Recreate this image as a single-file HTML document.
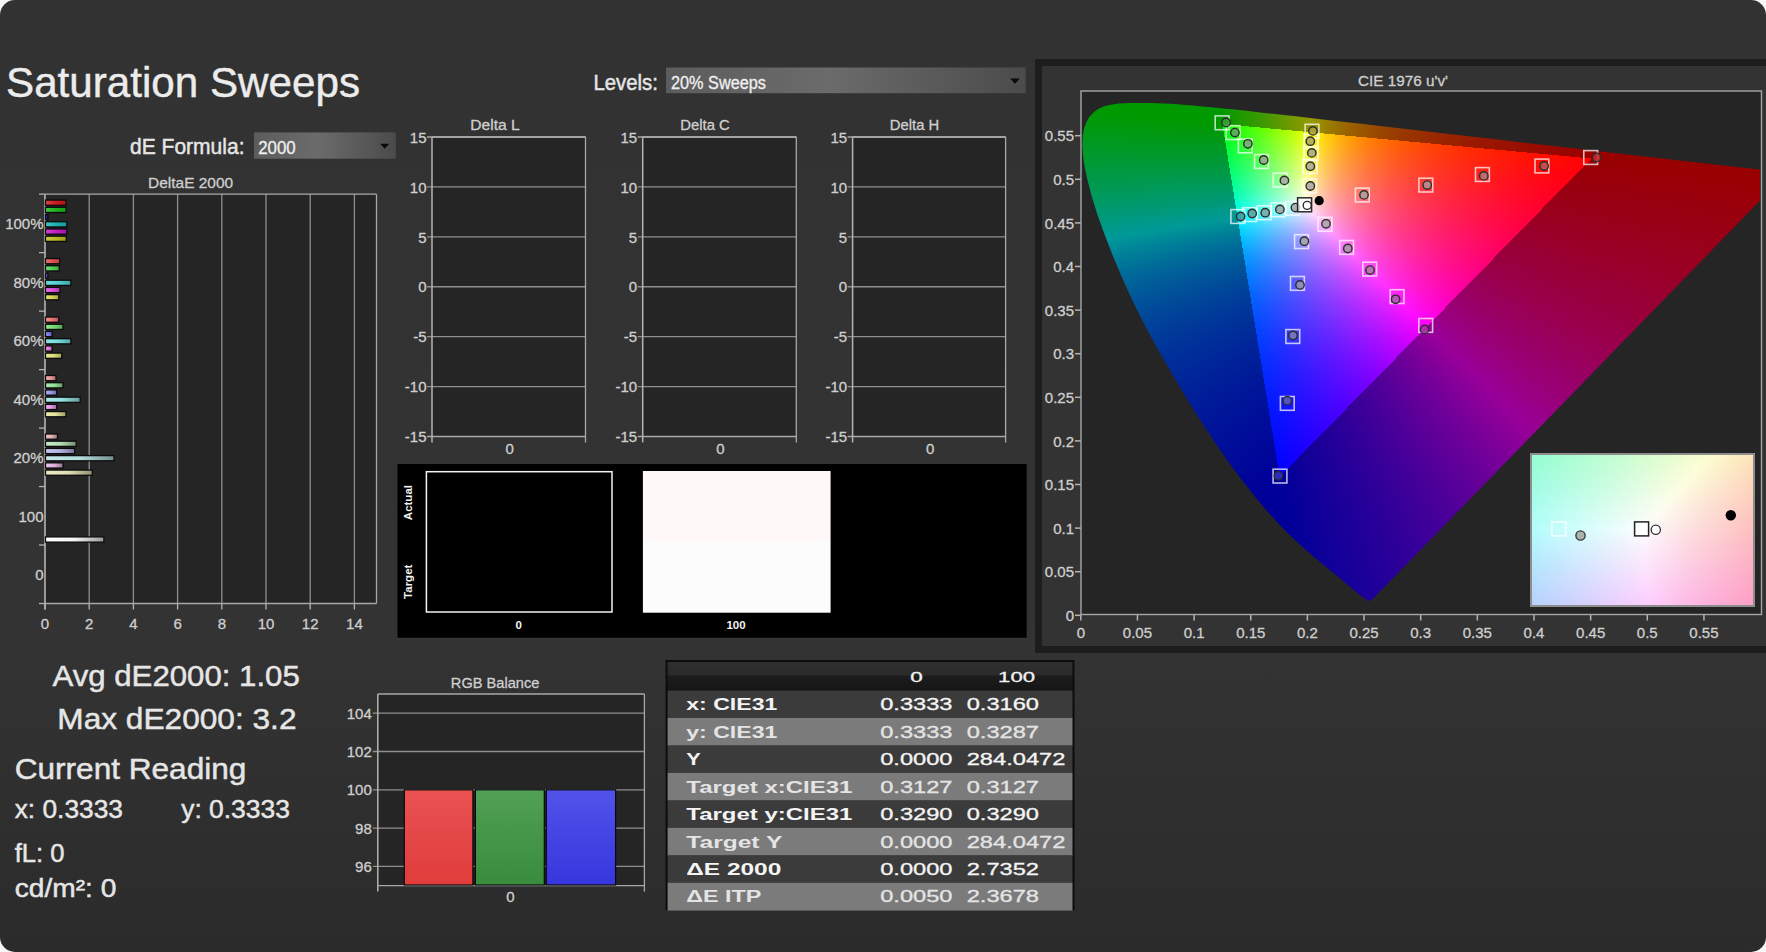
<!DOCTYPE html>
<html lang="en"><head><meta charset="utf-8"><title>Saturation Sweeps</title>
<style>
html,body{margin:0;padding:0;background:#f7f7f7}
body{width:1766px;height:952px;overflow:hidden;font-family:"Liberation Sans", sans-serif}
#app{position:relative;width:1766px;height:952px;background:linear-gradient(180deg,#323232 0,#333 68%,#2b2b2b 100%);border-radius:15px;overflow:hidden}
#app>div,#app>svg{position:absolute}
#ciepanel{left:1034.5px;top:59px;width:740px;height:594px;background:#1d1d1d}
#cieinner{left:1041.5px;top:66px;width:740px;height:580px;background:#333}
#cieplot{left:1081px;top:91px;width:680.5px;height:523.5px;background:#252525;overflow:hidden}
#locus{position:absolute;left:0;top:0;width:679.2px;height:524px;overflow:hidden;clip-path:polygon(290.8px 509.0px,290.7px 508.9px,290.6px 509.0px,290.5px 509.1px,290.4px 509.2px,290.3px 509.3px,290.2px 509.3px,290.0px 509.3px,289.9px 509.4px,289.7px 509.5px,289.5px 509.6px,289.3px 509.6px,289.1px 509.6px,288.8px 509.6px,288.5px 509.6px,288.2px 509.6px,287.9px 509.7px,287.5px 509.7px,287.0px 509.5px,286.4px 509.2px,285.6px 508.8px,284.5px 508.1px,283.3px 507.3px,281.9px 506.3px,280.4px 505.2px,278.7px 503.8px,276.6px 502.1px,274.2px 500.2px,271.6px 498.0px,268.8px 495.6px,265.7px 493.0px,262.3px 490.2px,258.6px 487.1px,254.4px 483.6px,249.7px 479.8px,244.6px 475.6px,239.2px 471.1px,233.3px 466.2px,226.9px 460.7px,219.9px 454.4px,212.5px 447.5px,204.6px 439.9px,196.0px 431.0px,186.2px 420.2px,175.1px 407.0px,163.0px 391.8px,150.2px 374.7px,136.7px 355.6px,122.7px 334.5px,108.2px 311.5px,93.6px 287.3px,79.2px 262.4px,65.4px 237.2px,52.7px 212.2px,41.5px 187.8px,31.7px 164.5px,23.3px 142.8px,16.2px 122.9px,10.7px 105.2px,6.6px 89.6px,3.7px 76.1px,2.0px 64.4px,1.4px 54.4px,1.7px 45.7px,2.9px 38.2px,5.1px 31.8px,8.0px 26.5px,11.7px 22.2px,15.9px 18.8px,20.7px 16.3px,26.0px 14.5px,31.6px 13.4px,37.5px 12.6px,43.7px 12.2px,50.1px 11.9px,56.5px 11.9px,63.0px 11.9px,69.4px 12.0px,76.0px 12.2px,82.7px 12.5px,89.6px 12.8px,96.7px 13.3px,104.0px 13.9px,111.6px 14.5px,119.4px 15.2px,127.5px 15.9px,135.9px 16.8px,144.7px 17.7px,153.8px 18.6px,163.3px 19.6px,173.3px 20.7px,183.6px 21.9px,194.3px 23.1px,205.5px 24.3px,217.2px 25.6px,229.3px 27.0px,241.9px 28.5px,255.0px 30.0px,268.5px 31.5px,282.6px 33.1px,297.0px 34.8px,312.0px 36.5px,327.3px 38.3px,343.0px 40.1px,359.1px 41.9px,375.4px 43.8px,392.0px 45.7px,408.6px 47.6px,424.9px 49.5px,441.0px 51.4px,456.9px 53.2px,472.8px 55.0px,488.4px 56.8px,503.4px 58.5px,517.7px 60.2px,531.4px 61.7px,544.4px 63.2px,556.7px 64.7px,568.3px 66.0px,579.2px 67.2px,589.3px 68.4px,598.6px 69.5px,607.4px 70.5px,615.5px 71.4px,623.1px 72.3px,630.3px 73.1px,637.1px 73.9px,643.5px 74.6px,649.6px 75.3px,655.2px 76.0px,660.4px 76.6px,665.2px 77.1px,669.5px 77.6px,673.4px 78.1px,677.0px 78.5px,680.2px 78.8px,683.1px 79.2px,685.7px 79.5px,688.0px 79.8px,690.1px 80.0px,691.9px 80.2px,693.5px 80.4px,694.8px 80.5px,695.9px 80.7px,697.0px 80.8px,697.9px 80.9px,698.8px 81.0px,699.7px 81.1px,700.6px 81.2px,701.4px 81.3px,702.1px 81.4px,702.9px 81.5px,703.5px 81.5px,704.2px 81.6px,704.7px 81.7px,705.2px 81.7px,705.6px 81.8px,705.9px 81.8px,706.1px 81.8px,706.1px 81.8px,706.1px 81.8px)}
#locus i{position:absolute;display:block;height:1.05px}
#inset{left:1529.5px;top:453px;width:225.5px;height:153.5px;background:#8e8e8e}
#insetin{position:absolute;left:2px;top:2px;right:2px;bottom:2px;overflow:hidden;background:#fff}
#insetin i{position:absolute;display:block;left:0;width:222px}
svg text{font-family:"Liberation Sans", sans-serif}
</style></head><body>
<div id="app">
<div id="ciepanel"></div><div id="cieinner"></div>
<div id="cieplot"><div id="locus">
<i style="top:11px;left:46px;width:27px;background:linear-gradient(90deg,#090 0.5px,#090 26.5px)"></i>
<i style="top:12px;left:32px;width:62px;background:linear-gradient(90deg,#090 0.5px,#090 61.5px)"></i>
<i style="top:13px;left:26px;width:82px;background:linear-gradient(90deg,#090 0.5px,#090 81.5px)"></i>
<i style="top:14px;left:22px;width:97px;background:linear-gradient(90deg,#090 0.5px,#090 96.5px)"></i>
<i style="top:15px;left:20px;width:110px;background:linear-gradient(90deg,#090 0.5px,#090 109.5px)"></i>
<i style="top:16px;left:17px;width:123px;background:linear-gradient(90deg,#090 0.5px,#019900 122.5px)"></i>
<i style="top:17px;left:15px;width:135px;background:linear-gradient(90deg,#090 0.5px,#090 123.5px,#0f9900 134.5px)"></i>
<i style="top:18px;left:14px;width:145px;background:linear-gradient(90deg,#090 0.5px,#090 124.5px,#1c9900 144.5px)"></i>
<i style="top:19px;left:12px;width:157px;background:linear-gradient(90deg,#090 0.5px,#090 126.5px,#2b9900 156.5px)"></i>
<i style="top:20px;left:11px;width:167px;background:linear-gradient(90deg,#090 0.5px,#090 128.5px,#389900 166.5px)"></i>
<i style="top:21px;left:10px;width:177px;background:linear-gradient(90deg,#009901 0.5px,#090 129.5px,#469900 176.5px)"></i>
<i style="top:22px;left:9px;width:187px;background:linear-gradient(90deg,#009902 0.5px,#090 130.5px,#590 186.5px)"></i>
<i style="top:23px;left:8px;width:197px;background:linear-gradient(90deg,#009903 0.5px,#090 32.5px,#090 131.5px,#359900 167.5px,#649900 196.5px)"></i>
<i style="top:24px;left:7px;width:207px;background:linear-gradient(90deg,#009904 0.5px,#090 43.5px,#090 132.5px,#3c9900 173.5px,#749900 206.5px)"></i>
<i style="top:25px;left:6px;width:216px;background:linear-gradient(90deg,#009905 0.5px,#090 55.5px,#090 134.5px,#469900 180.5px,#849900 215.5px)"></i>
<i style="top:26px;left:6px;width:225px;background:linear-gradient(90deg,#009907 0.5px,#090 66.5px,#090 134.5px,#4e9900 185.5px,#959900 224.5px)"></i>
<i style="top:27px;left:5px;width:235px;background:linear-gradient(90deg,#009908 0.5px,#090 77.5px,#090 135.5px,#4e9900 186.5px,#989900 226.5px,#998b00 234.5px)"></i>
<i style="top:28px;left:4px;width:245px;background:linear-gradient(90deg,#009909 0.5px,#090 89.5px,#090 136.5px,#4e9900 187.5px,#989900 227.5px,#997c00 244.5px)"></i>
<i style="top:29px;left:4px;width:253px;background:linear-gradient(90deg,#00990a 0.5px,#090 100.5px,#090 136.5px,#4c9900 186.5px,#989900 227.5px,#997100 252.5px)"></i>
<i style="top:30px;left:3px;width:263px;background:linear-gradient(90deg,#00990b 0.5px,#090 111.5px,#090 137.5px,#4c9900 187.5px,#989900 228.5px,#997c00 245.5px,#960 262.5px)"></i>
<i style="top:31px;left:3px;width:272px;background:linear-gradient(90deg,#00990c 0.5px,#019900 138.5px,#4e9900 188.5px,#989900 228.5px,#970 248.5px,#995c00 271.5px)"></i>
<i style="top:32px;left:3px;width:280px;background:linear-gradient(90deg,#00990d 0.5px,#090 138.5px,#509900 189.5px,#990 228.5px,#997300 251.5px,#950 279.5px)"></i>
<i style="top:33px;left:2px;width:290px;background:linear-gradient(90deg,#00990e 0.5px,#009901 140px,#03ff01 140px,#0dff00 145px,#099900 145px,#519900 191.5px,#990 229.5px,#998300 241.5px,#996f00 255.5px,#995d00 271.5px,#994d00 289.5px)"></i>
<i style="top:34px;left:2px;width:299px;background:linear-gradient(90deg,#00990f 0.5px,#009902 140px,#02ff04 140px,#25ff00 155px,#189900 155px,#589900 195.5px,#990 229.5px,#998000 243.5px,#996a00 259.5px,#995700 277.5px,#994600 298.5px)"></i>
<i style="top:35px;left:2px;width:307px;background:linear-gradient(90deg,#009910 0.5px,#009904 140px,#02ff06 140px,#41ff00 166px,#289900 166px,#5f9900 199.5px,#990 229.5px,#997e00 244.5px,#960 262.5px,#995200 282.5px,#994100 306.5px)"></i>
<i style="top:36px;left:1px;width:317px;background:linear-gradient(90deg,#091 0.5px,#009905 141px,#01ff08 141px,#5eff00 178px,#3a9900 178px,#690 204.5px,#990 230.5px,#997b00 247.5px,#996200 266.5px,#994d00 289.5px,#993b00 316.5px)"></i>
<i style="top:37px;left:1px;width:326px;background:linear-gradient(90deg,#009912 0.5px,#009907 141px,#01ff0b 141px,#79ff00 188px,#4a9900 188px,#999800 230.5px,#997900 248.5px,#995f00 269.5px,#994800 295.5px,#993600 325.5px)"></i>
<i style="top:38px;left:1px;width:335px;background:linear-gradient(90deg,#009913 0.5px,#009908 141px,#01ff0d 141px,#55ff06 174.5px,#9f0 199px,#5d9900 199px,#999800 230.5px,#970 249.5px,#995c00 272.5px,#994500 300.5px,#993100 334.5px)"></i>
<i style="top:39px;left:1px;width:343px;background:linear-gradient(90deg,#009914 0.5px,#009909 141px,#00ff0f 141px,#65ff08 180.5px,#baff00 210px,#729900 210px,#999800 230.5px,#997600 250.5px,#995900 275.5px,#994100 305.5px,#992d00 342.5px)"></i>
<i style="top:40px;left:0px;width:353px;background:linear-gradient(90deg,#009915 0.5px,#00990b 143px,#02ff11 143px,#76ff09 187.5px,#abff05 205.5px,#deff00 222px,#879900 222px,#999800 231.5px,#998300 242.5px,#997100 254.5px,#995200 283.5px,#993c00 314.5px,#992900 352.5px)"></i>
<i style="top:41px;left:0px;width:362px;background:linear-gradient(90deg,#009916 0.5px,#00990c 143px,#02ff14 143px,#4aff0f 171.5px,#7eff0b 190.5px,#b4ff07 208.5px,#feff01 230.5px,#fffd00 232px,#999600 232px,#998100 243.5px,#997000 255.5px,#995200 283.5px,#993900 318.5px,#992600 361.5px)"></i>
<i style="top:42px;left:0px;width:370px;background:linear-gradient(90deg,#009917 0.5px,#00990d 143px,#02ff16 143px,#4cff11 172.5px,#84ff0d 192.5px,#c1ff09 212.5px,#feff04 230.5px,#ffda00 243px,#998100 243px,#996200 266.5px,#994900 294.5px,#993400 328.5px,#992300 369.5px)"></i>
<i style="top:43px;left:0px;width:379px;background:linear-gradient(90deg,#009918 0.5px,#00990f 143px,#01ff18 143px,#4cff14 172.5px,#84ff10 192.5px,#c1ff0b 212.5px,#feff07 230.5px,#ffdc03 241.5px,#ffbe00 254px,#997100 254px,#995700 277.5px,#994100 305.5px,#992f00 338.5px,#992000 378.5px)"></i>
<i style="top:44px;left:0px;width:388px;background:linear-gradient(90deg,#009919 0.5px,#009910 143px,#01ff1b 143px,#4cff16 172.5px,#84ff13 192.5px,#c1ff0e 212.5px,#ffff0a 230.5px,#ffd105 245.5px,#ffa800 264px,#996400 264px,#994e00 287.5px,#993b00 315.5px,#992a00 348.5px,#991d00 387.5px)"></i>
<i style="top:45px;left:0px;width:396px;background:linear-gradient(90deg,#00991a 0.5px,#009912 143px,#00ff1d 143px,#4cff19 172.5px,#84ff15 192.5px,#c2ff11 212.5px,#ffff0d 230.5px,#ffe20a 239.5px,#ffc406 250.5px,#ffac03 261.5px,#ff9500 275px,#995800 275px,#994500 298.5px,#993400 326.5px,#991a00 395.5px)"></i>
<i style="top:46px;left:0px;width:405px;background:linear-gradient(90deg,#00991b 0.5px,#009913 144px,#03ff1f 144px,#4cff1b 172.5px,#84ff18 192.5px,#beff14 211.5px,#ffff10 230.5px,#ffdb0c 241.5px,#ffba07 254.5px,#ff9d04 269.5px,#ff8400 286px,#994e00 286px,#993e00 309.5px,#992f00 336.5px,#991800 404.5px)"></i>
<i style="top:47px;left:0px;width:414px;background:linear-gradient(90deg,#00991c 0.5px,#009914 144px,#02ff22 144px,#4bff1e 172.5px,#81ff1b 191.5px,#bbff17 210.5px,#fffe13 230.5px,#ffd50e 243.5px,#ffb109 258.5px,#ff9204 275.5px,#ff7600 296px,#994600 296px,#992b00 346.5px,#991500 413.5px)"></i>
<i style="top:48px;left:0px;width:422px;background:linear-gradient(90deg,#00991d 0.5px,#009916 144px,#02ff24 144px,#4bff20 172.5px,#81ff1d 191.5px,#bbff1a 210.5px,#fffe16 230.5px,#ffd00f 245.5px,#ffa90a 262.5px,#ff8705 282.5px,#ff6900 307px,#993f00 307px,#992600 357.5px,#991300 421.5px)"></i>
<i style="top:49px;left:0px;width:431px;background:linear-gradient(90deg,#00991e 0.5px,#009917 144px,#01ff26 144px,#4bff23 172.5px,#81ff20 191.5px,#b8ff1d 209.5px,#fffe19 230.5px,#ffe315 238.5px,#ffcd12 246.5px,#ffa10b 266.5px,#ff7d05 289.5px,#ff5e00 318px,#993800 318px,#920 367.5px,#910 430.5px)"></i>
<i style="top:50px;left:0px;width:440px;background:linear-gradient(90deg,#00991f 0.5px,#009918 144px,#01ff29 144px,#4bff25 172.5px,#81ff23 191.5px,#b8ff20 209.5px,#fffd1c 230.5px,#ffe017 239.5px,#ffc713 248.5px,#ffb010 258.5px,#ff990c 270.5px,#ff7406 296.5px,#f50 328px,#993200 328px,#991f00 377.5px,#990f00 439.5px)"></i>
<i style="top:51px;left:0px;width:448px;background:linear-gradient(90deg,#009920 0.5px,#00991a 144px,#00ff2b 144px,#4bff28 172.5px,#81ff25 191.5px,#b5ff23 208.5px,#fdff20 229.5px,#fffd1f 230.5px,#ffdf1a 239.5px,#ffc415 249.5px,#ffac11 260.5px,#ff940d 273.5px,#ff6d06 302.5px,#ff4c00 339px,#992d00 339px,#991b00 387.5px,#990d00 447.5px)"></i>
<i style="top:52px;left:0px;width:457px;background:linear-gradient(90deg,#009921 0.5px,#00991b 145px,#03ff2d 145px,#4aff2a 172.5px,#84ff28 192.5px,#bfff25 211.5px,#feff23 229.5px,#ffdc1c 240.5px,#ffbf17 251.5px,#ffa512 263.5px,#ff8d0e 277.5px,#ff780a 292.5px,#ff6507 309.5px,#ff4300 350px,#992800 350px,#991800 397.5px,#990b00 456.5px)"></i>
<i style="top:53px;left:0px;width:466px;background:linear-gradient(90deg,#092 0.5px,#00991d 145px,#02ff30 145px,#4aff2d 172.5px,#83ff2b 192.5px,#bfff28 211.5px,#feff26 229.5px,#ffdc1f 240.5px,#ffbc19 252.5px,#ffa114 265.5px,#ff880f 280.5px,#ff720b 297.5px,#ff5f07 315.5px,#ff3d00 360px,#992400 360px,#991600 407.5px,#990900 465.5px)"></i>
<i style="top:54px;left:0px;width:475px;background:linear-gradient(90deg,#009923 0.5px,#00991e 145px,#02ff32 145px,#4dff2f 173.5px,#83ff2d 192.5px,#bfff2b 211.5px,#ffff29 229.5px,#ffd821 241.5px,#ffba1b 253.5px,#ff9d15 267.5px,#ff8410 283.5px,#ff6d0c 301.5px,#ff5907 321.5px,#ff4604 344.5px,#ff3600 371px,#992000 371px,#991300 418.5px,#990800 474.5px)"></i>
<i style="top:55px;left:0px;width:483px;background:linear-gradient(90deg,#009924 0.5px,#00991f 145px,#01ff34 145px,#4dff32 173.5px,#83ff30 192.5px,#c0ff2e 211.5px,#ffff2c 229.5px,#ffd824 241.5px,#ffb71d 254.5px,#ff9917 269.5px,#ff7f11 286.5px,#ff670c 306.5px,#ff5208 328.5px,#ff4004 353.5px,#ff3000 382px,#991c00 382px,#990600 482.5px)"></i>
<i style="top:56px;left:0px;width:492px;background:linear-gradient(90deg,#009925 0.5px,#009921 145px,#01ff37 145px,#4cff34 173.5px,#83ff33 192.5px,#c0ff31 211.5px,#ffff2f 229.5px,#ffd826 241.5px,#ffb41f 255.5px,#ff9618 271.5px,#ff7b12 289.5px,#ff620d 310.5px,#ff4e08 333.5px,#ff3b04 360.5px,#ff2a00 392px,#991900 392px,#990500 491.5px)"></i>
<i style="top:57px;left:0px;width:501px;background:linear-gradient(90deg,#009926 0.5px,#092 145px,#00ff39 145px,#4cff37 173.5px,#83ff35 192.5px,#bdff34 210.5px,#fffe32 229.5px,#ffd428 242.5px,#ffb221 256.5px,#ff9219 273.5px,#ff7613 292.5px,#ff5e0d 314.5px,#ff4909 339.5px,#ff3604 368.5px,#ff2500 403px,#991600 403px,#990300 500.5px)"></i>
<i style="top:58px;left:0px;width:509px;background:linear-gradient(90deg,#009927 0.5px,#009924 146px,#03ff3b 146px,#4cff3a 173.5px,#83ff38 192.5px,#bdff37 210.5px,#fffe35 229.5px,#ffd42b 242.5px,#ffaf22 257.5px,#ff8e1a 275.5px,#ff7214 295.5px,#ff590e 319.5px,#ff4409 346.5px,#ff3104 377.5px,#ff2000 414px,#991300 414px,#990200 508.5px)"></i>
<i style="top:59px;left:0px;width:518px;background:linear-gradient(90deg,#009928 0.5px,#009925 146px,#02ff3e 146px,#49ff3c 172.5px,#80ff3b 191.5px,#b9ff3a 209.5px,#fffe38 229.5px,#ffd42e 242.5px,#ffad24 258.5px,#ff8b1c 277.5px,#ff6e15 298.5px,#ff550f 323.5px,#ff3f09 352.5px,#ff2c04 385.5px,#ff1c00 425px,#991000 425px,#900 517.5px)"></i>
<i style="top:60px;left:0px;width:527px;background:linear-gradient(90deg,#009929 0.5px,#009927 146px,#02ff40 146px,#49ff3f 172.5px,#80ff3e 191.5px,#b6ff3d 208.5px,#fffd3b 229.5px,#ffd12f 243.5px,#ffa825 260.5px,#ff871d 279.5px,#ff6b16 301.5px,#ff510f 327.5px,#ff3c0a 357.5px,#ff2805 393.5px,#ff1800 435px,#990e00 435px,#900 526.5px)"></i>
<i style="top:61px;left:0px;width:536px;background:linear-gradient(90deg,#00992b 0.5px,#009928 146px,#01ff43 146px,#4bff41 173.5px,#80ff41 191.5px,#b6ff40 208.5px,#fffd3e 229.5px,#ffcd31 244.5px,#ffa627 261.5px,#ff841e 281.5px,#ff6716 304.5px,#ff4e10 331.5px,#ff380a 363.5px,#ff2405 401.5px,#ff1400 446px,#990c00 446px,#900 516.5px,#900 535.5px)"></i>
<i style="top:62px;left:0px;width:544px;background:linear-gradient(90deg,#00992c 0.5px,#009929 146px,#01ff45 146px,#4bff44 173.5px,#80ff43 191.5px,#b3ff43 207.5px,#feff41 228.5px,#fffd41 229.5px,#ffcd34 244.5px,#ffa429 262.5px,#ff811f 283.5px,#ff6317 307.5px,#ff4a10 336.5px,#ff340a 369.5px,#ff2105 409.5px,#ff1000 457px,#990900 457px,#900 515.5px,#900 543.5px)"></i>
<i style="top:63px;left:0px;width:553px;background:linear-gradient(90deg,#00992d 0.5px,#00992b 146px,#00ff48 146px,#7dff46 190.5px,#bdff45 210.5px,#feff45 228.5px,#fffc44 229.5px,#ffe13c 237.5px,#ffca36 245.5px,#ffa12a 263.5px,#ff7d20 285.5px,#ff6018 310.5px,#ff4611 340.5px,#ff300a 375.5px,#ff1d05 417.5px,#ff0d00 467px,#990700 467px,#900 514.5px,#900 552.5px)"></i>
<i style="top:64px;left:0px;width:562px;background:linear-gradient(90deg,#00992e 0.5px,#00992c 147px,#03ff4a 147px,#4bff49 173.5px,#83ff49 192.5px,#c1ff48 211.5px,#feff48 228.5px,#ffcc39 244.5px,#ffa12c 263.5px,#ff7d22 285.5px,#ff5e19 312.5px,#f41 343.5px,#ff2e0b 380.5px,#ff1a05 424.5px,#ff0900 478px,#990500 478px,#900 513.5px,#900 561.5px)"></i>
<i style="top:65px;left:0px;width:570px;background:linear-gradient(90deg,#00992f 0.5px,#00992e 147px,#02ff4c 147px,#4aff4c 173.5px,#83ff4c 192.5px,#c1ff4b 211.5px,#ffff4b 228.5px,#ffe343 236.5px,#ffc93b 245.5px,#ff9f2e 264.5px,#ff7a23 287.5px,#ff5b1a 314.5px,#ff4112 347.5px,#ff2a0b 386.5px,#ff1705 432.5px,#ff0600 489px,#990400 489px,#900 512.5px,#900 569.5px)"></i>
<i style="top:66px;left:0px;width:579px;background:linear-gradient(90deg,#009930 0.5px,#00992f 147px,#02ff4f 147px,#4aff4f 173.5px,#83ff4f 192.5px,#c1ff4e 211.5px,#ffff4e 228.5px,#ffe345 236.5px,#ffcb3e 244.5px,#ffb337 254.5px,#ff9e30 264.5px,#ff7824 288.5px,#ff591b 316.5px,#ff3e13 350.5px,#ff280c 390.5px,#ff1506 438.5px,#ff0300 499px,#990200 499px,#900 578.5px)"></i>
<i style="top:67px;left:0px;width:588px;background:linear-gradient(90deg,#009931 0.5px,#009931 147px,#02ff51 147px,#4aff51 173.5px,#83ff51 192.5px,#beff51 210.5px,#ffff51 228.5px,#ffe348 236.5px,#ffc840 245.5px,#ff9c32 265.5px,#ff7525 290.5px,#ff561b 319.5px,#ff3c13 354.5px,#ff250c 396.5px,#ff1206 446.5px,#f00 510px,#900 510px,#900 587.5px)"></i>
<i style="top:68px;left:0px;width:596px;background:linear-gradient(90deg,#009932 0.5px,#009932 147px,#01ff54 147px,#4dff54 174.5px,#83ff54 192.5px,#beff54 210.5px,#fffe54 228.5px,#ffe24b 236.5px,#ffc842 245.5px,#ff9c34 265.5px,#ff7527 290.5px,#ff561d 319.5px,#ff3b14 354.5px,#ff250d 396.5px,#ff1207 445.5px,#ff0001 510px,#900 510px,#900 595.5px)"></i>
<i style="top:69px;left:1px;width:604px;background:linear-gradient(90deg,#093 0.5px,#009934 146px,#01ff56 146px,#4cff57 173.5px,#83ff57 191.5px,#bbff57 208.5px,#fffe57 227.5px,#ffe24e 235.5px,#ffc845 244.5px,#ff9b36 264.5px,#ff7529 289.5px,#ff551e 318.5px,#ff3b15 353.5px,#ff250e 394.5px,#ff1208 443.5px,#ff0002 508px,#990001 508px,#900 603.5px)"></i>
<i style="top:70px;left:1px;width:613px;background:linear-gradient(90deg,#009934 0.5px,#009935 146px,#00ff59 146px,#49ff59 172.5px,#7fff5a 190.5px,#b7ff5a 207.5px,#fffe5b 227.5px,#ffe151 235.5px,#ffc748 244.5px,#ff9b38 264.5px,#ff752b 288.5px,#ff5620 317.5px,#ff3b17 352.5px,#ff250f 393.5px,#ff1209 442.5px,#ff0003 507px,#990002 507px,#900 612.5px)"></i>
<i style="top:71px;left:1px;width:622px;background:linear-gradient(90deg,#009935 0.5px,#009937 147px,#03ff5b 147px,#49ff5c 172.5px,#7fff5d 190.5px,#b7ff5d 207.5px,#fffd5e 227.5px,#ffe154 235.5px,#ffc74a 244.5px,#ff9a3a 264.5px,#ff752d 288.5px,#ff5622 317.5px,#ff3b18 352.5px,#ff2510 393.5px,#ff120a 442.5px,#ff0004 506px,#990002 506px,#900 621.5px)"></i>
<i style="top:72px;left:1px;width:630px;background:linear-gradient(90deg,#009936 0.5px,#009938 147px,#02ff5e 147px,#49ff5f 172.5px,#7fff60 190.5px,#b4ff60 206.5px,#fdff62 226.5px,#fffd61 227.5px,#ffe156 235.5px,#ffc64d 244.5px,#ff9a3c 264.5px,#ff752f 288.5px,#ff5523 317.5px,#ff3b19 352.5px,#ff2511 393.5px,#ff120b 441.5px,#ff0004 505px,#990003 505px,#900 629.5px)"></i>
<i style="top:73px;left:1px;width:639px;background:linear-gradient(90deg,#009937 0.5px,#00993a 147px,#02ff61 147px,#49ff62 172.5px,#7fff63 190.5px,#bfff64 209.5px,#feff65 226.5px,#fffc64 227.5px,#ffe059 235.5px,#ffc950 243.5px,#ffb047 253.5px,#ff9b3f 263.5px,#ff7631 287.5px,#ff5625 316.5px,#ff3b1b 351.5px,#ff2513 392.5px,#ff120c 440.5px,#ff0005 504px,#990003 504px,#900 638.5px)"></i>
<i style="top:74px;left:1px;width:648px;background:linear-gradient(90deg,#009938 0.5px,#00993b 147px,#01ff63 147px,#48ff64 172.5px,#7fff66 190.5px,#bfff67 209.5px,#feff68 226.5px,#fffc67 227.5px,#ffe05c 235.5px,#ffc853 243.5px,#ffb049 253.5px,#ff9b41 263.5px,#ff7533 287.5px,#ff5527 316.5px,#ff3b1c 350.5px,#ff2514 391.5px,#ff120d 439.5px,#ff0006 503px,#990004 503px,#900 647.5px)"></i>
<i style="top:75px;left:2px;width:655px;background:linear-gradient(90deg,#00993a 0.5px,#00993d 146px,#01ff66 146px,#4bff67 172.5px,#82ff69 190.5px,#bfff6a 208.5px,#feff6b 225.5px,#ffe05f 234.5px,#ffc856 242.5px,#ffaf4c 252.5px,#ff9b44 262.5px,#ff7535 286.5px,#ff5628 314.5px,#ff3c1e 348.5px,#ff2515 389.5px,#ff120e 437.5px,#ff0007 501px,#990004 501px,#900 654.5px)"></i>
<i style="top:76px;left:2px;width:664px;background:linear-gradient(90deg,#00993b 0.5px,#00993f 146px,#00ff68 146px,#4bff6a 172.5px,#82ff6c 190.5px,#bfff6d 208.5px,#ffff6f 225.5px,#ffe263 233.5px,#ffca59 241.5px,#ffb14f 251.5px,#ff9c47 261.5px,#ff7637 285.5px,#ff562a 314.5px,#ff3b1f 348.5px,#ff2516 389.5px,#ff120f 437.5px,#ff0008 500px,#990005 500px,#900 663.5px)"></i>
<i style="top:77px;left:2px;width:673px;background:linear-gradient(90deg,#00993c 0.5px,#009940 147px,#03ff6b 147px,#4bff6d 172.5px,#82ff6f 190.5px,#bfff70 208.5px,#ffff72 225.5px,#ffe266 233.5px,#ffca5c 241.5px,#ffb151 251.5px,#ff9c49 261.5px,#ff7539 285.5px,#ff562c 313.5px,#ff3c21 347.5px,#ff2517 388.5px,#ff1210 436.5px,#ff0009 499px,#990005 499px,#900 672.5px)"></i>
<i style="top:78px;left:2px;width:680px;background:linear-gradient(90deg,#00993d 0.5px,#009942 147px,#02ff6e 147px,#4aff70 172.5px,#82ff71 190.5px,#bfff73 208.5px,#ffff75 225.5px,#ffe269 233.5px,#ffc95f 241.5px,#ffb054 251.5px,#ff9b4b 261.5px,#ff753b 285.5px,#ff562d 313.5px,#ff3b22 347.5px,#ff2519 387.5px,#ff1211 435.5px,#ff000a 498px,#990006 498px,#900 679.5px)"></i>
<i style="top:79px;left:2px;width:680px;background:linear-gradient(90deg,#00993e 0.5px,#009943 147px,#02ff70 147px,#4aff73 172.5px,#82ff75 190.5px,#bcff77 207.5px,#fffe79 225.5px,#ffe16c 233.5px,#ffc961 241.5px,#ffb056 251.5px,#ff9b4d 261.5px,#ff753c 285.5px,#ff562f 313.5px,#ff3b23 347.5px,#ff251a 387.5px,#ff1212 435.5px,#ff000a 497px,#990006 497px,#900 679.5px)"></i>
<i style="top:80px;left:2px;width:680px;background:linear-gradient(90deg,#00993f 0.5px,#009945 147px,#01ff73 147px,#4aff75 172.5px,#82ff78 190.5px,#bcff7a 207.5px,#fffe7c 225.5px,#ffe16f 233.5px,#ffc964 241.5px,#ffaf59 251.5px,#ff9b4f 261.5px,#ff763f 284.5px,#ff5631 312.5px,#ff3b25 346.5px,#ff251b 386.5px,#ff1213 434.5px,#ff000b 496px,#990007 496px,#900 679.5px)"></i>
<i style="top:81px;left:3px;width:679px;background:linear-gradient(90deg,#009940 0.5px,#009946 146px,#01ff76 146px,#4aff78 171.5px,#82ff7b 189.5px,#b8ff7d 205.5px,#fffd7f 224.5px,#ffe072 232.5px,#ffc867 240.5px,#ffaf5b 250.5px,#ff9a52 260.5px,#ff7541 283.5px,#ff5632 311.5px,#ff3b26 345.5px,#ff251c 385.5px,#ff1214 432.5px,#ff000c 494px,#990007 494px,#900 678.5px)"></i>
<i style="top:82px;left:3px;width:679px;background:linear-gradient(90deg,#009941 0.5px,#009948 146px,#00ff78 146px,#49ff7b 171.5px,#7eff7d 188.5px,#b5ff80 204.5px,#fffd82 224.5px,#ffe075 232.5px,#ffc869 240.5px,#ffaf5e 250.5px,#ff9a54 260.5px,#ff7543 283.5px,#ff5534 311.5px,#ff3b28 344.5px,#ff251d 384.5px,#ff1215 431.5px,#ff000d 493px,#990008 493px,#900 678.5px)"></i>
<i style="top:83px;left:3px;width:679px;background:linear-gradient(90deg,#009942 0.5px,#00994a 147px,#03ff7b 147px,#49ff7e 171.5px,#7eff81 188.5px,#b5ff83 204.5px,#fdff87 223.5px,#fffd86 224.5px,#ffe078 232.5px,#ffc76c 240.5px,#ff9b57 259.5px,#ff7645 282.5px,#ff5636 310.5px,#ff3c29 343.5px,#ff251f 383.5px,#ff1216 430.5px,#ff000e 492px,#990008 492px,#900 678.5px)"></i>
<i style="top:84px;left:3px;width:679px;background:linear-gradient(90deg,#094 0.5px,#00994b 147px,#02ff7e 147px,#49ff81 171.5px,#7eff84 188.5px,#bcff87 206.5px,#feff8a 223.5px,#fffc89 224.5px,#ffdf7b 232.5px,#ffc76f 240.5px,#ff9b59 259.5px,#ff7547 282.5px,#ff5637 310.5px,#ff3b2b 343.5px,#ff2520 383.5px,#ff1217 430.5px,#ff000f 491px,#990009 491px,#900 678.5px)"></i>
<i style="top:85px;left:4px;width:678px;background:linear-gradient(90deg,#009945 0.5px,#00994d 146px,#02ff80 146px,#49ff84 170.5px,#7eff87 187.5px,#bdff8a 205.5px,#feff8e 222.5px,#fffc8c 223.5px,#ffdf7e 231.5px,#ffc771 239.5px,#ff9a5b 258.5px,#ff7549 281.5px,#ff5539 309.5px,#ff3b2c 342.5px,#ff2521 381.5px,#ff1218 428.5px,#ff0010 489px,#990009 489px,#990001 677.5px)"></i>
<i style="top:86px;left:4px;width:678px;background:linear-gradient(90deg,#009946 0.5px,#00994f 146px,#01ff83 146px,#4bff87 171.5px,#85ff8a 189.5px,#c0ff8e 206.5px,#feff91 222.5px,#ffe282 230.5px,#ffc976 238.5px,#ffb26a 247.5px,#ff9c5f 257.5px,#ff764b 280.5px,#ff563b 308.5px,#ff3b2e 341.5px,#ff2522 380.5px,#ff1219 427.5px,#f01 488px,#99000a 488px,#990001 677.5px)"></i>
<i style="top:87px;left:4px;width:678px;background:linear-gradient(90deg,#009947 0.5px,#009950 146px,#01ff86 146px,#4bff8a 171.5px,#85ff8d 189.5px,#c1ff91 206.5px,#ffff95 222.5px,#ffe185 230.5px,#ffc978 238.5px,#ffb16c 247.5px,#ff9c61 257.5px,#ff764d 280.5px,#ff563d 307.5px,#ff3c2f 340.5px,#ff2524 379.5px,#ff121a 426.5px,#f01 487px,#99000a 487px,#990001 677.5px)"></i>
<i style="top:88px;left:4px;width:678px;background:linear-gradient(90deg,#009948 0.5px,#009952 146px,#00ff89 146px,#4bff8d 171.5px,#85ff90 189.5px,#c1ff94 206.5px,#ffff98 222.5px,#ffe188 230.5px,#ffc87b 238.5px,#ffb16f 247.5px,#ff9b63 257.5px,#ff754f 280.5px,#ff563f 307.5px,#ff3b30 340.5px,#ff2525 379.5px,#ff121b 425.5px,#ff0012 486px,#99000b 486px,#990002 677.5px)"></i>
<i style="top:89px;left:4px;width:678px;background:linear-gradient(90deg,#009949 0.5px,#009954 147px,#03ff8c 147px,#4bff90 171.5px,#81ff93 188.5px,#bdff97 205.5px,#fffe9c 222.5px,#ffe18b 230.5px,#ffc87e 238.5px,#ffb071 247.5px,#ff9b65 257.5px,#ff7551 280.5px,#ff5640 307.5px,#ff3b32 340.5px,#ff2526 379.5px,#ff121c 425.5px,#ff0013 485px,#99000b 485px,#990002 677.5px)"></i>
<i style="top:90px;left:5px;width:677px;background:linear-gradient(90deg,#00994a 0.5px,#095 146px,#03ff8e 146px,#4aff93 170.5px,#81ff97 187.5px,#baff9b 203.5px,#fffe9f 221.5px,#ffe490 228.5px,#ffca82 236.5px,#ffb275 245.5px,#ff9c69 255.5px,#ff7654 278.5px,#ff5642 305.5px,#ff3c34 337.5px,#ff2528 376.5px,#ff121d 422.5px,#ff0014 483px,#99000c 483px,#990002 676.5px)"></i>
<i style="top:91px;left:5px;width:677px;background:linear-gradient(90deg,#00994c 0.5px,#009957 146px,#02ff91 146px,#4aff96 170.5px,#81ff9a 187.5px,#baff9e 203.5px,#fffea2 221.5px,#ffe393 228.5px,#ffca85 236.5px,#ffb278 245.5px,#ff9c6b 255.5px,#ff7555 278.5px,#ff5644 305.5px,#ff3c35 337.5px,#ff2529 376.5px,#ff121e 422.5px,#ff0015 482px,#99000d 482px,#990003 676.5px)"></i>
<i style="top:92px;left:5px;width:677px;background:linear-gradient(90deg,#00994d 0.5px,#009959 146px,#01ff94 146px,#4aff99 170.5px,#81ff9d 187.5px,#b6ffa1 202.5px,#fffda6 221.5px,#ffe396 228.5px,#ffc988 236.5px,#ffb17a 245.5px,#ff9b6d 255.5px,#ff7557 278.5px,#ff5645 305.5px,#ff3b36 337.5px,#ff252a 376.5px,#ff121f 422.5px,#ff0016 481px,#99000d 481px,#990003 676.5px)"></i>
<i style="top:93px;left:5px;width:677px;background:linear-gradient(90deg,#00994e 0.5px,#00995a 146px,#01ff97 146px,#4aff9c 170.5px,#7effa0 186.5px,#b3ffa4 201.5px,#fdffaa 220.5px,#fffda9 221.5px,#ffe299 228.5px,#ffc98b 236.5px,#ffb17d 245.5px,#ff9b70 255.5px,#ff7559 278.5px,#ff5547 305.5px,#ff3b38 337.5px,#ff252b 375.5px,#ff1220 421.5px,#ff0017 480px,#99000e 480px,#990003 676.5px)"></i>
<i style="top:94px;left:6px;width:676px;background:linear-gradient(90deg,#00994f 0.5px,#00995c 145px,#00ff9a 145px,#7effa3 185.5px,#beffa9 203.5px,#fdffae 219.5px,#fffcac 220.5px,#ffe29d 227.5px,#ffc88d 235.5px,#ffb17f 244.5px,#ff9b72 254.5px,#ff765c 276.5px,#ff5649 303.5px,#ff3b3a 335.5px,#ff252d 373.5px,#ff1221 419.5px,#ff0018 478px,#99000e 478px,#990004 675.5px)"></i>
<i style="top:95px;left:6px;width:676px;background:linear-gradient(90deg,#009950 0.5px,#00995e 146px,#03ff9d 146px,#49ffa2 169.5px,#7dffa7 185.5px,#beffac 203.5px,#feffb2 219.5px,#fffcb0 220.5px,#ffe1a0 227.5px,#ffc890 235.5px,#ffb082 244.5px,#ff9a74 254.5px,#ff755e 276.5px,#ff554b 303.5px,#ff3b3b 335.5px,#ff252e 373.5px,#ff1223 418.5px,#ff0019 477px,#99000f 477px,#990004 675.5px)"></i>
<i style="top:96px;left:6px;width:676px;background:linear-gradient(90deg,#009952 0.5px,#009960 146px,#03ffa0 146px,#49ffa5 169.5px,#7dffaa 185.5px,#beffb0 203.5px,#feffb5 219.5px,#fffcb3 220.5px,#ffe1a3 227.5px,#ffc893 235.5px,#ffb084 244.5px,#ff9a77 254.5px,#ff7560 276.5px,#ff554c 303.5px,#ff3b3c 335.5px,#ff252f 373.5px,#ff1224 418.5px,#ff001a 476px,#99000f 476px,#990004 675.5px)"></i>
<i style="top:97px;left:6px;width:676px;background:linear-gradient(90deg,#009953 0.5px,#009961 146px,#02ffa2 146px,#4cffa9 170.5px,#84ffae 187.5px,#c2ffb3 204.5px,#ffffb9 219.5px,#ffe1a6 227.5px,#ffc796 235.5px,#ff9b7a 253.5px,#ff7663 275.5px,#ff564f 302.5px,#ff3b3e 334.5px,#ff2530 372.5px,#ff1225 417.5px,#ff001a 475px,#990010 475px,#990004 675.5px)"></i>
<i style="top:98px;left:7px;width:675px;background:linear-gradient(90deg,#009954 0.5px,#009963 145px,#02ffa5 145px,#4cffac 169.5px,#84ffb1 186.5px,#c2ffb7 203.5px,#ffffbd 218.5px,#ffe4ab 225.5px,#ffca9b 233.5px,#ffb18b 242.5px,#ff9b7d 252.5px,#ff7565 274.5px,#ff5651 300.5px,#ff3c40 331.5px,#ff2532 369.5px,#ff1226 414.5px,#ff001b 473px,#990010 473px,#990005 674.5px)"></i>
<i style="top:99px;left:7px;width:675px;background:linear-gradient(90deg,#095 0.5px,#009965 145px,#01ffa8 145px,#4bffaf 169.5px,#84ffb5 186.5px,#bfffba 202.5px,#ffffc1 218.5px,#ffe3af 225.5px,#ffc99e 233.5px,#ffb18e 242.5px,#ff9a7f 252.5px,#ff7567 274.5px,#ff5652 300.5px,#ff3c42 331.5px,#ff2533 369.5px,#ff1227 414.5px,#ff001c 472px,#901 472px,#990005 674.5px)"></i>
<i style="top:100px;left:7px;width:675px;background:linear-gradient(90deg,#009956 0.5px,#009967 145px,#01ffab 145px,#4bffb2 169.5px,#80ffb8 185.5px,#bbffbd 201.5px,#fffec4 218.5px,#ffe3b2 225.5px,#ffc9a0 233.5px,#ffb090 242.5px,#ff9a81 252.5px,#ff7569 274.5px,#ff5554 300.5px,#ff3b43 331.5px,#ff2534 369.5px,#ff1228 413.5px,#ff001d 471px,#901 471px,#990005 674.5px)"></i>
<i style="top:101px;left:8px;width:674px;background:linear-gradient(90deg,#009958 0.5px,#009968 145px,#03ffae 145px,#4bffb5 168.5px,#80ffbb 184.5px,#bbffc1 200.5px,#fffec8 217.5px,#ffe2b5 224.5px,#ffc8a3 232.5px,#ffb093 241.5px,#ff9c85 250.5px,#ff766b 272.5px,#ff5656 298.5px,#ff3c45 329.5px,#ff2536 367.5px,#ff1229 411.5px,#ff001e 469px,#990012 469px,#990006 673.5px)"></i>
<i style="top:102px;left:8px;width:674px;background:linear-gradient(90deg,#009959 0.5px,#00996a 145px,#03ffb1 145px,#4bffb9 168.5px,#80ffbe 184.5px,#b7ffc4 199.5px,#fffdcb 217.5px,#ffe2b8 224.5px,#ffc8a6 232.5px,#ffb095 241.5px,#ff9b88 250.5px,#ff756d 272.5px,#ff5658 298.5px,#ff3b46 329.5px,#ff2537 366.5px,#ff122b 410.5px,#ff001f 468px,#990013 468px,#990006 673.5px)"></i>
<i style="top:103px;left:8px;width:674px;background:linear-gradient(90deg,#00995a 0.5px,#00996c 145px,#02ffb4 145px,#4affbc 168.5px,#80ffc2 184.5px,#b7ffc8 199.5px,#fffdcf 217.5px,#ffe2bc 224.5px,#ffc7a9 232.5px,#ffaf98 241.5px,#ff9b8a 250.5px,#ff756f 272.5px,#ff555a 298.5px,#ff3b47 329.5px,#ff2538 366.5px,#ff122b 410.5px,#ff0020 467px,#990013 467px,#990006 673.5px)"></i>
<i style="top:104px;left:8px;width:674px;background:linear-gradient(90deg,#00995b 0.5px,#00996e 145px,#02ffb7 145px,#4affbf 168.5px,#80ffc5 184.5px,#b4ffcb 198.5px,#fdffd4 216.5px,#fffdd2 217.5px,#ffe1bf 224.5px,#ffc7ac 232.5px,#ffaf9b 241.5px,#ff9a8c 250.5px,#ff7672 271.5px,#ff565c 297.5px,#ff3b49 328.5px,#ff253a 365.5px,#ff122d 409.5px,#ff0021 466px,#990014 466px,#990007 673.5px)"></i>
<i style="top:105px;left:9px;width:673px;background:linear-gradient(90deg,#00995d 0.5px,#009970 144px,#01ffba 144px,#7dffc8 182.5px,#bcffd0 199.5px,#fdffd8 215.5px,#fffcd6 216.5px,#ffe1c2 223.5px,#ffc7af 231.5px,#ffae9d 240.5px,#ff9a8f 249.5px,#ff7574 270.5px,#ff565e 296.5px,#ff3b4b 327.5px,#ff253b 364.5px,#ff122e 407.5px,#f02 464px,#990014 464px,#990007 672.5px)"></i>
<i style="top:106px;left:9px;width:673px;background:linear-gradient(90deg,#00995e 0.5px,#009971 144px,#01ffbd 144px,#7dffcc 182.5px,#bcffd4 199.5px,#feffdc 215.5px,#fffcda 216.5px,#ffe0c5 223.5px,#ffc6b2 231.5px,#ffaea0 240.5px,#ff9991 249.5px,#ff7576 270.5px,#ff555f 296.5px,#ff3b4d 326.5px,#ff253c 363.5px,#ff122f 406.5px,#ff0023 463px,#990015 463px,#990007 672.5px)"></i>
<i style="top:107px;left:9px;width:673px;background:linear-gradient(90deg,#00995f 0.5px,#009973 144px,#00ffc1 144px,#4dffc9 168.5px,#84ffd0 184.5px,#c0ffd8 200.5px,#feffe0 215.5px,#ffe0c9 223.5px,#ffc9b7 230.5px,#ffb0a5 239.5px,#ff9b95 248.5px,#ff7679 269.5px,#ff5662 295.5px,#ff3c4e 325.5px,#ff253e 362.5px,#ff1230 405.5px,#ff0024 462px,#990016 462px,#990008 672.5px)"></i>
<i style="top:108px;left:10px;width:672px;background:linear-gradient(90deg,#009960 0.5px,#009975 144px,#03ffc4 144px,#4cffcd 167.5px,#83ffd4 183.5px,#c0ffdc 199.5px,#ffffe4 214.5px,#ffe3cf 221.5px,#ffc8ba 229.5px,#ff9d99 246.5px,#ff777d 267.5px,#ff5664 293.5px,#ff3c50 323.5px,#ff253f 360.5px,#ff1232 403.5px,#ff0025 460px,#990016 460px,#990008 671.5px)"></i>
<i style="top:109px;left:10px;width:672px;background:linear-gradient(90deg,#009962 0.5px,#097 144px,#02ffc7 144px,#4cffd0 167.5px,#83ffd7 183.5px,#c0ffdf 199.5px,#ffffe8 214.5px,#ffe3d2 221.5px,#ffc8bd 229.5px,#ff9c9c 246.5px,#ff777f 267.5px,#ff5666 293.5px,#ff3c52 323.5px,#ff2541 360.5px,#ff1233 403.5px,#ff0026 459px,#990017 459px,#990008 671.5px)"></i>
<i style="top:110px;left:10px;width:671px;background:linear-gradient(90deg,#009963 0.5px,#00996d 78.5px,#009979 144px,#02ffca 144px,#4cffd4 167.5px,#83ffdb 183.5px,#bcffe3 198.5px,#fffeec 214.5px,#ffe2d5 221.5px,#ffc7c0 229.5px,#ff9c9e 246.5px,#ff7681 267.5px,#ff5667 293.5px,#ff3b53 323.5px,#ff2542 359.5px,#ff1234 402.5px,#ff0027 458px,#990017 458px,#990008 670.5px)"></i>
<i style="top:111px;left:10px;width:670px;background:linear-gradient(90deg,#009964 0.5px,#00996e 78.5px,#00997b 144px,#01ffcd 144px,#4cffd7 167.5px,#83ffdf 183.5px,#bcffe7 198.5px,#fffeef 214.5px,#ffe2d9 221.5px,#ffc7c3 229.5px,#ff9ba1 246.5px,#ff7683 267.5px,#ff566a 292.5px,#ff3c55 322.5px,#ff2544 358.5px,#ff1235 401.5px,#ff0028 457px,#990018 457px,#990009 669.5px)"></i>
<i style="top:112px;left:11px;width:668px;background:linear-gradient(90deg,#009965 0.5px,#009970 78.5px,#00997d 143px,#01ffd0 143px,#4bffda 166.5px,#80ffe2 181.5px,#b9ffea 196.5px,#fffef3 213.5px,#ffe1dc 220.5px,#ffc6c6 228.5px,#ff9ba3 245.5px,#ff7585 266.5px,#ff566c 291.5px,#ff3b57 321.5px,#ff2545 357.5px,#ff1236 400.5px,#ff0029 455px,#990019 455px,#990009 667.5px)"></i>
<i style="top:113px;left:11px;width:667px;background:linear-gradient(90deg,#009967 0.5px,#009972 78.5px,#00997f 143px,#00ffd4 143px,#4bffde 166.5px,#7fffe5 181.5px,#b9ffee 196.5px,#fffdf7 213.5px,#ffe1df 220.5px,#ffc6c9 228.5px,#ff9aa6 245.5px,#ff7587 266.5px,#ff566d 291.5px,#ff3b58 321.5px,#ff2546 357.5px,#ff1237 399.5px,#ff002a 454px,#990019 454px,#990009 666.5px)"></i>
<i style="top:114px;left:11px;width:666px;background:linear-gradient(90deg,#009968 0.5px,#009973 78.5px,#009981 144px,#03ffd7 144px,#4bffe1 166.5px,#7fffe9 181.5px,#b5fff1 195.5px,#fdfffc 212.5px,#fffdfb 213.5px,#ffe0e3 220.5px,#ffc6cc 228.5px,#ff9aa8 245.5px,#ff768a 265.5px,#ff5670 290.5px,#ff3b5a 320.5px,#ff2548 355.5px,#ff1239 398.5px,#ff002b 453px,#99001a 453px,#99000a 665.5px)"></i>
<i style="top:115px;left:12px;width:664px;background:linear-gradient(90deg,#009969 0.5px,#009975 78.5px,#009983 143px,#03ffda 143px,#4bffe5 165.5px,#7fffed 180.5px,#b9fff6 195.5px,#f4ffff 209.5px,#fffcfe 212.5px,#ffe0e6 219.5px,#ffc5d0 227.5px,#ff9aab 244.5px,#ff768c 264.5px,#ff5672 289.5px,#ff3b5b 319.5px,#ff2549 354.5px,#ff123a 396.5px,#ff002c 451px,#99001a 451px,#901 543.5px,#99000a 663.5px)"></i>
<i style="top:116px;left:12px;width:663px;background:linear-gradient(90deg,#00996b 0.5px,#097 78.5px,#009985 143px,#02ffde 143px,#74ffef 177.5px,#a5fff6 190.5px,#daffff 203.5px,#fff8fe 213.5px,#ffdce7 220.5px,#ffc2d0 228.5px,#ff97ab 245.5px,#ff748d 265.5px,#ff5473 290.5px,#ff3b5d 319.5px,#ff254a 354.5px,#ff123b 396.5px,#ff002d 450px,#99001b 450px,#990012 542.5px,#99000b 662.5px)"></i>
<i style="top:117px;left:12px;width:662px;background:linear-gradient(90deg,#00996c 0.5px,#009978 78.5px,#009987 143px,#01ffe1 143px,#69fff1 174.5px,#c1ffff 197.5px,#fff3fe 214.5px,#ffd8e7 221.5px,#ffbed0 229.5px,#ff94ac 246.5px,#ff708d 267.5px,#ff5373 291.5px,#ff3a5e 320.5px,#ff244b 355.5px,#ff123c 396.5px,#ff002e 449px,#99001c 449px,#990012 541.5px,#99000b 661.5px)"></i>
<i style="top:118px;left:13px;width:660px;background:linear-gradient(90deg,#00996d 0.5px,#00997a 77.5px,#009989 142px,#01ffe4 142px,#5bfff2 169.5px,#a9ffff 190.5px,#ffeefe 214.5px,#ffd4e7 221.5px,#ffbbd1 229.5px,#ff92ad 246.5px,#ff6e8d 267.5px,#ff5174 291.5px,#ff395e 320.5px,#ff244c 354.5px,#ff113d 395.5px,#ff002f 448px,#99001c 448px,#990013 540.5px,#99000b 659.5px)"></i>
<i style="top:119px;left:13px;width:659px;background:linear-gradient(90deg,#00996f 0.5px,#00997b 77.5px,#00998b 142px,#00ffe8 142px,#54fff5 167.5px,#92ffff 184.5px,#ffeaff 215.5px,#ffd0e7 222.5px,#ffbad4 229.5px,#ff91af 246.5px,#ff6e90 267.5px,#ff5176 291.5px,#ff3860 320.5px,#ff234e 354.5px,#ff113e 396.5px,#ff0030 447px,#99001d 447px,#990013 539.5px,#99000c 658.5px)"></i>
<i style="top:120px;left:13px;width:658px;background:linear-gradient(90deg,#009970 0.5px,#00997d 78.5px,#00998d 143px,#03ffeb 143px,#7bffff 178.5px,#ffe5ff 216.5px,#ffb7d4 230.5px,#ff8fb0 247.5px,#ff6c90 268.5px,#ff5077 292.5px,#ff3861 320.5px,#ff234f 354.5px,#ff103f 396.5px,#ff0031 446px,#99001d 446px,#990014 538.5px,#99000c 657.5px)"></i>
<i style="top:121px;left:14px;width:656px;background:linear-gradient(90deg,#009971 0.5px,#00997f 77.5px,#00998f 142px,#03ffef 142px,#65ffff 171.5px,#ffe1ff 216.5px,#ffc9e8 223.5px,#ffb1d2 231.5px,#ff8baf 248.5px,#ff6a91 268.5px,#ff4e77 292.5px,#ff3762 320.5px,#ff2250 354.5px,#ff1040 395.5px,#ff0032 444px,#99001e 444px,#990014 536.5px,#99000c 655.5px)"></i>
<i style="top:122px;left:14px;width:655px;background:linear-gradient(90deg,#009973 0.5px,#009980 77.5px,#009991 142px,#02fff2 142px,#50ffff 165.5px,#fdf 217.5px,#ffb1d5 231.5px,#ff8ab1 248.5px,#ff6a93 268.5px,#ff4e79 292.5px,#ff3663 320.5px,#ff2251 353.5px,#ff1041 394.5px,#f03 443px,#99001f 443px,#990015 535.5px,#99000d 654.5px)"></i>
<i style="top:123px;left:14px;width:654px;background:linear-gradient(90deg,#009974 0.5px,#009982 77.5px,#009993 142px,#02fff5 142px,#3bffff 159.5px,#ffd9ff 218.5px,#ffaed6 232.5px,#ff88b2 249.5px,#ff6894 269.5px,#ff4c7a 293.5px,#ff3564 321.5px,#ff2152 354.5px,#ff1042 394.5px,#ff0034 442px,#99001f 442px,#990015 534.5px,#99000d 653.5px)"></i>
<i style="top:124px;left:15px;width:652px;background:linear-gradient(90deg,#009976 0.5px,#009984 77.5px,#009995 141px,#01fff9 141px,#26ffff 152.5px,#ffd5ff 218.5px,#ffaad6 232.5px,#ff86b2 249.5px,#ff6694 269.5px,#ff4b7b 293.5px,#ff3465 321.5px,#ff2153 353.5px,#ff1043 392.5px,#ff0036 440px,#990020 440px,#990015 532.5px,#99000d 651.5px)"></i>
<i style="top:125px;left:15px;width:651px;background:linear-gradient(90deg,#097 0.5px,#009986 77.5px,#009997 141px,#00fffc 141px,#35f8ff 157.5px,#ffd1ff 219.5px,#ffa7d6 233.5px,#ff83b3 250.5px,#ff6495 270.5px,#ff4b7c 293.5px,#ff3466 321.5px,#ff2054 354.5px,#ff0f44 393.5px,#ff0037 439px,#990021 439px,#990016 531.5px,#99000e 650.5px)"></i>
<i style="top:126px;left:15px;width:650px;background:linear-gradient(90deg,#009978 0.5px,#009987 75.5px,#099 142px,#03feff 142px,#ffcdff 220.5px,#ffa4d7 234.5px,#ff81b4 251.5px,#ff6396 271.5px,#ff497d 294.5px,#ff3367 322.5px,#ff2055 354.5px,#ff0f45 392.5px,#ff0038 438px,#990021 438px,#990016 530.5px,#99000e 649.5px)"></i>
<i style="top:127px;left:16px;width:648px;background:linear-gradient(90deg,#00997a 0.5px,#098 72.5px,#099 132.5px,#009799 141px,#03faff 141px,#ffc9ff 220.5px,#ffa2d7 234.5px,#ff7fb4 251.5px,#ff6197 271.5px,#ff487e 294.5px,#ff3269 321.5px,#ff2056 353.5px,#ff0f46 391.5px,#ff0039 436px,#902 436px,#990017 528.5px,#99000e 647.5px)"></i>
<i style="top:128px;left:16px;width:647px;background:linear-gradient(90deg,#00997b 0.5px,#009989 68.5px,#099 126.5px,#009599 141px,#02f7ff 141px,#ffc5ff 221.5px,#ff9fd8 235.5px,#ff7db5 252.5px,#ff5f97 272.5px,#ff477f 295.5px,#ff3169 322.5px,#ff1f57 354.5px,#ff0f47 391.5px,#ff003a 435px,#990023 435px,#990017 527.5px,#99000f 646.5px)"></i>
<i style="top:129px;left:16px;width:646px;background:linear-gradient(90deg,#00997c 0.5px,#00998a 65.5px,#099 120.5px,#009399 141px,#02f4ff 141px,#ffc2ff 222.5px,#ff9cd8 236.5px,#ff7ab5 253.5px,#ff5f99 272.5px,#ff4680 295.5px,#ff316b 322.5px,#ff1f59 353.5px,#ff0f49 390.5px,#ff003b 434px,#990023 434px,#990018 526.5px,#99000f 645.5px)"></i>
<i style="top:130px;left:17px;width:644px;background:linear-gradient(90deg,#00997e 0.5px,#099 113.5px,#009199 140px,#01f1ff 140px,#ffbeff 222.5px,#ff99d8 236.5px,#ff78b6 253.5px,#ff5d9a 272.5px,#ff4581 295.5px,#ff306b 322.5px,#ff1e59 353.5px,#ff0e4a 389.5px,#ff003c 432px,#990024 432px,#990018 524.5px,#990010 643.5px)"></i>
<i style="top:131px;left:17px;width:643px;background:linear-gradient(90deg,#00997f 0.5px,#099 107.5px,#008f99 140px,#00edff 140px,#ffbaff 223.5px,#ff96d9 237.5px,#ff76b7 254.5px,#ff5c9b 273.5px,#ff4482 296.5px,#ff306d 322.5px,#ff1e5a 353.5px,#ff0e4b 389.5px,#ff003d 431px,#990025 431px,#990019 522.5px,#990010 642.5px)"></i>
<i style="top:132px;left:17px;width:642px;background:linear-gradient(90deg,#009981 0.5px,#099 102.5px,#008d99 141px,#03eaff 141px,#ffb7ff 224.5px,#ff94d9 238.5px,#ff74b7 255.5px,#ff5a9b 274.5px,#ff4383 296.5px,#ff2f6e 322.5px,#ff1d5c 353.5px,#ff0e4c 388.5px,#ff003f 430px,#990025 430px,#990019 521.5px,#990010 641.5px)"></i>
<i style="top:133px;left:18px;width:640px;background:linear-gradient(90deg,#009982 0.5px,#099 95.5px,#008b99 140px,#03e7ff 140px,#ffb4ff 224.5px,#ff91d9 238.5px,#ff72b8 255.5px,#ff589c 274.5px,#ff4284 296.5px,#ff2e6f 322.5px,#ff1d5d 352.5px,#ff0e4d 387.5px,#ff0040 428px,#990026 428px,#99001a 519.5px,#901 639.5px)"></i>
<i style="top:134px;left:18px;width:639px;background:linear-gradient(90deg,#009984 0.5px,#099 89.5px,#008999 140px,#02e4ff 140px,#ffb0ff 225.5px,#ff8eda 239.5px,#ff70b8 256.5px,#ff579c 275.5px,#ff4185 297.5px,#ff2e70 322.5px,#ff1d5e 352.5px,#ff0e4e 386.5px,#ff0041 427px,#990027 427px,#99001a 518.5px,#901 638.5px)"></i>
<i style="top:135px;left:18px;width:638px;background:linear-gradient(90deg,#009985 0.5px,#099 83.5px,#008799 140px,#02e1ff 140px,#ffadff 226.5px,#ff8cda 240.5px,#ff70ba 256.5px,#ff569e 275.5px,#ff4086 297.5px,#ff2d72 322.5px,#ff1c5f 352.5px,#ff0e4f 386.5px,#ff0042 426px,#990027 426px,#99001b 517.5px,#901 637.5px)"></i>
<i style="top:136px;left:19px;width:636px;background:linear-gradient(90deg,#009987 0.5px,#099 76.5px,#008699 139px,#01deff 139px,#faf 226.5px,#ff89da 240.5px,#ff6ebb 256.5px,#ff559f 275.5px,#ff3f87 297.5px,#ff2c72 322.5px,#ff1c60 351.5px,#ff0e51 384.5px,#ff0043 424px,#990028 424px,#99001c 515.5px,#990012 635.5px)"></i>
<i style="top:137px;left:19px;width:635px;background:linear-gradient(90deg,#098 0.5px,#099 70.5px,#008499 139px,#01dbff 139px,#ffa7ff 227.5px,#ff87db 241.5px,#ff6cbb 257.5px,#ff53a0 276.5px,#ff3f88 297.5px,#ff2c74 322.5px,#ff1c61 351.5px,#ff0d52 384.5px,#f04 423px,#990029 423px,#99001c 514.5px,#990012 634.5px)"></i>
<i style="top:138px;left:20px;width:634px;background:linear-gradient(90deg,#00998a 0.5px,#099 63.5px,#008299 139px,#03d8ff 139px,#ffa4ff 227.5px,#ff84db 241.5px,#ff6abc 257.5px,#ff52a0 276.5px,#ff3d89 297.5px,#ff2b74 322.5px,#ff1b63 350.5px,#ff0d53 383.5px,#ff0046 421px,#99002a 421px,#99001c 513.5px,#990012 633.5px)"></i>
<i style="top:139px;left:20px;width:633px;background:linear-gradient(90deg,#00998b 0.5px,#099 57.5px,#008099 139px,#03d5ff 139px,#ffa1ff 228.5px,#ff82db 242.5px,#ff68bc 258.5px,#ff51a2 276.5px,#ff3d8b 297.5px,#ff2b76 322.5px,#ff1b64 350.5px,#ff0047 420px,#99002a 420px,#99001d 511.5px,#990013 632.5px)"></i>
<i style="top:140px;left:20px;width:632px;background:linear-gradient(90deg,#00998d 0.5px,#099 51.5px,#007f99 139px,#02d3ff 139px,#ff9eff 229.5px,#ff80db 243.5px,#ff66bd 259.5px,#ff50a3 277.5px,#ff3c8b 298.5px,#ff2a77 322.5px,#ff1b65 350.5px,#ff0048 419px,#99002b 419px,#99001e 510.5px,#990013 631.5px)"></i>
<i style="top:141px;left:21px;width:630px;background:linear-gradient(90deg,#00998e 0.5px,#099 44.5px,#007d99 138px,#02d0ff 138px,#ff9bff 229.5px,#ff7ddc 243.5px,#ff64bd 259.5px,#ff4ea3 277.5px,#ff3a8c 298.5px,#ff2978 322.5px,#ff1a66 349.5px,#ff0049 417px,#99002c 417px,#99001e 508.5px,#990014 629.5px)"></i>
<i style="top:142px;left:21px;width:629px;background:linear-gradient(90deg,#009990 0.5px,#099 38.5px,#007c99 138px,#01ceff 138px,#ff98ff 230.5px,#ff7bdc 244.5px,#ff63bf 259.5px,#ff4ea5 277.5px,#ff3a8e 298.5px,#ff2979 322.5px,#ff1a67 349.5px,#ff004b 416px,#99002d 416px,#99001f 507.5px,#990014 628.5px)"></i>
<i style="top:143px;left:21px;width:628px;background:linear-gradient(90deg,#009991 0.5px,#099 32.5px,#007a99 138px,#01cbff 138px,#ff95ff 231.5px,#ff79dc 245.5px,#ff62c0 260.5px,#ff4ca6 278.5px,#ff398e 299.5px,#ff297a 322.5px,#ff1a69 349.5px,#ff004c 415px,#99002d 415px,#99001f 506.5px,#990014 627.5px)"></i>
<i style="top:144px;left:22px;width:626px;background:linear-gradient(90deg,#009993 0.5px,#099 25.5px,#007999 137px,#00c9ff 137px,#ff92ff 231.5px,#f7d 245.5px,#ff60c0 260.5px,#ff4ba6 278.5px,#ff3890 298.5px,#ff287c 321.5px,#ff196a 348.5px,#ff004d 413px,#99002e 413px,#990020 504.5px,#990015 625.5px)"></i>
<i style="top:145px;left:22px;width:625px;background:linear-gradient(90deg,#009994 0.5px,#099 19.5px,#079 138px,#03c6ff 138px,#ff8fff 232.5px,#ff74dd 246.5px,#ff5ec1 261.5px,#ff49a7 279.5px,#ff3790 299.5px,#ff277c 322.5px,#ff196b 348.5px,#ff004e 412px,#99002f 412px,#990020 503.5px,#990015 624.5px)"></i>
<i style="top:146px;left:22px;width:624px;background:linear-gradient(90deg,#009996 0.5px,#009799 19.5px,#007699 138px,#02c4ff 138px,#ff8dff 233.5px,#ff72dd 247.5px,#ff5cc1 262.5px,#ff49a8 279.5px,#ff3792 299.5px,#ff277f 321.5px,#ff196d 347.5px,#ff0050 411px,#990030 411px,#990021 502.5px,#990015 623.5px)"></i>
<i style="top:147px;left:23px;width:622px;background:linear-gradient(90deg,#009998 0.5px,#007499 137px,#02c1ff 137px,#ff8aff 233.5px,#ff70dd 247.5px,#ff5bc2 262.5px,#ff47a9 279.5px,#ff3692 299.5px,#ff267f 321.5px,#ff186d 347.5px,#ff0051 409px,#990030 409px,#990021 500.5px,#990016 621.5px)"></i>
<i style="top:148px;left:23px;width:621px;background:linear-gradient(90deg,#099 0.5px,#007399 137px,#01bfff 137px,#ff87ff 234.5px,#ff70e0 247.5px,#ff5ac4 262.5px,#ff47ab 279.5px,#ff3594 299.5px,#ff2681 321.5px,#ff186f 346.5px,#ff0052 408px,#990031 408px,#902 499.5px,#990016 620.5px)"></i>
<i style="top:149px;left:24px;width:619px;background:linear-gradient(90deg,#009799 0.5px,#007299 136px,#01bdff 136px,#ff85ff 234.5px,#ff6ee0 247.5px,#ff58c4 262.5px,#ff45ab 279.5px,#ff3495 299.5px,#ff2581 321.5px,#ff1870 346.5px,#ff0053 406px,#990032 406px,#902 497.5px,#990017 618.5px)"></i>
<i style="top:150px;left:24px;width:618px;background:linear-gradient(90deg,#009699 0.5px,#007099 136px,#00baff 136px,#ff82ff 235.5px,#ff6be0 248.5px,#ff57c4 263.5px,#ff44ac 280.5px,#ff3496 299.5px,#ff2582 321.5px,#ff1872 345.5px,#f05 405px,#903 405px,#990023 496.5px,#990017 617.5px)"></i>
<i style="top:151px;left:24px;width:617px;background:linear-gradient(90deg,#009499 0.5px,#006f99 137px,#03b8ff 137px,#ff80ff 236.5px,#ff69e1 249.5px,#ff55c5 264.5px,#ff43ac 281.5px,#ff3297 300.5px,#ff2484 321.5px,#ff1773 345.5px,#ff0056 404px,#903 404px,#990023 495.5px,#990017 616.5px)"></i>
<i style="top:152px;left:25px;width:615px;background:linear-gradient(90deg,#009399 0.5px,#006d99 136px,#02b6ff 136px,#ff7dff 236.5px,#ff67e1 249.5px,#ff53c5 264.5px,#ff42ae 280.5px,#ff3298 299.5px,#ff2485 320.5px,#ff1774 344.5px,#ff0057 402px,#990034 402px,#990024 493.5px,#990018 614.5px)"></i>
<i style="top:153px;left:25px;width:614px;background:linear-gradient(90deg,#009199 0.5px,#006c99 136px,#02b4ff 136px,#ff7bff 237.5px,#ff65e1 250.5px,#ff52c6 265.5px,#ff41af 281.5px,#ff3199 300.5px,#ff2386 321.5px,#ff1775 344.5px,#ff0059 401px,#990035 401px,#990025 492.5px,#990018 613.5px)"></i>
<i style="top:154px;left:26px;width:612px;background:linear-gradient(90deg,#008f99 0.5px,#006b99 135px,#01b2ff 135px,#ff79ff 237.5px,#ff63e1 250.5px,#ff51c8 264.5px,#ff40b0 280.5px,#ff319a 299.5px,#ff2387 320.5px,#ff1677 343.5px,#ff005a 399px,#990036 399px,#990025 490.5px,#990019 611.5px)"></i>
<i style="top:155px;left:26px;width:611px;background:linear-gradient(90deg,#008e99 0.5px,#006a99 135px,#01b0ff 135px,#ff76ff 238.5px,#ff61e1 251.5px,#ff4ec6 266.5px,#ff3eaf 282.5px,#ff2f9b 300.5px,#ff1678 343.5px,#ff005c 398px,#990037 398px,#990026 489.5px,#990019 610.5px)"></i>
<i style="top:156px;left:26px;width:610px;background:linear-gradient(90deg,#008d99 0.5px,#006899 135px,#00aeff 135px,#ff74ff 239.5px,#ff60e2 252.5px,#ff4ec8 266.5px,#ff3eb1 282.5px,#ff2f9c 300.5px,#ff1679 343.5px,#ff005d 397px,#990037 397px,#990026 488.5px,#990019 609.5px)"></i>
<i style="top:157px;left:27px;width:608px;background:linear-gradient(90deg,#008b99 0.5px,#006799 135px,#03abff 135px,#ff72ff 239.5px,#ff5ee2 252.5px,#ff4cc9 266.5px,#ff3cb2 282.5px,#ff2e9d 300.5px,#ff157a 342.5px,#ff005e 395px,#990038 395px,#990027 486.5px,#99001a 607.5px)"></i>
<i style="top:158px;left:27px;width:607px;background:linear-gradient(90deg,#008a99 0.5px,#069 135px,#02a9ff 135px,#ff6fff 240.5px,#ff5ce2 253.5px,#ff4bc9 267.5px,#ff3bb2 283.5px,#ff2d9e 300.5px,#ff157c 341.5px,#ff0060 394px,#990039 394px,#990027 485.5px,#99001a 606.5px)"></i>
<i style="top:159px;left:28px;width:605px;background:linear-gradient(90deg,#089 0.5px,#006599 134px,#02a7ff 134px,#ff6dff 240.5px,#ff5be4 252.5px,#ff4acb 266.5px,#ff3bb4 282.5px,#ff2da0 299.5px,#ff157d 340.5px,#ff0061 392px,#99003a 392px,#990028 483.5px,#99001b 604.5px)"></i>
<i style="top:160px;left:28px;width:604px;background:linear-gradient(90deg,#008799 0.5px,#006499 134px,#01a5ff 134px,#ff6bff 241.5px,#ff58e3 254.5px,#ff49cb 267.5px,#ff39b4 283.5px,#ff2ca1 300.5px,#ff157f 340.5px,#ff0063 391px,#99003b 391px,#990029 481.5px,#99001b 603.5px)"></i>
<i style="top:161px;left:28px;width:603px;background:linear-gradient(90deg,#008699 0.5px,#006299 134px,#01a4ff 134px,#ff69ff 242.5px,#ff56e3 255.5px,#ff47cc 268.5px,#ff39b6 283.5px,#ff2ba2 300.5px,#ff1480 340.5px,#ff0064 390px,#99003c 390px,#990029 480.5px,#99001b 602.5px)"></i>
<i style="top:162px;left:29px;width:601px;background:linear-gradient(90deg,#008499 0.5px,#006199 133px,#00a2ff 133px,#ff67ff 242.5px,#ff55e3 255.5px,#ff46cc 268.5px,#ff38b6 283.5px,#ff2aa3 300.5px,#ff1481 339.5px,#ff0065 388px,#99003d 388px,#99002a 478.5px,#99001c 600.5px)"></i>
<i style="top:163px;left:29px;width:600px;background:linear-gradient(90deg,#008399 0.5px,#006099 134px,#039fff 134px,#ff65ff 243.5px,#ff53e3 256.5px,#f4c 269.5px,#ff36b7 284.5px,#ff2aa4 300.5px,#ff1382 339.5px,#ff0067 387px,#99003d 387px,#99002b 477.5px,#99001c 599.5px)"></i>
<i style="top:164px;left:29px;width:599px;background:linear-gradient(90deg,#008299 0.5px,#005f99 134px,#029eff 134px,#ff63ff 244.5px,#ff51e3 257.5px,#ff43cd 270.5px,#ff29a5 301.5px,#ff1383 339.5px,#ff0068 386px,#99003e 386px,#99002b 476.5px,#99001d 598.5px)"></i>
<i style="top:165px;left:30px;width:597px;background:linear-gradient(90deg,#008199 0.5px,#005e99 133px,#029cff 133px,#ff61ff 244.5px,#ff51e6 256.5px,#ff42cf 269.5px,#ff35b9 284.5px,#ff28a6 300.5px,#ff1385 337.5px,#ff006a 384px,#99003f 384px,#99002c 474.5px,#99001d 596.5px)"></i>
<i style="top:166px;left:30px;width:596px;background:linear-gradient(90deg,#007f99 0.5px,#005d99 133px,#019aff 133px,#ff5fff 245.5px,#ff4fe6 257.5px,#ff41cf 270.5px,#ff28a8 300.5px,#ff1387 337.5px,#ff006b 383px,#990040 383px,#99002c 473.5px,#99001d 595.5px)"></i>
<i style="top:167px;left:31px;width:594px;background:linear-gradient(90deg,#007e99 0.5px,#005c99 132px,#0199ff 132px,#ff5dff 245.5px,#ff4de6 257.5px,#ff3fcf 270.5px,#ff27a8 300.5px,#ff1288 336.5px,#ff006d 381px,#990041 381px,#99002d 471.5px,#99001e 593.5px)"></i>
<i style="top:168px;left:31px;width:593px;background:linear-gradient(90deg,#007d99 0.5px,#005b99 132px,#0097ff 132px,#ff5bff 246.5px,#ff4ce6 258.5px,#ff3ed0 271.5px,#ff26a8 301.5px,#ff1288 337.5px,#ff006e 381px,#990042 381px,#99002d 471.5px,#99001e 592.5px)"></i>
<i style="top:169px;left:32px;width:591px;background:linear-gradient(90deg,#007c99 0.5px,#005a99 132px,#0295ff 132px,#ff59ff 246.5px,#ff4ae6 258.5px,#ff3cd0 271.5px,#ff25aa 300.5px,#ff128a 335.5px,#ff006f 379px,#990043 379px,#99002e 469.5px,#99001f 590.5px)"></i>
<i style="top:170px;left:32px;width:590px;background:linear-gradient(90deg,#007a99 0.5px,#005999 132px,#0293ff 132px,#ff57ff 247.5px,#ff3cd2 271.5px,#ff25ac 300.5px,#ff118c 335.5px,#ff0071 378px,#904 378px,#99002f 468.5px,#99001f 589.5px)"></i>
<i style="top:171px;left:32px;width:589px;background:linear-gradient(90deg,#007999 0.5px,#005899 132px,#0292ff 132px,#f5f 248.5px,#ff3bd2 272.5px,#ff24ac 301.5px,#ff118d 335.5px,#ff0073 377px,#904 377px,#99002f 467.5px,#990020 588.5px)"></i>
<i style="top:172px;left:33px;width:587px;background:linear-gradient(90deg,#007899 0.5px,#005799 131px,#0190ff 131px,#ff53ff 248.5px,#ff39d2 272.5px,#ff24ad 300.5px,#ff118e 334.5px,#ff0074 375px,#990045 375px,#990030 465.5px,#990020 586.5px)"></i>
<i style="top:173px;left:33px;width:586px;background:linear-gradient(90deg,#079 0.5px,#005699 131px,#018eff 131px,#ff52ff 249.5px,#ff38d3 273.5px,#ff23af 300.5px,#ff1190 333.5px,#ff0076 374px,#990046 374px,#990031 463.5px,#990020 585.5px)"></i>
<i style="top:174px;left:34px;width:584px;background:linear-gradient(90deg,#007699 0.5px,#059 130px,#008dff 130px,#ff50ff 249.5px,#ff36d3 273.5px,#ff22af 300.5px,#ff1091 332.5px,#f07 372px,#990047 372px,#990031 461.5px,#990021 583.5px)"></i>
<i style="top:175px;left:34px;width:584px;background:linear-gradient(90deg,#007599 0.5px,#005499 131px,#028bff 131px,#ff4eff 250.5px,#ff36d5 273.5px,#ff22b1 300.5px,#ff1093 332.5px,#ff0079 371px,#990048 371px,#990032 461.5px,#990021 583.5px)"></i>
<i style="top:176px;left:34px;width:583px;background:linear-gradient(90deg,#007499 0.5px,#005399 131px,#028aff 131px,#ff4cff 251.5px,#ff35d5 274.5px,#ff21b2 300.5px,#ff1094 332.5px,#ff007b 370px,#990049 370px,#990032 460.5px,#902 582.5px)"></i>
<i style="top:177px;left:35px;width:581px;background:linear-gradient(90deg,#007299 0.5px,#005299 130px,#0288ff 130px,#ff4bff 251.5px,#ff33d5 274.5px,#ff20b3 300.5px,#ff0f95 331.5px,#ff007c 368px,#99004a 368px,#903 458.5px,#902 580.5px)"></i>
<i style="top:178px;left:35px;width:580px;background:linear-gradient(90deg,#007199 0.5px,#005199 130px,#0187ff 130px,#ff49ff 252.5px,#ff33d7 274.5px,#ff20b4 300.5px,#ff0f97 330.5px,#ff007e 367px,#99004b 367px,#990034 457.5px,#990023 579.5px)"></i>
<i style="top:179px;left:36px;width:578px;background:linear-gradient(90deg,#007099 0.5px,#005099 129px,#0185ff 129px,#ff47ff 252.5px,#ff32d7 274.5px,#ff1fb6 299.5px,#ff0f99 329.5px,#ff0080 365px,#99004c 365px,#990035 454.5px,#990023 577.5px)"></i>
<i style="top:180px;left:36px;width:577px;background:linear-gradient(90deg,#006f99 0.5px,#004f99 129px,#0084ff 129px,#ff46ff 253.5px,#ff30d7 275.5px,#ff1eb6 300.5px,#ff0f9a 329.5px,#ff0081 364px,#99004d 364px,#990035 453.5px,#990023 576.5px)"></i>
<i style="top:181px;left:37px;width:575px;background:linear-gradient(90deg,#006e99 0.5px,#004f99 128px,#0082ff 128px,#f4f 253.5px,#ff2fd8 275.5px,#ff1eb8 299.5px,#ff0e9b 328.5px,#ff0083 362px,#99004e 362px,#990036 451.5px,#990024 574.5px)"></i>
<i style="top:182px;left:37px;width:574px;background:linear-gradient(90deg,#006d99 0.5px,#004d99 129px,#0281ff 129px,#ff42ff 254.5px,#ff2fd9 275.5px,#ff1db9 299.5px,#ff0e9d 327.5px,#ff0085 361px,#99004f 361px,#990037 450.5px,#990024 573.5px)"></i>
<i style="top:183px;left:37px;width:573px;background:linear-gradient(90deg,#006c99 0.5px,#004d99 129px,#027fff 129px,#ff41ff 255.5px,#ff2dda 276.5px,#ff1cba 300.5px,#ff0e9f 327.5px,#ff0086 360px,#990050 360px,#990037 449.5px,#990025 572.5px)"></i>
<i style="top:184px;left:38px;width:571px;background:linear-gradient(90deg,#006b99 0.5px,#004c99 128px,#017eff 128px,#ff3fff 255.5px,#ff2cda 276.5px,#ff1cbb 299.5px,#ff0da0 326.5px,#f08 358px,#990051 358px,#904 399.5px,#990038 447.5px,#990025 570.5px)"></i>
<i style="top:185px;left:38px;width:570px;background:linear-gradient(90deg,#006a99 0.5px,#004b99 128px,#017dff 128px,#ff3eff 256.5px,#ff2cdc 276.5px,#ff1cbd 299.5px,#ff0ea2 325.5px,#ff008a 357px,#990052 357px,#904 398.5px,#990039 446.5px,#990026 569.5px)"></i>
<i style="top:186px;left:39px;width:568px;background:linear-gradient(90deg,#006999 0.5px,#004a99 127px,#017bff 127px,#ff3cff 256.5px,#ff2adc 276.5px,#ff1bbd 299.5px,#ff0da2 325.5px,#ff008c 355px,#990053 355px,#990045 396.5px,#990039 444.5px,#990026 567.5px)"></i>
<i style="top:187px;left:39px;width:567px;background:linear-gradient(90deg,#006899 0.5px,#004a99 127px,#007aff 127px,#ff3bff 257.5px,#ff29dc 277.5px,#ff1abe 299.5px,#ff0da5 324.5px,#ff008e 354px,#905 354px,#990046 395.5px,#99003a 443.5px,#990027 566.5px)"></i>
<i style="top:188px;left:40px;width:565px;background:linear-gradient(90deg,#006799 0.5px,#004899 127px,#0278ff 127px,#ff39ff 257.5px,#ff28dc 277.5px,#ff1ac0 298.5px,#ff0ca6 323.5px,#ff008f 352px,#990056 352px,#990047 393.5px,#99003b 441.5px,#990027 564.5px)"></i>
<i style="top:189px;left:40px;width:564px;background:linear-gradient(90deg,#069 0.5px,#004899 127px,#0277ff 127px,#ff38ff 258.5px,#ff27de 277.5px,#ff19c1 298.5px,#ff0ca8 322.5px,#ff0091 351px,#990057 351px,#990048 392.5px,#99003b 440.5px,#990028 563.5px)"></i>
<i style="top:190px;left:41px;width:562px;background:linear-gradient(90deg,#006599 0.5px,#004799 126px,#0176ff 126px,#ff36ff 258.5px,#ff26de 277.5px,#ff18c2 298.5px,#ff0ca9 321.5px,#ff0093 349px,#990058 349px,#990049 390.5px,#99003c 438.5px,#990028 561.5px)"></i>
<i style="top:191px;left:41px;width:561px;background:linear-gradient(90deg,#006499 0.5px,#004699 126px,#0175ff 126px,#ff35ff 259.5px,#ff25de 278.5px,#ff18c3 298.5px,#ff0cab 321.5px,#ff0095 348px,#990059 348px,#99004a 389.5px,#99003d 437.5px,#990028 560.5px)"></i>
<i style="top:192px;left:41px;width:560px;background:linear-gradient(90deg,#006399 0.5px,#004699 126px,#0173ff 126px,#f3f 260.5px,#ff24e0 278.5px,#ff17c5 298.5px,#ff0bac 321.5px,#ff0097 347px,#99005a 347px,#99004b 388.5px,#99003e 436.5px,#990029 559.5px)"></i>
<i style="top:193px;left:42px;width:558px;background:linear-gradient(90deg,#006299 0.5px,#004599 125px,#0072ff 125px,#ff32ff 260.5px,#ff23e0 278.5px,#ff17c6 297.5px,#ff0bae 319.5px,#f09 345px,#99005b 345px,#99004c 386.5px,#99003e 434.5px,#990029 557.5px)"></i>
<i style="top:194px;left:42px;width:557px;background:linear-gradient(90deg,#006299 0.5px,#049 126px,#0271ff 126px,#ff30ff 261.5px,#ff22e0 279.5px,#ff16c7 298.5px,#ff0bb0 319.5px,#ff009b 344px,#99005c 344px,#99004c 385.5px,#99003f 433.5px,#99002a 556.5px)"></i>
<i style="top:195px;left:43px;width:555px;background:linear-gradient(90deg,#006199 0.5px,#004399 125px,#0270ff 125px,#ff2fff 261.5px,#ff21e1 279.5px,#ff15c8 297.5px,#ff0ab1 318.5px,#ff009d 342px,#99005e 342px,#99004e 382.5px,#990040 430.5px,#99002a 554.5px)"></i>
<i style="top:196px;left:43px;width:554px;background:linear-gradient(90deg,#006099 0.5px,#004399 125px,#016eff 125px,#ff2eff 262.5px,#ff20e2 279.5px,#ff15ca 297.5px,#ff0bb3 317.5px,#ff009f 341px,#99005f 341px,#99004f 381.5px,#990041 429.5px,#99002b 553.5px)"></i>
<i style="top:197px;left:44px;width:552px;background:linear-gradient(90deg,#005f99 0.5px,#004299 124px,#016dff 124px,#ff2cff 262.5px,#ff1fe2 279.5px,#ff15cb 296.5px,#ff0ab5 316.5px,#ff00a1 339px,#990060 339px,#990050 379.5px,#990041 427.5px,#99002b 551.5px)"></i>
<i style="top:198px;left:44px;width:551px;background:linear-gradient(90deg,#005e99 0.5px,#004199 124px,#016cff 124px,#fe2bff 263.5px,#ff1ee3 280.5px,#ff14cb 297.5px,#ff0ab6 316.5px,#ff00a3 338px,#990061 338px,#990050 378.5px,#990042 426.5px,#99002c 550.5px)"></i>
<i style="top:199px;left:45px;width:549px;background:linear-gradient(90deg,#005d99 0.5px,#004199 123px,#006bff 123px,#fe2aff 263.5px,#ff1ee4 279.5px,#ff13cd 296.5px,#ff00a5 336px,#990062 336px,#990051 376.5px,#990043 424.5px,#99002c 548.5px)"></i>
<i style="top:200px;left:45px;width:548px;background:linear-gradient(90deg,#005c99 0.5px,#004099 124px,#026aff 124px,#fe28ff 264.5px,#ff1de4 280.5px,#ff13ce 296.5px,#ff00a7 335px,#990064 335px,#990052 375.5px,#904 423.5px,#99002d 547.5px)"></i>
<i style="top:201px;left:45px;width:547px;background:linear-gradient(90deg,#005c99 0.5px,#003f99 124px,#0269ff 124px,#fe27ff 265.5px,#ff1be5 281.5px,#ff12d0 296.5px,#ff00a9 334px,#990065 334px,#990053 374.5px,#904 422.5px,#99002d 546.5px)"></i>
<i style="top:202px;left:46px;width:545px;background:linear-gradient(90deg,#005b99 0.5px,#003e99 123px,#0167ff 123px,#fe26ff 265.5px,#ff12d1 295.5px,#ff00ab 332px,#906 332px,#990054 372.5px,#990045 420.5px,#99002e 544.5px)"></i>
<i style="top:203px;left:46px;width:544px;background:linear-gradient(90deg,#005a99 0.5px,#003e99 123px,#0166ff 123px,#fe25ff 266.5px,#ff11d2 296.5px,#ff00ad 331px,#990067 331px,#905 371.5px,#990046 419.5px,#990039 476.5px,#99002e 543.5px)"></i>
<i style="top:204px;left:47px;width:542px;background:linear-gradient(90deg,#005999 0.5px,#003d99 122px,#0165ff 122px,#fe23ff 266.5px,#ff10d3 295.5px,#ff00af 329px,#990069 329px,#990056 369.5px,#990047 417.5px,#99003a 474.5px,#99002f 541.5px)"></i>
<i style="top:205px;left:47px;width:541px;background:linear-gradient(90deg,#005899 0.5px,#003c99 122px,#0064ff 122px,#fe22ff 267.5px,#ff10d5 295.5px,#ff00b2 328px,#99006a 328px,#990057 368.5px,#990048 416.5px,#99003a 473.5px,#99002f 540.5px)"></i>
<i style="top:206px;left:48px;width:539px;background:linear-gradient(90deg,#005799 0.5px,#003c99 122px,#0263ff 122px,#fe21ff 267.5px,#ff10d6 294.5px,#ff00b4 326px,#99006b 326px,#990058 366.5px,#990048 414.5px,#99003b 471.5px,#990030 538.5px)"></i>
<i style="top:207px;left:48px;width:538px;background:linear-gradient(90deg,#005799 0.5px,#003b99 122px,#0262ff 122px,#fe20ff 268.5px,#ff0fd8 294.5px,#ff00b6 325px,#99006d 325px,#990059 365.5px,#990049 413.5px,#99003c 470.5px,#990030 537.5px)"></i>
<i style="top:208px;left:49px;width:536px;background:linear-gradient(90deg,#005699 0.5px,#003a99 121px,#0161ff 121px,#fe1eff 268.5px,#ff0ed8 294.5px,#ff00b8 323px,#99006e 323px,#99005a 363.5px,#99004a 411.5px,#99003c 468.5px,#990031 535.5px)"></i>
<i style="top:209px;left:49px;width:535px;background:linear-gradient(90deg,#059 0.5px,#003a99 121px,#0160ff 121px,#fe1dff 269.5px,#ff0ed9 294.5px,#ff00ba 322px,#99006f 322px,#99005b 362.5px,#99004b 409.5px,#99003d 466.5px,#990031 534.5px)"></i>
<i style="top:210px;left:50px;width:533px;background:linear-gradient(90deg,#005499 0.5px,#003999 120px,#015fff 120px,#fe1cff 269.5px,#ff0ddb 293.5px,#ff00bd 320px,#990071 320px,#99005d 360.5px,#99004c 407.5px,#99003e 464.5px,#990032 532.5px)"></i>
<i style="top:211px;left:50px;width:533px;background:linear-gradient(90deg,#005399 0.5px,#003999 120px,#005eff 120px,#fe1bff 270.5px,#ff0ddc 293.5px,#ff00bf 319px,#990072 319px,#99005e 359.5px,#99004c 407.5px,#99003e 464.5px,#990032 532.5px)"></i>
<i style="top:212px;left:51px;width:531px;background:linear-gradient(90deg,#005399 0.5px,#003899 119px,#005dff 119px,#fe1aff 270.5px,#ff0cde 292.5px,#ff00c1 317px,#990073 317px,#99005f 357.5px,#99004d 405.5px,#99003f 462.5px,#903 530.5px)"></i>
<i style="top:213px;left:51px;width:530px;background:linear-gradient(90deg,#005299 0.5px,#003799 120px,#025cff 120px,#fe18ff 271.5px,#ff0bde 293.5px,#ff00c4 316px,#990075 316px,#990060 356.5px,#99004e 404.5px,#99003f 461.5px,#903 529.5px)"></i>
<i style="top:214px;left:52px;width:528px;background:linear-gradient(90deg,#005199 0.5px,#003799 119px,#015bff 119px,#fe17ff 271.5px,#ff0be0 292.5px,#ff00c6 314px,#990076 314px,#990061 354.5px,#99004f 401.5px,#990040 458.5px,#990034 527.5px)"></i>
<i style="top:215px;left:52px;width:527px;background:linear-gradient(90deg,#005099 0.5px,#003699 119px,#015aff 119px,#fe16ff 272.5px,#ff0ae1 292.5px,#ff01c9 313px,#990078 313px,#990062 353.5px,#990050 400.5px,#990041 457.5px,#990034 526.5px)"></i>
<i style="top:216px;left:53px;width:525px;background:linear-gradient(90deg,#005099 0.5px,#003699 118px,#0159ff 118px,#fe15ff 272.5px,#ff0ae3 291.5px,#ff01cb 311px,#990079 311px,#990063 351.5px,#990051 398.5px,#990042 455.5px,#990035 524.5px)"></i>
<i style="top:217px;left:53px;width:524px;background:linear-gradient(90deg,#004f99 0.5px,#003599 118px,#0058ff 118px,#fe14ff 273.5px,#ff09e3 292.5px,#f0c 311px,#99007a 311px,#990064 351.5px,#990052 398.5px,#990042 455.5px,#990035 523.5px)"></i>
<i style="top:218px;left:54px;width:522px;background:linear-gradient(90deg,#004e99 0.5px,#003599 117px,#0057ff 117px,#8635ff 200.5px,#fe13ff 273.5px,#ff09e4 291.5px,#ff00cf 309px,#99007b 309px,#990065 349.5px,#990052 396.5px,#990043 453.5px,#990036 521.5px)"></i>
<i style="top:219px;left:54px;width:521px;background:linear-gradient(90deg,#004d99 0.5px,#003499 118px,#0256ff 118px,#8734ff 201.5px,#fe12ff 274.5px,#ff00d1 308px,#99007d 308px,#906 347.5px,#990053 395.5px,#990043 452.5px,#990036 520.5px)"></i>
<i style="top:220px;left:55px;width:519px;background:linear-gradient(90deg,#004d99 0.5px,#039 117px,#0155ff 117px,#8832ff 201.5px,#fe11ff 274.5px,#ff00d4 306px,#99007e 306px,#990068 345.5px,#990054 393.5px,#904 450.5px,#990037 518.5px)"></i>
<i style="top:221px;left:55px;width:518px;background:linear-gradient(90deg,#004c99 0.5px,#039 117px,#0154ff 117px,#8831ff 202.5px,#fe0fff 275.5px,#ff00d7 305px,#990080 305px,#990069 344.5px,#905 392.5px,#990045 449.5px,#990037 517.5px)"></i>
<i style="top:222px;left:56px;width:516px;background:linear-gradient(90deg,#004b99 0.5px,#003299 116px,#0153ff 116px,#8731ff 201.5px,#fe0eff 275.5px,#ff00d9 303px,#990082 303px,#99006a 342.5px,#990056 390.5px,#990046 447.5px,#990038 515.5px)"></i>
<i style="top:223px;left:56px;width:515px;background:linear-gradient(90deg,#004b99 0.5px,#003299 116px,#0053ff 116px,#882fff 202.5px,#fe0dff 276.5px,#ff00dc 302px,#990083 302px,#99006b 341.5px,#990057 388.5px,#990046 445.5px,#990039 514.5px)"></i>
<i style="top:224px;left:57px;width:513px;background:linear-gradient(90deg,#004a99 0.5px,#003199 115px,#0052ff 115px,#882eff 202.5px,#fe0cff 276.5px,#ff00de 300px,#990085 300px,#99006c 339.5px,#990058 386.5px,#990047 443.5px,#990039 512.5px)"></i>
<i style="top:225px;left:57px;width:512px;background:linear-gradient(90deg,#004999 0.5px,#003199 116px,#0251ff 116px,#892dff 203.5px,#fe0bff 277.5px,#ff00e1 299px,#990086 299px,#99006e 338.5px,#990059 385.5px,#990048 442.5px,#99003a 511.5px)"></i>
<i style="top:226px;left:58px;width:510px;background:linear-gradient(90deg,#004899 0.5px,#003099 115px,#0150ff 115px,#8a2cff 203.5px,#fe0aff 277.5px,#ff00e4 297px,#908 297px,#99006f 336.5px,#99005a 383.5px,#990049 440.5px,#99003a 509.5px)"></i>
<i style="top:227px;left:58px;width:509px;background:linear-gradient(90deg,#004899 0.5px,#003099 115px,#014fff 115px,#8a2bff 204.5px,#fe09ff 278.5px,#ff00e7 296px,#99008a 296px,#990070 335.5px,#99005b 382.5px,#990049 439.5px,#99003b 508.5px)"></i>
<i style="top:228px;left:59px;width:507px;background:linear-gradient(90deg,#004799 0.5px,#002f99 114px,#014eff 114px,#892aff 203.5px,#fe08ff 278.5px,#ff00e9 294px,#99008b 294px,#990071 333.5px,#99005c 380.5px,#99004a 437.5px,#99003b 506.5px)"></i>
<i style="top:229px;left:59px;width:506px;background:linear-gradient(90deg,#004799 0.5px,#002f99 114px,#004dff 114px,#8a29ff 204.5px,#fe07ff 279.5px,#ff00ec 293px,#99008d 293px,#990073 332.5px,#99005d 379.5px,#99004b 436.5px,#99003c 505.5px)"></i>
<i style="top:230px;left:60px;width:504px;background:linear-gradient(90deg,#004699 0.5px,#002e99 113px,#004dff 113px,#8a28ff 204.5px,#fe06ff 279.5px,#ff00ef 291px,#99008f 291px,#990074 330.5px,#99005e 377.5px,#99004c 434.5px,#99003c 503.5px)"></i>
<i style="top:231px;left:60px;width:503px;background:linear-gradient(90deg,#004599 0.5px,#002d99 114px,#024bff 114px,#8c27ff 206.5px,#fe05ff 280.5px,#ff00f2 290px,#990090 290px,#990075 329.5px,#99005f 376.5px,#99004c 433.5px,#99003d 502.5px)"></i>
<i style="top:232px;left:61px;width:501px;background:linear-gradient(90deg,#004599 0.5px,#002d99 113px,#014bff 113px,#8d26ff 206.5px,#fe04ff 280.5px,#ff00f5 288px,#990092 288px,#990076 327.5px,#990060 374.5px,#99004d 431.5px,#99003e 500.5px)"></i>
<i style="top:233px;left:61px;width:500px;background:linear-gradient(90deg,#049 0.5px,#002d99 113px,#014aff 113px,#8e25ff 207.5px,#fe03ff 281.5px,#ff00f8 287px,#990094 287px,#990078 326.5px,#990061 373.5px,#99004e 430.5px,#99003e 499.5px)"></i>
<i style="top:234px;left:62px;width:498px;background:linear-gradient(90deg,#004399 0.5px,#002c99 112px,#0149ff 112px,#8e24ff 207.5px,#fe02ff 281.5px,#ff00fb 285px,#990096 285px,#99007a 323.5px,#990062 370.5px,#99004f 427.5px,#99003f 497.5px)"></i>
<i style="top:235px;left:62px;width:497px;background:linear-gradient(90deg,#004399 0.5px,#002c99 112px,#0148ff 112px,#9222ff 210.5px,#ff00fe 284px,#990098 284px,#99007b 322.5px,#990063 369.5px,#990050 426.5px,#99003f 496.5px)"></i>
<i style="top:236px;left:63px;width:495px;background:linear-gradient(90deg,#004299 0.5px,#002b99 111px,#0048ff 111px,#8f22ff 208.5px,#fd00ff 282px,#909 282px,#99007b 322.5px,#990064 368.5px,#990050 425.5px,#990040 494.5px)"></i>
<i style="top:237px;left:63px;width:494px;background:linear-gradient(90deg,#004299 0.5px,#002b99 112px,#0247ff 112px,#8e21ff 208.5px,#fa00ff 281px,#970099 281px,#909 284.5px,#99007a 325.5px,#990064 370.5px,#990050 426.5px,#990040 493.5px)"></i>
<i style="top:238px;left:64px;width:492px;background:linear-gradient(90deg,#004199 0.5px,#002a99 111px,#0146ff 111px,#8c21ff 206.5px,#f700ff 279px,#950099 279px,#909 284.5px,#990078 328.5px,#990064 370.5px,#990051 425.5px,#990041 491.5px)"></i>
<i style="top:239px;left:64px;width:491px;background:linear-gradient(90deg,#004099 0.5px,#002a99 111px,#0145ff 111px,#8b20ff 206.5px,#f400ff 278px,#930099 278px,#909 285.5px,#99007c 324.5px,#990063 372.5px,#990051 426.5px,#990042 490.5px)"></i>
<i style="top:240px;left:65px;width:489px;background:linear-gradient(90deg,#004099 0.5px,#002999 110px,#0144ff 110px,#8920ff 204.5px,#f100ff 276px,#910099 276px,#909 285.5px,#99007b 325.5px,#990063 373.5px,#990051 425.5px,#990042 488.5px)"></i>
<i style="top:241px;left:65px;width:488px;background:linear-gradient(90deg,#003f99 0.5px,#002999 110px,#0144ff 110px,#881fff 204.5px,#e0f 275px,#900099 275px,#909 286.5px,#99007b 326.5px,#990063 374.5px,#990052 426.5px,#990043 487.5px)"></i>
<i style="top:242px;left:66px;width:486px;background:linear-gradient(90deg,#003e99 0.5px,#002899 109px,#0043ff 109px,#851fff 202.5px,#eb00ff 273px,#8e0099 273px,#909 286.5px,#99007b 326.5px,#990063 375.5px,#990052 425.5px,#990043 485.5px)"></i>
<i style="top:243px;left:66px;width:485px;background:linear-gradient(90deg,#003e99 0.5px,#002899 110px,#0242ff 110px,#851fff 202.5px,#e800ff 272px,#8c0099 272px,#909 287.5px,#99007b 327.5px,#990063 377.5px,#990052 426.5px,#904 484.5px)"></i>
<i style="top:244px;left:67px;width:483px;background:linear-gradient(90deg,#003d99 0.5px,#002799 109px,#0141ff 109px,#841eff 201.5px,#e500ff 270px,#8a0099 270px,#909 287.5px,#99007e 323.5px,#990067 367.5px,#905 419.5px,#990045 482.5px)"></i>
<i style="top:245px;left:68px;width:481px;background:linear-gradient(90deg,#003d99 0.5px,#002799 108px,#0141ff 108px,#811eff 199.5px,#e200ff 268px,#890099 268px,#909 287.5px,#99007e 323.5px,#990068 366.5px,#905 418.5px,#990045 480.5px)"></i>
<i style="top:246px;left:68px;width:480px;background:linear-gradient(90deg,#003c99 0.5px,#002799 108px,#0140ff 108px,#7f1eff 198.5px,#e000ff 267px,#870099 267px,#909 288.5px,#99007e 324.5px,#990068 367.5px,#990056 418.5px,#990046 479.5px)"></i>
<i style="top:247px;left:69px;width:479px;background:linear-gradient(90deg,#003b99 0.5px,#002699 107px,#013fff 107px,#7e1dff 197.5px,#d0f 265px,#850099 265px,#909 288.5px,#99007e 324.5px,#990069 366.5px,#990056 417.5px,#990046 478.5px)"></i>
<i style="top:248px;left:69px;width:478px;background:linear-gradient(90deg,#003b99 0.5px,#002699 107px,#003fff 107px,#7c1dff 196.5px,#da00ff 264px,#840099 264px,#909 289.5px,#99007e 325.5px,#990069 367.5px,#990057 417.5px,#990047 477.5px)"></i>
<i style="top:249px;left:70px;width:476px;background:linear-gradient(90deg,#003a99 0.5px,#002599 106px,#003eff 106px,#7b1dff 195.5px,#d800ff 262px,#820099 262px,#909 289.5px,#99007f 324.5px,#990069 366.5px,#990057 416.5px,#990048 475.5px)"></i>
<i style="top:250px;left:70px;width:475px;background:linear-gradient(90deg,#003a99 0.5px,#002599 107px,#013dff 107px,#7b1cff 195.5px,#d500ff 261px,#810099 261px,#909 290.5px,#99007f 325.5px,#99006a 366.5px,#990058 415.5px,#990048 474.5px)"></i>
<i style="top:251px;left:71px;width:473px;background:linear-gradient(90deg,#003999 0.5px,#002499 106px,#013cff 106px,#791cff 193.5px,#d200ff 259px,#7f0099 259px,#909 290.5px,#99007f 325.5px,#99006a 366.5px,#990058 415.5px,#990049 472.5px)"></i>
<i style="top:252px;left:71px;width:472px;background:linear-gradient(90deg,#003999 0.5px,#002499 106px,#013cff 106px,#d000ff 258px,#7d0099 258px,#909 291.5px,#990080 325.5px,#99006b 366.5px,#990059 414.5px,#99004a 471.5px)"></i>
<i style="top:253px;left:72px;width:470px;background:linear-gradient(90deg,#003899 0.5px,#002499 105px,#013bff 105px,#cd00ff 256px,#7c0099 256px,#909 291.5px,#990080 325.5px,#99006b 365.5px,#990059 413.5px,#99004a 469.5px)"></i>
<i style="top:254px;left:72px;width:469px;background:linear-gradient(90deg,#003899 0.5px,#002399 105px,#003aff 105px,#cb00ff 255px,#7a0099 255px,#909 292.5px,#990080 326.5px,#99006b 366.5px,#99005a 413.5px,#99004b 468.5px)"></i>
<i style="top:255px;left:73px;width:467px;background:linear-gradient(90deg,#003799 0.5px,#002399 104px,#003aff 104px,#c800ff 253px,#790099 253px,#909 292.5px,#990080 326.5px,#99006c 365.5px,#99005b 411.5px,#99004b 466.5px)"></i>
<i style="top:256px;left:74px;width:465px;background:linear-gradient(90deg,#003799 0.5px,#029 104px,#0139ff 104px,#c600ff 251px,#709 251px,#909 292.5px,#990081 325.5px,#99006d 364.5px,#99005b 410.5px,#99004c 464.5px)"></i>
<i style="top:257px;left:74px;width:464px;background:linear-gradient(90deg,#003699 0.5px,#029 104px,#0138ff 104px,#c300ff 250px,#760099 250px,#909 293.5px,#990081 326.5px,#99006d 365.5px,#99005c 410.5px,#99004d 463.5px)"></i>
<i style="top:258px;left:75px;width:462px;background:linear-gradient(90deg,#003599 0.5px,#029 103px,#0138ff 103px,#c100ff 248px,#740099 248px,#909 293.5px,#990081 326.5px,#99006d 364.5px,#99005c 409.5px,#99004d 461.5px)"></i>
<i style="top:259px;left:75px;width:461px;background:linear-gradient(90deg,#003599 0.5px,#002199 103px,#0137ff 103px,#be00ff 247px,#730099 247px,#909 294.5px,#990082 326.5px,#99006e 364.5px,#99005d 408.5px,#99004e 460.5px)"></i>
<i style="top:260px;left:76px;width:459px;background:linear-gradient(90deg,#003499 0.5px,#002199 102px,#0036ff 102px,#bc00ff 245px,#710099 245px,#909 294.5px,#990082 326.5px,#99006e 364.5px,#99005d 407.5px,#99004f 458.5px)"></i>
<i style="top:261px;left:76px;width:458px;background:linear-gradient(90deg,#003499 0.5px,#002199 102px,#0036ff 102px,#b900ff 244px,#700099 244px,#909 295.5px,#990082 327.5px,#99006f 364.5px,#99005e 407.5px,#99004f 457.5px)"></i>
<i style="top:262px;left:77px;width:456px;background:linear-gradient(90deg,#039 0.5px,#002099 102px,#0135ff 102px,#b700ff 242px,#6f0099 242px,#909 295.5px,#990083 326.5px,#99006f 363.5px,#99005e 406.5px,#990050 455.5px)"></i>
<i style="top:263px;left:78px;width:454px;background:linear-gradient(90deg,#039 0.5px,#002099 101px,#0134ff 101px,#b500ff 240px,#6d0099 240px,#909 295.5px,#990082 327.5px,#99006f 363.5px,#99005f 405.5px,#990051 453.5px)"></i>
<i style="top:264px;left:78px;width:453px;background:linear-gradient(90deg,#003299 0.5px,#001f99 101px,#0134ff 101px,#b200ff 239px,#6c0099 239px,#909 296.5px,#990083 327.5px,#990070 363.5px,#990060 404.5px,#990052 452.5px)"></i>
<i style="top:265px;left:79px;width:451px;background:linear-gradient(90deg,#003299 0.5px,#001f99 100px,#0133ff 100px,#b000ff 237px,#6a0099 237px,#909 296.5px,#990083 327.5px,#990071 362.5px,#990060 403.5px,#990052 450.5px)"></i>
<i style="top:266px;left:79px;width:450px;background:linear-gradient(90deg,#003299 0.5px,#001f99 100px,#03f 100px,#ae00ff 236px,#690099 236px,#909 297.5px,#990084 327.5px,#990071 362.5px,#990061 402.5px,#990053 449.5px)"></i>
<i style="top:267px;left:80px;width:448px;background:linear-gradient(90deg,#003199 0.5px,#001e99 99px,#0032ff 99px,#ad00ff 235px,#690099 235px,#909 297.5px,#990084 327.5px,#990071 362.5px,#990061 402.5px,#990054 447.5px)"></i>
<i style="top:268px;left:80px;width:447px;background:linear-gradient(90deg,#003199 0.5px,#001e99 100px,#0131ff 100px,#ab00ff 234px,#670099 234px,#909 298.5px,#990084 328.5px,#990072 362.5px,#990054 446.5px)"></i>
<i style="top:269px;left:81px;width:445px;background:linear-gradient(90deg,#003099 0.5px,#001d99 99px,#0131ff 99px,#a800ff 232px,#609 232px,#909 298.5px,#990085 327.5px,#990073 361.5px,#905 444.5px)"></i>
<i style="top:270px;left:82px;width:443px;background:linear-gradient(90deg,#002f99 0.5px,#001d99 98px,#0130ff 98px,#a600ff 230px,#650099 230px,#909 298.5px,#990085 327.5px,#990073 360.5px,#990056 442.5px)"></i>
<i style="top:271px;left:82px;width:442px;background:linear-gradient(90deg,#002f99 0.5px,#001d99 98px,#0130ff 98px,#a400ff 229px,#630099 229px,#909 299.5px,#990085 328.5px,#990073 361.5px,#990056 441.5px)"></i>
<i style="top:272px;left:83px;width:440px;background:linear-gradient(90deg,#002e99 0.5px,#001c99 97px,#002fff 97px,#a200ff 227px,#620099 227px,#909 299.5px,#990085 328.5px,#990074 360.5px,#990057 439.5px)"></i>
<i style="top:273px;left:83px;width:439px;background:linear-gradient(90deg,#002e99 0.5px,#001c99 97px,#002fff 97px,#a000ff 226px,#610099 226px,#909 300.5px,#990086 328.5px,#990074 360.5px,#990058 438.5px)"></i>
<i style="top:274px;left:84px;width:437px;background:linear-gradient(90deg,#002e99 0.5px,#001c99 97px,#012eff 97px,#9e00ff 224px,#5f0099 224px,#909 300.5px,#990086 328.5px,#990075 360.5px,#990059 436.5px)"></i>
<i style="top:275px;left:84px;width:436px;background:linear-gradient(90deg,#002d99 0.5px,#001b99 97px,#012dff 97px,#9c00ff 223px,#5e0099 223px,#909 301.5px,#990086 329.5px,#990075 360.5px,#990059 435.5px)"></i>
<i style="top:276px;left:85px;width:434px;background:linear-gradient(90deg,#002d99 0.5px,#001b99 96px,#012dff 96px,#9a00ff 221px,#5d0099 221px,#909 301.5px,#990086 328.5px,#990076 359.5px,#99005a 433.5px)"></i>
<i style="top:277px;left:86px;width:432px;background:linear-gradient(90deg,#002c99 0.5px,#001b99 95px,#012cff 95px,#9700ff 219px,#5c0099 219px,#909 301.5px,#990086 328.5px,#990076 358.5px,#99005b 431.5px)"></i>
<i style="top:278px;left:86px;width:431px;background:linear-gradient(90deg,#002c99 0.5px,#001a99 95px,#002cff 95px,#9500ff 218px,#5a0099 218px,#909 302.5px,#907 358.5px,#99005c 430.5px)"></i>
<i style="top:279px;left:87px;width:429px;background:linear-gradient(90deg,#002b99 0.5px,#001a99 94px,#002bff 94px,#9300ff 216px,#590099 216px,#909 302.5px,#907 358.5px,#99005c 428.5px)"></i>
<i style="top:280px;left:87px;width:428px;background:linear-gradient(90deg,#002b99 0.5px,#001a99 95px,#012aff 95px,#9100ff 215px,#580099 215px,#909 303.5px,#990078 358.5px,#99005d 427.5px)"></i>
<i style="top:281px;left:88px;width:426px;background:linear-gradient(90deg,#002a99 0.5px,#001999 94px,#012aff 94px,#8f00ff 213px,#570099 213px,#909 303.5px,#990078 357.5px,#99005e 425.5px)"></i>
<i style="top:282px;left:88px;width:425px;background:linear-gradient(90deg,#002a99 0.5px,#001999 94px,#0129ff 94px,#8d00ff 212px,#560099 212px,#909 304.5px,#990079 357.5px,#99005f 424.5px)"></i>
<i style="top:283px;left:89px;width:424px;background:linear-gradient(90deg,#002a99 0.5px,#001999 93px,#0129ff 93px,#8c00ff 210px,#540099 210px,#909 304.5px,#990079 357.5px,#99005f 423.5px)"></i>
<i style="top:284px;left:90px;width:422px;background:linear-gradient(90deg,#002999 0.5px,#001899 92px,#0128ff 92px,#8a00ff 208px,#530099 208px,#909 304.5px,#990079 356.5px,#990060 421.5px)"></i>
<i style="top:285px;left:90px;width:421px;background:linear-gradient(90deg,#002999 0.5px,#001899 92px,#0028ff 92px,#80f 207px,#520099 207px,#909 305.5px,#99007a 356.5px,#990061 420.5px)"></i>
<i style="top:286px;left:91px;width:419px;background:linear-gradient(90deg,#002899 0.5px,#001899 91px,#0027ff 91px,#8600ff 205px,#510099 205px,#909 305.5px,#99007a 356.5px,#990062 418.5px)"></i>
<i style="top:287px;left:91px;width:418px;background:linear-gradient(90deg,#002899 0.5px,#001799 92px,#0127ff 92px,#8400ff 204px,#500099 204px,#909 306.5px,#99007b 356.5px,#990062 417.5px)"></i>
<i style="top:288px;left:92px;width:416px;background:linear-gradient(90deg,#002799 0.5px,#001799 91px,#0126ff 91px,#8200ff 202px,#4f0099 202px,#909 306.5px,#99007b 355.5px,#990063 415.5px)"></i>
<i style="top:289px;left:93px;width:414px;background:linear-gradient(90deg,#002799 0.5px,#001799 90px,#0126ff 90px,#8000ff 200px,#4e0099 200px,#909 306.5px,#99007c 354.5px,#990064 413.5px)"></i>
<i style="top:290px;left:93px;width:413px;background:linear-gradient(90deg,#002799 0.5px,#001799 90px,#0125ff 90px,#7e00ff 199px,#4c0099 199px,#909 307.5px,#99007d 354.5px,#990065 412.5px)"></i>
<i style="top:291px;left:94px;width:411px;background:linear-gradient(90deg,#002699 0.5px,#001699 89px,#0025ff 89px,#7d00ff 197px,#4b0099 197px,#909 307.5px,#99007d 354.5px,#906 410.5px)"></i>
<i style="top:292px;left:94px;width:410px;background:linear-gradient(90deg,#002699 0.5px,#001699 89px,#0024ff 89px,#7b00ff 196px,#4a0099 196px,#909 308.5px,#99007d 354.5px,#906 409.5px)"></i>
<i style="top:293px;left:95px;width:408px;background:linear-gradient(90deg,#002599 0.5px,#001699 89px,#0124ff 89px,#7900ff 194px,#490099 194px,#909 308.5px,#99007e 353.5px,#990067 407.5px)"></i>
<i style="top:294px;left:96px;width:406px;background:linear-gradient(90deg,#002599 0.5px,#001599 88px,#0123ff 88px,#70f 192px,#480099 192px,#909 308.5px,#99007e 352.5px,#990068 405.5px)"></i>
<i style="top:295px;left:96px;width:405px;background:linear-gradient(90deg,#002499 0.5px,#001599 88px,#0123ff 88px,#7500ff 191px,#470099 191px,#909 309.5px,#99007f 352.5px,#990069 404.5px)"></i>
<i style="top:296px;left:97px;width:403px;background:linear-gradient(90deg,#002499 0.5px,#001599 87px,#0122ff 87px,#7400ff 189px,#460099 189px,#909 309.5px,#99007f 352.5px,#99006a 402.5px)"></i>
<i style="top:297px;left:97px;width:402px;background:linear-gradient(90deg,#002499 0.5px,#001499 87px,#02f 87px,#7200ff 188px,#450099 188px,#909 310.5px,#990080 352.5px,#99006b 401.5px)"></i>
<i style="top:298px;left:98px;width:400px;background:linear-gradient(90deg,#002399 0.5px,#001499 86px,#0021ff 86px,#7000ff 186px,#409 186px,#909 310.5px,#990080 351.5px,#99006b 399.5px)"></i>
<i style="top:299px;left:99px;width:398px;background:linear-gradient(90deg,#002399 0.5px,#001499 86px,#0121ff 86px,#6e00ff 184px,#430099 184px,#909 310.5px,#990081 350.5px,#99006c 397.5px)"></i>
<i style="top:300px;left:99px;width:397px;background:linear-gradient(90deg,#029 0.5px,#001399 86px,#0120ff 86px,#6d00ff 183px,#420099 183px,#909 311.5px,#990081 350.5px,#99006d 396.5px)"></i>
<i style="top:301px;left:100px;width:395px;background:linear-gradient(90deg,#029 0.5px,#001399 85px,#0120ff 85px,#6b00ff 181px,#410099 181px,#909 311.5px,#990082 349.5px,#99006e 394.5px)"></i>
<i style="top:302px;left:100px;width:394px;background:linear-gradient(90deg,#029 0.5px,#001399 85px,#011fff 85px,#6900ff 180px,#400099 180px,#909 312.5px,#990083 349.5px,#99006f 393.5px)"></i>
<i style="top:303px;left:101px;width:392px;background:linear-gradient(90deg,#002199 0.5px,#001399 84px,#001fff 84px,#6800ff 178px,#3f0099 178px,#909 312.5px,#990083 349.5px,#990070 391.5px)"></i>
<i style="top:304px;left:102px;width:390px;background:linear-gradient(90deg,#002199 0.5px,#001299 83px,#001fff 83px,#60f 176px,#3e0099 176px,#909 312.5px,#990083 348.5px,#990071 389.5px)"></i>
<i style="top:305px;left:102px;width:389px;background:linear-gradient(90deg,#002099 0.5px,#001299 84px,#011eff 84px,#6400ff 175px,#3d0099 175px,#909 313.5px,#990084 348.5px,#990072 388.5px)"></i>
<i style="top:306px;left:103px;width:387px;background:linear-gradient(90deg,#002099 0.5px,#001299 83px,#011dff 83px,#6300ff 173px,#3c0099 173px,#909 313.5px,#990084 347.5px,#990073 386.5px)"></i>
<i style="top:307px;left:103px;width:386px;background:linear-gradient(90deg,#002099 0.5px,#001299 83px,#011dff 83px,#6100ff 172px,#3b0099 172px,#909 314.5px,#990085 347.5px,#990073 385.5px)"></i>
<i style="top:308px;left:104px;width:384px;background:linear-gradient(90deg,#001f99 0.5px,#019 82px,#011dff 82px,#6000ff 170px,#3a0099 170px,#909 314.5px,#990086 346.5px,#990074 383.5px)"></i>
<i style="top:309px;left:105px;width:382px;background:linear-gradient(90deg,#001f99 0.5px,#019 81px,#001cff 81px,#5e00ff 168px,#390099 168px,#909 314.5px,#990086 345.5px,#990075 381.5px)"></i>
<i style="top:310px;left:105px;width:381px;background:linear-gradient(90deg,#001f99 0.5px,#019 81px,#001cff 81px,#5c00ff 167px,#380099 167px,#909 315.5px,#990086 346.5px,#990076 380.5px)"></i>
<i style="top:311px;left:106px;width:379px;background:linear-gradient(90deg,#001e99 0.5px,#001099 81px,#011bff 81px,#5b00ff 165px,#370099 165px,#909 315.5px,#907 378.5px)"></i>
<i style="top:312px;left:107px;width:377px;background:linear-gradient(90deg,#001e99 0.5px,#001099 80px,#011bff 80px,#5900ff 163px,#360099 163px,#909 315.5px,#990078 376.5px)"></i>
<i style="top:313px;left:107px;width:376px;background:linear-gradient(90deg,#001d99 0.5px,#001099 80px,#011aff 80px,#5800ff 162px,#350099 162px,#909 316.5px,#990079 375.5px)"></i>
<i style="top:314px;left:108px;width:374px;background:linear-gradient(90deg,#001d99 0.5px,#001099 79px,#011aff 79px,#5600ff 160px,#340099 160px,#909 316.5px,#99007a 373.5px)"></i>
<i style="top:315px;left:108px;width:373px;background:linear-gradient(90deg,#001d99 0.5px,#000f99 79px,#001aff 79px,#50f 159px,#340099 159px,#909 317.5px,#99007b 372.5px)"></i>
<i style="top:316px;left:109px;width:371px;background:linear-gradient(90deg,#001c99 0.5px,#000f99 78px,#0019ff 78px,#5300ff 157px,#309 157px,#909 317.5px,#99007c 370.5px)"></i>
<i style="top:317px;left:110px;width:369px;background:linear-gradient(90deg,#001c99 0.5px,#000f99 78px,#0118ff 78px,#5300ff 156px,#320099 156px,#909 317.5px,#99007d 368.5px)"></i>
<i style="top:318px;left:110px;width:368px;background:linear-gradient(90deg,#001c99 0.5px,#000f99 78px,#0118ff 78px,#5100ff 155px,#310099 155px,#909 318.5px,#99007e 367.5px)"></i>
<i style="top:319px;left:111px;width:367px;background:linear-gradient(90deg,#001b99 0.5px,#000e99 77px,#0118ff 77px,#5000ff 153px,#310099 153px,#909 318.5px,#99007f 366.5px)"></i>
<i style="top:320px;left:111px;width:366px;background:linear-gradient(90deg,#001b99 0.5px,#000e99 77px,#0117ff 77px,#4e00ff 152px,#300099 152px,#909 319.5px,#990080 365.5px)"></i>
<i style="top:321px;left:112px;width:364px;background:linear-gradient(90deg,#001b99 0.5px,#000e99 76px,#0017ff 76px,#4d00ff 150px,#2f0099 150px,#909 319.5px,#990081 363.5px)"></i>
<i style="top:322px;left:113px;width:362px;background:linear-gradient(90deg,#001a99 0.5px,#000e99 75px,#0017ff 75px,#4c00ff 148px,#2e0099 148px,#909 319.5px,#990082 361.5px)"></i>
<i style="top:323px;left:113px;width:361px;background:linear-gradient(90deg,#001a99 0.5px,#000e99 75px,#0016ff 75px,#4a00ff 147px,#2d0099 147px,#909 320.5px,#990083 360.5px)"></i>
<i style="top:324px;left:114px;width:359px;background:linear-gradient(90deg,#001999 0.5px,#000d99 75px,#0116ff 75px,#4900ff 145px,#2c0099 145px,#909 320.5px,#990084 358.5px)"></i>
<i style="top:325px;left:115px;width:357px;background:linear-gradient(90deg,#001999 0.5px,#000d99 74px,#0115ff 74px,#4700ff 143px,#2b0099 143px,#909 320.5px,#990085 356.5px)"></i>
<i style="top:326px;left:115px;width:356px;background:linear-gradient(90deg,#001999 0.5px,#000d99 74px,#0115ff 74px,#4600ff 142px,#2b0099 142px,#909 321.5px,#990086 355.5px)"></i>
<i style="top:327px;left:116px;width:354px;background:linear-gradient(90deg,#001899 0.5px,#000c99 73px,#0014ff 73px,#40f 140px,#2a0099 140px,#909 321.5px,#990087 353.5px)"></i>
<i style="top:328px;left:117px;width:352px;background:linear-gradient(90deg,#001899 0.5px,#000c99 72px,#0014ff 72px,#4300ff 138px,#290099 138px,#909 321.5px,#908 351.5px)"></i>
<i style="top:329px;left:117px;width:351px;background:linear-gradient(90deg,#001899 0.5px,#000c99 72px,#0014ff 72px,#4200ff 137px,#280099 137px,#909 322.5px,#990089 350.5px)"></i>
<i style="top:330px;left:118px;width:349px;background:linear-gradient(90deg,#001799 0.5px,#000c99 72px,#0113ff 72px,#4000ff 135px,#270099 135px,#909 322.5px,#99008a 348.5px)"></i>
<i style="top:331px;left:118px;width:348px;background:linear-gradient(90deg,#001799 0.5px,#000b99 72px,#0113ff 72px,#3f00ff 134px,#260099 134px,#909 323.5px,#99008b 347.5px)"></i>
<i style="top:332px;left:119px;width:346px;background:linear-gradient(90deg,#001799 0.5px,#000b99 71px,#0112ff 71px,#3e00ff 132px,#260099 132px,#909 323.5px,#99008c 345.5px)"></i>
<i style="top:333px;left:120px;width:344px;background:linear-gradient(90deg,#001699 0.5px,#000b99 70px,#0112ff 70px,#3c00ff 130px,#250099 130px,#909 323.5px,#99008d 343.5px)"></i>
<i style="top:334px;left:120px;width:343px;background:linear-gradient(90deg,#001699 0.5px,#000b99 70px,#0012ff 70px,#3b00ff 129px,#240099 129px,#909 324.5px,#99008e 342.5px)"></i>
<i style="top:335px;left:121px;width:341px;background:linear-gradient(90deg,#001699 0.5px,#000b99 69px,#01f 69px,#3a00ff 127px,#230099 127px,#909 324.5px,#990090 340.5px)"></i>
<i style="top:336px;left:122px;width:339px;background:linear-gradient(90deg,#001599 0.5px,#000a99 69px,#0111ff 69px,#3800ff 125px,#209 125px,#909 324.5px,#990091 338.5px)"></i>
<i style="top:337px;left:122px;width:338px;background:linear-gradient(90deg,#001599 0.5px,#000a99 69px,#0110ff 69px,#3700ff 124px,#209 124px,#909 325.5px,#990092 337.5px)"></i>
<i style="top:338px;left:123px;width:336px;background:linear-gradient(90deg,#001599 0.5px,#000a99 68px,#0110ff 68px,#3600ff 122px,#210099 122px,#909 325.5px,#990093 335.5px)"></i>
<i style="top:339px;left:124px;width:334px;background:linear-gradient(90deg,#001499 0.5px,#000a99 67px,#0110ff 67px,#3400ff 120px,#200099 120px,#909 325.5px,#990094 333.5px)"></i>
<i style="top:340px;left:124px;width:333px;background:linear-gradient(90deg,#001499 0.5px,#000999 67px,#000fff 67px,#30f 119px,#1f0099 119px,#909 326.5px,#990095 332.5px)"></i>
<i style="top:341px;left:125px;width:331px;background:linear-gradient(90deg,#001499 0.5px,#000999 66px,#000fff 66px,#3200ff 117px,#1e0099 117px,#909 326.5px,#990097 330.5px)"></i>
<i style="top:342px;left:126px;width:329px;background:linear-gradient(90deg,#001399 0.5px,#000999 66px,#010fff 66px,#3100ff 115px,#1e0099 115px,#990098 328.5px)"></i>
<i style="top:343px;left:126px;width:328px;background:linear-gradient(90deg,#001399 0.5px,#000999 66px,#010eff 66px,#2f00ff 114px,#1d0099 114px,#909 327.5px)"></i>
<i style="top:344px;left:127px;width:326px;background:linear-gradient(90deg,#001399 0.5px,#000899 65px,#010eff 65px,#2e00ff 112px,#1c0099 112px,#980099 325.5px)"></i>
<i style="top:345px;left:128px;width:324px;background:linear-gradient(90deg,#001299 0.5px,#000899 64px,#010eff 64px,#2d00ff 110px,#1b0099 110px,#970099 323.5px)"></i>
<i style="top:346px;left:128px;width:323px;background:linear-gradient(90deg,#001299 0.5px,#000899 64px,#000dff 64px,#2c00ff 109px,#1b0099 109px,#950099 322.5px)"></i>
<i style="top:347px;left:129px;width:321px;background:linear-gradient(90deg,#001299 0.5px,#000899 63px,#000dff 63px,#2a00ff 107px,#1a0099 107px,#940099 320.5px)"></i>
<i style="top:348px;left:130px;width:319px;background:linear-gradient(90deg,#019 0.5px,#000899 63px,#010cff 63px,#2900ff 105px,#190099 105px,#930099 318.5px)"></i>
<i style="top:349px;left:130px;width:318px;background:linear-gradient(90deg,#019 0.5px,#000799 63px,#010cff 63px,#2800ff 104px,#180099 104px,#920099 317.5px)"></i>
<i style="top:350px;left:131px;width:316px;background:linear-gradient(90deg,#019 0.5px,#000799 62px,#010cff 62px,#2700ff 102px,#180099 102px,#910099 315.5px)"></i>
<i style="top:351px;left:132px;width:314px;background:linear-gradient(90deg,#019 0.5px,#000799 61px,#010bff 61px,#2500ff 100px,#170099 100px,#900099 313.5px)"></i>
<i style="top:352px;left:132px;width:313px;background:linear-gradient(90deg,#001099 0.5px,#000799 61px,#000bff 61px,#2400ff 99px,#160099 99px,#8e0099 312.5px)"></i>
<i style="top:353px;left:133px;width:311px;background:linear-gradient(90deg,#001099 0.5px,#000799 60px,#000bff 60px,#2300ff 97px,#160099 97px,#8d0099 310.5px)"></i>
<i style="top:354px;left:134px;width:309px;background:linear-gradient(90deg,#001099 0.5px,#000699 59px,#000aff 59px,#20f 95px,#150099 95px,#8c0099 308.5px)"></i>
<i style="top:355px;left:134px;width:309px;background:linear-gradient(90deg,#000f99 0.5px,#000699 60px,#010aff 60px,#2100ff 94px,#140099 94px,#8c0099 308.5px)"></i>
<i style="top:356px;left:135px;width:307px;background:linear-gradient(90deg,#000f99 0.5px,#000699 59px,#010aff 59px,#2000ff 92px,#130099 92px,#8b0099 306.5px)"></i>
<i style="top:357px;left:136px;width:305px;background:linear-gradient(90deg,#000f99 0.5px,#000699 58px,#0109ff 58px,#1e00ff 90px,#130099 90px,#890099 304.5px)"></i>
<i style="top:358px;left:136px;width:304px;background:linear-gradient(90deg,#000f99 0.5px,#000699 58px,#0009ff 58px,#1d00ff 89px,#120099 89px,#809 303.5px)"></i>
<i style="top:359px;left:137px;width:302px;background:linear-gradient(90deg,#000e99 0.5px,#000599 57px,#0009ff 57px,#1c00ff 87px,#109 87px,#870099 301.5px)"></i>
<i style="top:360px;left:138px;width:300px;background:linear-gradient(90deg,#000e99 0.5px,#000599 56px,#0008ff 56px,#1b00ff 85px,#109 85px,#860099 299.5px)"></i>
<i style="top:361px;left:138px;width:299px;background:linear-gradient(90deg,#000e99 0.5px,#000599 57px,#0108ff 57px,#1a00ff 84px,#100099 84px,#850099 298.5px)"></i>
<i style="top:362px;left:139px;width:297px;background:linear-gradient(90deg,#000d99 0.5px,#000599 56px,#0108ff 56px,#1900ff 82px,#0f0099 82px,#840099 296.5px)"></i>
<i style="top:363px;left:140px;width:295px;background:linear-gradient(90deg,#000d99 0.5px,#000599 55px,#0107ff 55px,#1700ff 80px,#0f0099 80px,#830099 294.5px)"></i>
<i style="top:364px;left:141px;width:293px;background:linear-gradient(90deg,#000d99 0.5px,#000499 54px,#0007ff 54px,#1600ff 78px,#0e0099 78px,#820099 292.5px)"></i>
<i style="top:365px;left:141px;width:292px;background:linear-gradient(90deg,#000c99 0.5px,#000499 54px,#0007ff 54px,#1500ff 77px,#0d0099 77px,#810099 291.5px)"></i>
<i style="top:366px;left:142px;width:290px;background:linear-gradient(90deg,#000c99 0.5px,#000499 53px,#0006ff 53px,#1400ff 75px,#0d0099 75px,#800099 289.5px)"></i>
<i style="top:367px;left:143px;width:288px;background:linear-gradient(90deg,#000c99 0.5px,#000499 53px,#0106ff 53px,#1400ff 74px,#0c0099 74px,#7f0099 287.5px)"></i>
<i style="top:368px;left:143px;width:287px;background:linear-gradient(90deg,#000c99 0.5px,#000399 53px,#0106ff 53px,#1300ff 73px,#0c0099 73px,#7e0099 286.5px)"></i>
<i style="top:369px;left:144px;width:285px;background:linear-gradient(90deg,#000b99 0.5px,#000399 52px,#0105ff 52px,#1200ff 71px,#0b0099 71px,#7d0099 284.5px)"></i>
<i style="top:370px;left:145px;width:283px;background:linear-gradient(90deg,#000b99 0.5px,#000399 51px,#0005ff 51px,#10f 69px,#0a0099 69px,#7c0099 282.5px)"></i>
<i style="top:371px;left:146px;width:281px;background:linear-gradient(90deg,#000b99 0.5px,#000399 50px,#0005ff 50px,#0f00ff 67px,#0a0099 67px,#7b0099 280.5px)"></i>
<i style="top:372px;left:146px;width:280px;background:linear-gradient(90deg,#000a99 0.5px,#000399 50px,#0004ff 50px,#0e00ff 66px,#090099 66px,#7a0099 279.5px)"></i>
<i style="top:373px;left:147px;width:278px;background:linear-gradient(90deg,#000a99 0.5px,#000299 50px,#0104ff 50px,#0d00ff 64px,#080099 64px,#790099 277.5px)"></i>
<i style="top:374px;left:148px;width:276px;background:linear-gradient(90deg,#000a99 0.5px,#000299 49px,#0104ff 49px,#0c00ff 62px,#080099 62px,#780099 275.5px)"></i>
<i style="top:375px;left:148px;width:275px;background:linear-gradient(90deg,#000a99 0.5px,#000299 49px,#0103ff 49px,#0b00ff 61px,#070099 61px,#709 274.5px)"></i>
<i style="top:376px;left:149px;width:273px;background:linear-gradient(90deg,#000999 0.5px,#000299 48px,#0003ff 48px,#0a00ff 59px,#070099 59px,#760099 272.5px)"></i>
<i style="top:377px;left:150px;width:271px;background:linear-gradient(90deg,#000999 0.5px,#000299 47px,#0003ff 47px,#0900ff 57px,#060099 57px,#750099 270.5px)"></i>
<i style="top:378px;left:151px;width:269px;background:linear-gradient(90deg,#000999 0.5px,#000299 46px,#0002ff 46px,#0800ff 55px,#050099 55px,#740099 268.5px)"></i>
<i style="top:379px;left:151px;width:268px;background:linear-gradient(90deg,#000899 0.5px,#000199 47px,#0102ff 47px,#0700ff 54px,#050099 54px,#730099 267.5px)"></i>
<i style="top:380px;left:152px;width:266px;background:linear-gradient(90deg,#000899 0.5px,#000199 46px,#0102ff 46px,#0600ff 52px,#040099 52px,#720099 265.5px)"></i>
<i style="top:381px;left:153px;width:264px;background:linear-gradient(90deg,#000899 0.5px,#000199 45px,#0101ff 45px,#0500ff 50px,#030099 50px,#710099 263.5px)"></i>
<i style="top:382px;left:154px;width:262px;background:linear-gradient(90deg,#000799 0.5px,#000199 44px,#0101ff 44px,#0300ff 48px,#030099 48px,#700099 261.5px)"></i>
<i style="top:383px;left:154px;width:261px;background:linear-gradient(90deg,#000799 0.5px,#000199 44px,#0001ff 44px,#0200ff 47px,#020099 47px,#6f0099 260.5px)"></i>
<i style="top:384px;left:155px;width:259px;background:linear-gradient(90deg,#000799 0.5px,#009 43px,#00f 43px,#0100ff 45px,#010099 45px,#6e0099 258.5px)"></i>
<i style="top:385px;left:156px;width:257px;background:linear-gradient(90deg,#000799 0.5px,#009 42.5px,#6d0099 256.5px)"></i>
<i style="top:386px;left:157px;width:255px;background:linear-gradient(90deg,#000699 0.5px,#009 41.5px,#6c0099 254.5px)"></i>
<i style="top:387px;left:157px;width:254px;background:linear-gradient(90deg,#000699 0.5px,#009 42.5px,#6c0099 253.5px)"></i>
<i style="top:388px;left:158px;width:252px;background:linear-gradient(90deg,#000699 0.5px,#009 41.5px,#6b0099 251.5px)"></i>
<i style="top:389px;left:159px;width:250px;background:linear-gradient(90deg,#000699 0.5px,#009 40.5px,#6a0099 249.5px)"></i>
<i style="top:390px;left:160px;width:248px;background:linear-gradient(90deg,#000599 0.5px,#009 39.5px,#690099 247.5px)"></i>
<i style="top:391px;left:160px;width:248px;background:linear-gradient(90deg,#000599 0.5px,#009 39.5px,#680099 247.5px)"></i>
<i style="top:392px;left:161px;width:246px;background:linear-gradient(90deg,#000599 0.5px,#009 38.5px,#680099 245.5px)"></i>
<i style="top:393px;left:162px;width:244px;background:linear-gradient(90deg,#000599 0.5px,#009 37.5px,#670099 243.5px)"></i>
<i style="top:394px;left:163px;width:242px;background:linear-gradient(90deg,#000499 0.5px,#009 37.5px,#609 241.5px)"></i>
<i style="top:395px;left:164px;width:240px;background:linear-gradient(90deg,#000499 0.5px,#009 36.5px,#650099 239.5px)"></i>
<i style="top:396px;left:164px;width:239px;background:linear-gradient(90deg,#000499 0.5px,#009 36.5px,#640099 238.5px)"></i>
<i style="top:397px;left:165px;width:237px;background:linear-gradient(90deg,#000399 0.5px,#009 35.5px,#630099 236.5px)"></i>
<i style="top:398px;left:166px;width:235px;background:linear-gradient(90deg,#000399 0.5px,#009 34.5px,#620099 234.5px)"></i>
<i style="top:399px;left:167px;width:233px;background:linear-gradient(90deg,#000399 0.5px,#009 33.5px,#620099 232.5px)"></i>
<i style="top:400px;left:167px;width:232px;background:linear-gradient(90deg,#000399 0.5px,#009 34.5px,#610099 231.5px)"></i>
<i style="top:401px;left:168px;width:230px;background:linear-gradient(90deg,#000299 0.5px,#009 33.5px,#600099 229.5px)"></i>
<i style="top:402px;left:169px;width:228px;background:linear-gradient(90deg,#000299 0.5px,#009 32.5px,#5f0099 227.5px)"></i>
<i style="top:403px;left:170px;width:226px;background:linear-gradient(90deg,#000299 0.5px,#009 31.5px,#5e0099 225.5px)"></i>
<i style="top:404px;left:171px;width:224px;background:linear-gradient(90deg,#000199 0.5px,#009 30.5px,#5d0099 223.5px)"></i>
<i style="top:405px;left:171px;width:223px;background:linear-gradient(90deg,#000199 0.5px,#009 30.5px,#5d0099 222.5px)"></i>
<i style="top:406px;left:172px;width:221px;background:linear-gradient(90deg,#000199 0.5px,#009 30.5px,#5c0099 220.5px)"></i>
<i style="top:407px;left:173px;width:219px;background:linear-gradient(90deg,#000199 0.5px,#009 29.5px,#5b0099 218.5px)"></i>
<i style="top:408px;left:174px;width:217px;background:linear-gradient(90deg,#009 0.5px,#009 28.5px,#5a0099 216.5px)"></i>
<i style="top:409px;left:175px;width:215px;background:linear-gradient(90deg,#009 0.5px,#009 27.5px,#590099 214.5px)"></i>
<i style="top:410px;left:176px;width:213px;background:linear-gradient(90deg,#009 0.5px,#009 26.5px,#590099 212.5px)"></i>
<i style="top:411px;left:176px;width:212px;background:linear-gradient(90deg,#009 0.5px,#009 26.5px,#580099 211.5px)"></i>
<i style="top:412px;left:177px;width:210px;background:linear-gradient(90deg,#009 0.5px,#009 26.5px,#570099 209.5px)"></i>
<i style="top:413px;left:178px;width:208px;background:linear-gradient(90deg,#009 0.5px,#009 25.5px,#560099 207.5px)"></i>
<i style="top:414px;left:179px;width:206px;background:linear-gradient(90deg,#009 0.5px,#009 24.5px,#560099 205.5px)"></i>
<i style="top:415px;left:180px;width:204px;background:linear-gradient(90deg,#009 0.5px,#009 23.5px,#509 203.5px)"></i>
<i style="top:416px;left:181px;width:202px;background:linear-gradient(90deg,#009 0.5px,#009 22.5px,#540099 201.5px)"></i>
<i style="top:417px;left:181px;width:201px;background:linear-gradient(90deg,#009 0.5px,#009 22.5px,#530099 200.5px)"></i>
<i style="top:418px;left:182px;width:199px;background:linear-gradient(90deg,#009 0.5px,#009 22.5px,#520099 198.5px)"></i>
<i style="top:419px;left:183px;width:197px;background:linear-gradient(90deg,#009 0.5px,#009 21.5px,#520099 196.5px)"></i>
<i style="top:420px;left:184px;width:195px;background:linear-gradient(90deg,#009 0.5px,#009 20.5px,#510099 194.5px)"></i>
<i style="top:421px;left:185px;width:193px;background:linear-gradient(90deg,#009 0.5px,#009 19.5px,#500099 192.5px)"></i>
<i style="top:422px;left:186px;width:191px;background:linear-gradient(90deg,#009 0.5px,#009 18.5px,#4f0099 190.5px)"></i>
<i style="top:423px;left:187px;width:189px;background:linear-gradient(90deg,#009 0.5px,#009 17.5px,#4f0099 188.5px)"></i>
<i style="top:424px;left:188px;width:187px;background:linear-gradient(90deg,#009 0.5px,#009 17.5px,#4e0099 186.5px)"></i>
<i style="top:425px;left:188px;width:186px;background:linear-gradient(90deg,#009 0.5px,#009 17.5px,#4d0099 185.5px)"></i>
<i style="top:426px;left:189px;width:184px;background:linear-gradient(90deg,#009 0.5px,#009 16.5px,#4d0099 183.5px)"></i>
<i style="top:427px;left:190px;width:183px;background:linear-gradient(90deg,#009 0.5px,#009 15.5px,#4c0099 182.5px)"></i>
<i style="top:428px;left:191px;width:181px;background:linear-gradient(90deg,#009 0.5px,#009 14.5px,#4c0099 180.5px)"></i>
<i style="top:429px;left:192px;width:179px;background:linear-gradient(90deg,#009 0.5px,#009 13.5px,#4b0099 178.5px)"></i>
<i style="top:430px;left:193px;width:177px;background:linear-gradient(90deg,#009 0.5px,#009 13.5px,#4a0099 176.5px)"></i>
<i style="top:431px;left:194px;width:175px;background:linear-gradient(90deg,#009 0.5px,#009 12.5px,#490099 174.5px)"></i>
<i style="top:432px;left:195px;width:173px;background:linear-gradient(90deg,#009 0.5px,#009 11.5px,#490099 172.5px)"></i>
<i style="top:433px;left:196px;width:171px;background:linear-gradient(90deg,#009 0.5px,#009 10.5px,#480099 170.5px)"></i>
<i style="top:434px;left:197px;width:169px;background:linear-gradient(90deg,#009 0.5px,#009 9.5px,#470099 168.5px)"></i>
<i style="top:435px;left:198px;width:167px;background:linear-gradient(90deg,#009 0.5px,#009 8.5px,#470099 166.5px)"></i>
<i style="top:436px;left:199px;width:165px;background:linear-gradient(90deg,#009 0.5px,#009 8.5px,#460099 164.5px)"></i>
<i style="top:437px;left:200px;width:163px;background:linear-gradient(90deg,#009 0.5px,#009 7.5px,#450099 162.5px)"></i>
<i style="top:438px;left:201px;width:161px;background:linear-gradient(90deg,#009 0.5px,#009 6.5px,#450099 160.5px)"></i>
<i style="top:439px;left:202px;width:159px;background:linear-gradient(90deg,#009 0.5px,#009 5.5px,#409 158.5px)"></i>
<i style="top:440px;left:203px;width:157px;background:linear-gradient(90deg,#009 0.5px,#430099 156.5px)"></i>
<i style="top:441px;left:204px;width:155px;background:linear-gradient(90deg,#009 0.5px,#430099 154.5px)"></i>
<i style="top:442px;left:205px;width:153px;background:linear-gradient(90deg,#009 0.5px,#420099 152.5px)"></i>
<i style="top:443px;left:206px;width:151px;background:linear-gradient(90deg,#009 0.5px,#410099 150.5px)"></i>
<i style="top:444px;left:207px;width:149px;background:linear-gradient(90deg,#009 0.5px,#410099 148.5px)"></i>
<i style="top:445px;left:208px;width:147px;background:linear-gradient(90deg,#009 0.5px,#400099 146.5px)"></i>
<i style="top:446px;left:209px;width:145px;background:linear-gradient(90deg,#010099 0.5px,#3f0099 144.5px)"></i>
<i style="top:447px;left:210px;width:143px;background:linear-gradient(90deg,#010099 0.5px,#3f0099 142.5px)"></i>
<i style="top:448px;left:211px;width:141px;background:linear-gradient(90deg,#010099 0.5px,#3e0099 140.5px)"></i>
<i style="top:449px;left:212px;width:139px;background:linear-gradient(90deg,#020099 0.5px,#3d0099 138.5px)"></i>
<i style="top:450px;left:213px;width:137px;background:linear-gradient(90deg,#020099 0.5px,#3d0099 136.5px)"></i>
<i style="top:451px;left:214px;width:135px;background:linear-gradient(90deg,#030099 0.5px,#3c0099 134.5px)"></i>
<i style="top:452px;left:215px;width:133px;background:linear-gradient(90deg,#030099 0.5px,#3b0099 132.5px)"></i>
<i style="top:453px;left:216px;width:131px;background:linear-gradient(90deg,#030099 0.5px,#3b0099 130.5px)"></i>
<i style="top:454px;left:217px;width:129px;background:linear-gradient(90deg,#040099 0.5px,#3a0099 128.5px)"></i>
<i style="top:455px;left:219px;width:126px;background:linear-gradient(90deg,#050099 0.5px,#3a0099 125.5px)"></i>
<i style="top:456px;left:220px;width:124px;background:linear-gradient(90deg,#050099 0.5px,#390099 123.5px)"></i>
<i style="top:457px;left:221px;width:122px;background:linear-gradient(90deg,#050099 0.5px,#380099 121.5px)"></i>
<i style="top:458px;left:222px;width:120px;background:linear-gradient(90deg,#060099 0.5px,#380099 119.5px)"></i>
<i style="top:459px;left:223px;width:118px;background:linear-gradient(90deg,#060099 0.5px,#370099 117.5px)"></i>
<i style="top:460px;left:224px;width:116px;background:linear-gradient(90deg,#060099 0.5px,#370099 115.5px)"></i>
<i style="top:461px;left:225px;width:114px;background:linear-gradient(90deg,#070099 0.5px,#360099 113.5px)"></i>
<i style="top:462px;left:226px;width:112px;background:linear-gradient(90deg,#070099 0.5px,#350099 111.5px)"></i>
<i style="top:463px;left:228px;width:110px;background:linear-gradient(90deg,#080099 0.5px,#350099 109.5px)"></i>
<i style="top:464px;left:229px;width:108px;background:linear-gradient(90deg,#080099 0.5px,#350099 107.5px)"></i>
<i style="top:465px;left:230px;width:106px;background:linear-gradient(90deg,#090099 0.5px,#340099 105.5px)"></i>
<i style="top:466px;left:231px;width:104px;background:linear-gradient(90deg,#090099 0.5px,#309 103.5px)"></i>
<i style="top:467px;left:232px;width:102px;background:linear-gradient(90deg,#090099 0.5px,#309 101.5px)"></i>
<i style="top:468px;left:233px;width:100px;background:linear-gradient(90deg,#0a0099 0.5px,#320099 99.5px)"></i>
<i style="top:469px;left:235px;width:97px;background:linear-gradient(90deg,#0a0099 0.5px,#320099 96.5px)"></i>
<i style="top:470px;left:236px;width:95px;background:linear-gradient(90deg,#0b0099 0.5px,#310099 94.5px)"></i>
<i style="top:471px;left:237px;width:93px;background:linear-gradient(90deg,#0b0099 0.5px,#300099 92.5px)"></i>
<i style="top:472px;left:238px;width:91px;background:linear-gradient(90deg,#0b0099 0.5px,#300099 90.5px)"></i>
<i style="top:473px;left:239px;width:89px;background:linear-gradient(90deg,#0c0099 0.5px,#2f0099 88.5px)"></i>
<i style="top:474px;left:241px;width:86px;background:linear-gradient(90deg,#0c0099 0.5px,#2f0099 85.5px)"></i>
<i style="top:475px;left:242px;width:84px;background:linear-gradient(90deg,#0d0099 0.5px,#2e0099 83.5px)"></i>
<i style="top:476px;left:243px;width:82px;background:linear-gradient(90deg,#0d0099 0.5px,#2e0099 81.5px)"></i>
<i style="top:477px;left:244px;width:80px;background:linear-gradient(90deg,#0d0099 0.5px,#2d0099 79.5px)"></i>
<i style="top:478px;left:246px;width:77px;background:linear-gradient(90deg,#0e0099 0.5px,#2c0099 76.5px)"></i>
<i style="top:479px;left:247px;width:75px;background:linear-gradient(90deg,#0e0099 0.5px,#2c0099 74.5px)"></i>
<i style="top:480px;left:248px;width:73px;background:linear-gradient(90deg,#0f0099 0.5px,#2b0099 72.5px)"></i>
<i style="top:481px;left:249px;width:71px;background:linear-gradient(90deg,#0f0099 0.5px,#2b0099 70.5px)"></i>
<i style="top:482px;left:250px;width:69px;background:linear-gradient(90deg,#0f0099 0.5px,#2a0099 68.5px)"></i>
<i style="top:483px;left:252px;width:66px;background:linear-gradient(90deg,#100099 0.5px,#2a0099 65.5px)"></i>
<i style="top:484px;left:253px;width:64px;background:linear-gradient(90deg,#100099 0.5px,#290099 63.5px)"></i>
<i style="top:485px;left:254px;width:62px;background:linear-gradient(90deg,#109 0.5px,#290099 61.5px)"></i>
<i style="top:486px;left:255px;width:60px;background:linear-gradient(90deg,#109 0.5px,#280099 59.5px)"></i>
<i style="top:487px;left:257px;width:57px;background:linear-gradient(90deg,#120099 0.5px,#280099 56.5px)"></i>
<i style="top:488px;left:258px;width:55px;background:linear-gradient(90deg,#120099 0.5px,#270099 54.5px)"></i>
<i style="top:489px;left:259px;width:53px;background:linear-gradient(90deg,#120099 0.5px,#260099 52.5px)"></i>
<i style="top:490px;left:260px;width:51px;background:linear-gradient(90deg,#120099 0.5px,#260099 50.5px)"></i>
<i style="top:491px;left:261px;width:49px;background:linear-gradient(90deg,#130099 0.5px,#250099 48.5px)"></i>
<i style="top:492px;left:263px;width:46px;background:linear-gradient(90deg,#130099 0.5px,#250099 45.5px)"></i>
<i style="top:493px;left:264px;width:44px;background:linear-gradient(90deg,#140099 0.5px,#240099 43.5px)"></i>
<i style="top:494px;left:265px;width:42px;background:linear-gradient(90deg,#140099 0.5px,#240099 41.5px)"></i>
<i style="top:495px;left:266px;width:40px;background:linear-gradient(90deg,#140099 0.5px,#230099 39.5px)"></i>
<i style="top:496px;left:267px;width:38px;background:linear-gradient(90deg,#150099 0.5px,#230099 37.5px)"></i>
<i style="top:497px;left:268px;width:36px;background:linear-gradient(90deg,#150099 0.5px,#209 35.5px)"></i>
<i style="top:498px;left:270px;width:33px;background:linear-gradient(90deg,#150099 0.5px,#209 32.5px)"></i>
<i style="top:499px;left:271px;width:32px;background:linear-gradient(90deg,#160099 0.5px,#209 31.5px)"></i>
<i style="top:500px;left:272px;width:30px;background:linear-gradient(90deg,#160099 0.5px,#210099 29.5px)"></i>
<i style="top:501px;left:273px;width:28px;background:linear-gradient(90deg,#160099 0.5px,#210099 27.5px)"></i>
<i style="top:502px;left:274px;width:26px;background:linear-gradient(90deg,#170099 0.5px,#200099 25.5px)"></i>
<i style="top:503px;left:276px;width:23px;background:linear-gradient(90deg,#170099 0.5px,#200099 22.5px)"></i>
<i style="top:504px;left:277px;width:21px;background:linear-gradient(90deg,#170099 0.5px,#1f0099 20.5px)"></i>
<i style="top:505px;left:278px;width:19px;background:linear-gradient(90deg,#180099 0.5px,#1f0099 18.5px)"></i>
<i style="top:506px;left:280px;width:16px;background:linear-gradient(90deg,#180099 0.5px,#1e0099 15.5px)"></i>
<i style="top:507px;left:281px;width:14px;background:linear-gradient(90deg,#190099 0.5px,#1e0099 13.5px)"></i>
<i style="top:508px;left:282px;width:12px;background:linear-gradient(90deg,#190099 0.5px,#1d0099 11.5px)"></i>
<i style="top:509px;left:284px;width:9px;background:linear-gradient(90deg,#1a0099 0.5px,#1d0099 8.5px)"></i>
</div></div>
<div id="inset"><div id="insetin">
<i style="top:0px;height:2px;background:linear-gradient(90deg,#94fdd3 0.5px,#c7fdd1 90.5px,#fdfdcf 177.5px,#fde2b8 222.5px)"></i>
<i style="top:2px;height:2px;background:linear-gradient(90deg,#95fdd4 0.5px,#c8fdd2 90.5px,#fdfdd0 175.5px,#fde1b8 222.5px)"></i>
<i style="top:4px;height:2px;background:linear-gradient(90deg,#96fdd5 0.5px,#c9fdd3 89.5px,#fdfdd1 173.5px,#fde0b9 222.5px)"></i>
<i style="top:6px;height:2px;background:linear-gradient(90deg,#97fdd6 0.5px,#c9fdd4 88.5px,#fdfdd2 171.5px,#fddfb9 222.5px)"></i>
<i style="top:8px;height:2px;background:linear-gradient(90deg,#97fdd7 0.5px,#c9fdd5 86.5px,#fdfdd3 170.5px,#fddeb9 222.5px)"></i>
<i style="top:10px;height:2px;background:linear-gradient(90deg,#98fdd8 0.5px,#cafdd7 86.5px,#fdfdd5 168.5px,#fdddb9 222.5px)"></i>
<i style="top:12px;height:2px;background:linear-gradient(90deg,#99fdd9 0.5px,#cafdd8 85.5px,#fdfdd6 166.5px,#fddcb9 222.5px)"></i>
<i style="top:14px;height:2px;background:linear-gradient(90deg,#9afdda 0.5px,#cafdd9 84.5px,#fdfdd7 164.5px,#fddbba 222.5px)"></i>
<i style="top:16px;height:2px;background:linear-gradient(90deg,#9bfddb 0.5px,#cbfdda 83.5px,#fdfdd8 162.5px,#fddaba 222.5px)"></i>
<i style="top:18px;height:2px;background:linear-gradient(90deg,#9bfddc 0.5px,#cbfddb 81.5px,#fdfdd9 161.5px,#fdd9ba 222.5px)"></i>
<i style="top:20px;height:2px;background:linear-gradient(90deg,#9cfdde 0.5px,#ccfddc 81.5px,#fdfddb 159.5px,#fdd8ba 222.5px)"></i>
<i style="top:22px;height:2px;background:linear-gradient(90deg,#9dfddf 0.5px,#cdfddd 81.5px,#fdfddc 157.5px,#fdd7ba 222.5px)"></i>
<i style="top:24px;height:2px;background:linear-gradient(90deg,#9efde0 0.5px,#ccfddf 79.5px,#fdfddd 155.5px,#fdd6ba 222.5px)"></i>
<i style="top:26px;height:2px;background:linear-gradient(90deg,#9ffde1 0.5px,#cdfde0 78.5px,#fdfdde 153.5px,#fdd5bb 222.5px)"></i>
<i style="top:28px;height:2px;background:linear-gradient(90deg,#9ffde2 0.5px,#cdfde1 77.5px,#fdfde0 152.5px,#fdd4bb 222.5px)"></i>
<i style="top:30px;height:2px;background:linear-gradient(90deg,#a0fde3 0.5px,#cefde2 77.5px,#fdfde1 150.5px,#fdd3bb 222.5px)"></i>
<i style="top:32px;height:2px;background:linear-gradient(90deg,#a1fde4 0.5px,#cffde3 76.5px,#fdfde2 148.5px,#fdd2bb 222.5px)"></i>
<i style="top:34px;height:2px;background:linear-gradient(90deg,#a2fde5 0.5px,#cffde4 75.5px,#fdfde3 146.5px,#fdd2bb 222.5px)"></i>
<i style="top:36px;height:2px;background:linear-gradient(90deg,#a3fde6 0.5px,#cefde6 72.5px,#fdfde4 145.5px,#fde6cf 182.5px,#fdd1bc 222.5px)"></i>
<i style="top:38px;height:2px;background:linear-gradient(90deg,#a4fde8 0.5px,#cffde7 72.5px,#fdfde6 143.5px,#fde5d0 181.5px,#fdd0bc 222.5px)"></i>
<i style="top:40px;height:2px;background:linear-gradient(90deg,#a5fde9 0.5px,#d0fde8 72.5px,#fdfde7 141.5px,#fde5d1 180.5px,#fdcfbc 222.5px)"></i>
<i style="top:42px;height:2px;background:linear-gradient(90deg,#a5fdea 0.5px,#d1fde9 71.5px,#fdfde8 139.5px,#fde4d1 180.5px,#fdcebc 222.5px)"></i>
<i style="top:44px;height:2px;background:linear-gradient(90deg,#a6fdeb 0.5px,#fdfdea 137.5px,#fde3d1 179.5px,#fdcdbc 222.5px)"></i>
<i style="top:46px;height:2px;background:linear-gradient(90deg,#a7fdec 0.5px,#fdfdeb 136.5px,#fde3d3 177.5px,#fdccbd 222.5px)"></i>
<i style="top:48px;height:2px;background:linear-gradient(90deg,#a8fded 0.5px,#fdfdec 134.5px,#fde3d3 176.5px,#fdcbbd 222.5px)"></i>
<i style="top:50px;height:2px;background:linear-gradient(90deg,#a9fdee 0.5px,#fdfded 132.5px,#fde2d4 175.5px,#fdcabd 222.5px)"></i>
<i style="top:52px;height:2px;background:linear-gradient(90deg,#aafdf0 0.5px,#fdfdef 130.5px,#fde1d4 175.5px,#fdc9bd 222.5px)"></i>
<i style="top:54px;height:2px;background:linear-gradient(90deg,#abfdf1 0.5px,#fdfdf0 128.5px,#fde1d5 174.5px,#fdc8bd 222.5px)"></i>
<i style="top:56px;height:2px;background:linear-gradient(90deg,#acfdf2 0.5px,#fdfdf1 127.5px,#fde1d6 172.5px,#fdc7bd 222.5px)"></i>
<i style="top:58px;height:2px;background:linear-gradient(90deg,#adfdf3 0.5px,#fdfdf3 125.5px,#fde0d7 171.5px,#fdc6be 222.5px)"></i>
<i style="top:60px;height:2px;background:linear-gradient(90deg,#aefdf4 0.5px,#fdfdf4 123.5px,#fde0d8 170.5px,#fdc5be 222.5px)"></i>
<i style="top:62px;height:2px;background:linear-gradient(90deg,#aefdf6 0.5px,#fdfdf5 121.5px,#fddfd8 170.5px,#fdc4be 222.5px)"></i>
<i style="top:64px;height:2px;background:linear-gradient(90deg,#affdf7 0.5px,#fdfdf6 120.5px,#fddfd9 168.5px,#fdc3be 222.5px)"></i>
<i style="top:66px;height:2px;background:linear-gradient(90deg,#b0fdf8 0.5px,#fdfdf8 118.5px,#fddeda 167.5px,#fdc2be 222.5px)"></i>
<i style="top:68px;height:2px;background:linear-gradient(90deg,#b1fdf9 0.5px,#fdfdf9 116.5px,#fddeda 166.5px,#fdc1be 222.5px)"></i>
<i style="top:70px;height:2px;background:linear-gradient(90deg,#b2fdfb 0.5px,#fdfdfb 114.5px,#fddddb 166.5px,#fdc1bf 222.5px)"></i>
<i style="top:72px;height:2px;background:linear-gradient(90deg,#b3fdfc 0.5px,#fdfdfc 112.5px,#fddcdb 165.5px,#fdc0bf 222.5px)"></i>
<i style="top:74px;height:2px;background:linear-gradient(90deg,#b4fdfd 0.5px,#fdfdfd 111.5px,#fddcdc 163.5px,#fdbfbf 222.5px)"></i>
<i style="top:76px;height:2px;background:linear-gradient(90deg,#b4fcfd 0.5px,#fdfbfd 111.5px,#fddbdc 164.5px,#fdbebf 222.5px)"></i>
<i style="top:78px;height:2px;background:linear-gradient(90deg,#b4fafd 0.5px,#fdfafd 111.5px,#fddadc 164.5px,#fdbdbf 222.5px)"></i>
<i style="top:80px;height:2px;background:linear-gradient(90deg,#b4f9fd 0.5px,#fdf9fd 111.5px,#fdd8dc 164.5px,#fdbcbf 222.5px)"></i>
<i style="top:82px;height:2px;background:linear-gradient(90deg,#b4f8fd 0.5px,#fdf7fd 111.5px,#fdd7dc 165.5px,#fdbbc0 222.5px)"></i>
<i style="top:84px;height:2px;background:linear-gradient(90deg,#b4f7fd 0.5px,#fdf6fd 112.5px,#fdd6dd 164.5px,#fdbac0 222.5px)"></i>
<i style="top:86px;height:2px;background:linear-gradient(90deg,#b4f5fd 0.5px,#fdf5fd 112.5px,#fdd5dd 164.5px,#fdb9c0 222.5px)"></i>
<i style="top:88px;height:2px;background:linear-gradient(90deg,#b5f4fd 0.5px,#fdf3fd 112.5px,#fdd4dd 164.5px,#fdb8c0 222.5px)"></i>
<i style="top:90px;height:2px;background:linear-gradient(90deg,#b5f3fd 0.5px,#fdf2fd 112.5px,#fdd3dd 164.5px,#fdb7c0 222.5px)"></i>
<i style="top:92px;height:2px;background:linear-gradient(90deg,#b5f2fd 0.5px,#fdf1fd 112.5px,#fdd2dd 164.5px,#fdb7c1 222.5px)"></i>
<i style="top:94px;height:2px;background:linear-gradient(90deg,#b5f1fd 0.5px,#fdf0fd 112.5px,#fdd1dd 165.5px,#fdb6c1 222.5px)"></i>
<i style="top:96px;height:2px;background:linear-gradient(90deg,#b5effd 0.5px,#fdeefd 112.5px,#fdd0dd 165.5px,#fdb5c1 222.5px)"></i>
<i style="top:98px;height:2px;background:linear-gradient(90deg,#b5eefd 0.5px,#fdedfd 113.5px,#fdcfdd 165.5px,#fdb4c1 222.5px)"></i>
<i style="top:100px;height:2px;background:linear-gradient(90deg,#b5edfd 0.5px,#fdecfd 113.5px,#fdcedd 165.5px,#fdb3c1 222.5px)"></i>
<i style="top:102px;height:2px;background:linear-gradient(90deg,#b5ecfd 0.5px,#fdeafd 113.5px,#fdcddd 165.5px,#fdb2c1 222.5px)"></i>
<i style="top:104px;height:2px;background:linear-gradient(90deg,#b5ebfd 0.5px,#fde9fd 113.5px,#fdccdd 165.5px,#fdb1c2 222.5px)"></i>
<i style="top:106px;height:2px;background:linear-gradient(90deg,#b5e9fd 0.5px,#fde8fd 113.5px,#fdcbde 165.5px,#fdb0c2 222.5px)"></i>
<i style="top:108px;height:2px;background:linear-gradient(90deg,#b5e8fd 0.5px,#fde7fd 113.5px,#fdcade 165.5px,#fdafc2 222.5px)"></i>
<i style="top:110px;height:2px;background:linear-gradient(90deg,#b5e7fd 0.5px,#fde5fd 113.5px,#fdc8dd 166.5px,#fdafc2 222.5px)"></i>
<i style="top:112px;height:2px;background:linear-gradient(90deg,#b5e6fd 0.5px,#fde4fd 114.5px,#fdc7de 165.5px,#fdaec2 222.5px)"></i>
<i style="top:114px;height:2px;background:linear-gradient(90deg,#b5e5fd 0.5px,#fde3fd 114.5px,#fdc6de 165.5px,#fdadc2 222.5px)"></i>
<i style="top:116px;height:2px;background:linear-gradient(90deg,#b5e4fd 0.5px,#fde2fd 114.5px,#fdc5de 165.5px,#fdacc2 222.5px)"></i>
<i style="top:118px;height:2px;background:linear-gradient(90deg,#b6e2fd 0.5px,#fde0fd 114.5px,#fdc5de 165.5px,#fdabc3 222.5px)"></i>
<i style="top:120px;height:2px;background:linear-gradient(90deg,#b6e1fd 0.5px,#fddffd 114.5px,#fdc4df 165.5px,#fdaac3 222.5px)"></i>
<i style="top:122px;height:2px;background:linear-gradient(90deg,#b6e0fd 0.5px,#fddefd 114.5px,#fdc2de 166.5px,#fda9c3 222.5px)"></i>
<i style="top:124px;height:2px;background:linear-gradient(90deg,#b6dffd 0.5px,#fdddfd 114.5px,#fdc1de 166.5px,#fda9c3 222.5px)"></i>
<i style="top:126px;height:2px;background:linear-gradient(90deg,#b6defd 0.5px,#fddbfd 115.5px,#fdc0de 166.5px,#fda8c3 222.5px)"></i>
<i style="top:128px;height:2px;background:linear-gradient(90deg,#b6ddfd 0.5px,#fddafd 115.5px,#fdbfdf 166.5px,#fda7c3 222.5px)"></i>
<i style="top:130px;height:2px;background:linear-gradient(90deg,#b6dcfd 0.5px,#fdd9fd 115.5px,#fdbedf 166.5px,#fda6c4 222.5px)"></i>
<i style="top:132px;height:2px;background:linear-gradient(90deg,#b6dafd 0.5px,#fdd8fd 115.5px,#fdbddf 166.5px,#fda5c4 222.5px)"></i>
<i style="top:134px;height:2px;background:linear-gradient(90deg,#b6d9fd 0.5px,#fdd7fd 115.5px,#fdbcdf 166.5px,#fda4c4 222.5px)"></i>
<i style="top:136px;height:2px;background:linear-gradient(90deg,#b6d8fd 0.5px,#fdd6fd 115.5px,#fdbbdf 166.5px,#fda3c4 222.5px)"></i>
<i style="top:138px;height:2px;background:linear-gradient(90deg,#b6d7fd 0.5px,#fdd4fd 115.5px,#fdbadf 167.5px,#fda3c4 222.5px)"></i>
<i style="top:140px;height:2px;background:linear-gradient(90deg,#b6d6fd 0.5px,#fdd3fd 116.5px,#fdb9df 166.5px,#fda2c4 222.5px)"></i>
<i style="top:142px;height:2px;background:linear-gradient(90deg,#b6d5fd 0.5px,#fdd2fd 116.5px,#fdb8df 166.5px,#fda1c5 222.5px)"></i>
<i style="top:144px;height:2px;background:linear-gradient(90deg,#b6d4fd 0.5px,#fdd1fd 116.5px,#fdb7e0 166.5px,#fda0c5 222.5px)"></i>
<i style="top:146px;height:2px;background:linear-gradient(90deg,#b6d3fd 0.5px,#fdd0fd 116.5px,#fdb6e0 166.5px,#fd9fc5 222.5px)"></i>
<i style="top:148px;height:1.5px;background:linear-gradient(90deg,#b6d2fd 0.5px,#fdcffd 116.5px,#fdb6e0 166.5px,#fd9fc5 222.5px)"></i>
</div></div>
<svg width="1766" height="952" viewBox="0 0 1766 952" style="left:0;top:0">
<defs>
<linearGradient id="dd" x1="0" x2="1" y1="0" y2="0"><stop offset="0" stop-color="#5c5c5c"/><stop offset=".45" stop-color="#6b6b6b"/><stop offset="1" stop-color="#4b4b4b"/></linearGradient>
<linearGradient id="b1" x1="0" x2="1"><stop offset="0" stop-color="rgb(218,68,68)"/><stop offset=".5" stop-color="rgb(204,28,28)"/><stop offset="1" stop-color="rgb(173,23,23)"/></linearGradient>
<linearGradient id="b2" x1="0" x2="1"><stop offset="0" stop-color="rgb(68,198,68)"/><stop offset=".5" stop-color="rgb(28,180,28)"/><stop offset="1" stop-color="rgb(23,153,23)"/></linearGradient>
<linearGradient id="b3" x1="0" x2="1"><stop offset="0" stop-color="rgb(73,73,218)"/><stop offset=".5" stop-color="rgb(33,33,204)"/><stop offset="1" stop-color="rgb(28,28,173)"/></linearGradient>
<linearGradient id="b4" x1="0" x2="1"><stop offset="0" stop-color="rgb(68,198,198)"/><stop offset=".5" stop-color="rgb(28,180,180)"/><stop offset="1" stop-color="rgb(23,153,153)"/></linearGradient>
<linearGradient id="b5" x1="0" x2="1"><stop offset="0" stop-color="rgb(209,68,209)"/><stop offset=".5" stop-color="rgb(194,28,194)"/><stop offset="1" stop-color="rgb(164,23,164)"/></linearGradient>
<linearGradient id="b6" x1="0" x2="1"><stop offset="0" stop-color="rgb(202,202,73)"/><stop offset=".5" stop-color="rgb(185,185,33)"/><stop offset="1" stop-color="rgb(157,157,28)"/></linearGradient>
<linearGradient id="b7" x1="0" x2="1"><stop offset="0" stop-color="rgb(237,113,113)"/><stop offset=".5" stop-color="rgb(227,80,80)"/><stop offset="1" stop-color="rgb(181,64,64)"/></linearGradient>
<linearGradient id="b8" x1="0" x2="1"><stop offset="0" stop-color="rgb(113,220,113)"/><stop offset=".5" stop-color="rgb(80,207,80)"/><stop offset="1" stop-color="rgb(64,165,64)"/></linearGradient>
<linearGradient id="b9" x1="0" x2="1"><stop offset="0" stop-color="rgb(116,116,237)"/><stop offset=".5" stop-color="rgb(84,84,227)"/><stop offset="1" stop-color="rgb(67,67,181)"/></linearGradient>
<linearGradient id="b10" x1="0" x2="1"><stop offset="0" stop-color="rgb(113,220,220)"/><stop offset=".5" stop-color="rgb(80,207,207)"/><stop offset="1" stop-color="rgb(64,165,165)"/></linearGradient>
<linearGradient id="b11" x1="0" x2="1"><stop offset="0" stop-color="rgb(231,113,231)"/><stop offset=".5" stop-color="rgb(219,80,219)"/><stop offset="1" stop-color="rgb(175,64,175)"/></linearGradient>
<linearGradient id="b12" x1="0" x2="1"><stop offset="0" stop-color="rgb(224,224,116)"/><stop offset=".5" stop-color="rgb(211,211,84)"/><stop offset="1" stop-color="rgb(168,168,67)"/></linearGradient>
<linearGradient id="b13" x1="0" x2="1"><stop offset="0" stop-color="rgb(243,144,144)"/><stop offset=".5" stop-color="rgb(234,117,117)"/><stop offset="1" stop-color="rgb(175,87,87)"/></linearGradient>
<linearGradient id="b14" x1="0" x2="1"><stop offset="0" stop-color="rgb(144,230,144)"/><stop offset=".5" stop-color="rgb(117,218,117)"/><stop offset="1" stop-color="rgb(87,163,87)"/></linearGradient>
<linearGradient id="b15" x1="0" x2="1"><stop offset="0" stop-color="rgb(147,147,243)"/><stop offset=".5" stop-color="rgb(120,120,234)"/><stop offset="1" stop-color="rgb(90,90,175)"/></linearGradient>
<linearGradient id="b16" x1="0" x2="1"><stop offset="0" stop-color="rgb(144,230,230)"/><stop offset=".5" stop-color="rgb(117,218,218)"/><stop offset="1" stop-color="rgb(87,163,163)"/></linearGradient>
<linearGradient id="b17" x1="0" x2="1"><stop offset="0" stop-color="rgb(237,144,237)"/><stop offset=".5" stop-color="rgb(227,117,227)"/><stop offset="1" stop-color="rgb(170,87,170)"/></linearGradient>
<linearGradient id="b18" x1="0" x2="1"><stop offset="0" stop-color="rgb(232,232,147)"/><stop offset=".5" stop-color="rgb(221,221,120)"/><stop offset="1" stop-color="rgb(165,165,90)"/></linearGradient>
<linearGradient id="b19" x1="0" x2="1"><stop offset="0" stop-color="rgb(243,171,171)"/><stop offset=".5" stop-color="rgb(234,149,149)"/><stop offset="1" stop-color="rgb(163,104,104)"/></linearGradient>
<linearGradient id="b20" x1="0" x2="1"><stop offset="0" stop-color="rgb(171,233,171)"/><stop offset=".5" stop-color="rgb(149,222,149)"/><stop offset="1" stop-color="rgb(104,155,104)"/></linearGradient>
<linearGradient id="b21" x1="0" x2="1"><stop offset="0" stop-color="rgb(174,174,243)"/><stop offset=".5" stop-color="rgb(152,152,234)"/><stop offset="1" stop-color="rgb(106,106,163)"/></linearGradient>
<linearGradient id="b22" x1="0" x2="1"><stop offset="0" stop-color="rgb(171,233,233)"/><stop offset=".5" stop-color="rgb(149,222,222)"/><stop offset="1" stop-color="rgb(104,155,155)"/></linearGradient>
<linearGradient id="b23" x1="0" x2="1"><stop offset="0" stop-color="rgb(239,171,239)"/><stop offset=".5" stop-color="rgb(229,149,229)"/><stop offset="1" stop-color="rgb(160,104,160)"/></linearGradient>
<linearGradient id="b24" x1="0" x2="1"><stop offset="0" stop-color="rgb(236,236,174)"/><stop offset=".5" stop-color="rgb(225,225,152)"/><stop offset="1" stop-color="rgb(157,157,106)"/></linearGradient>
<linearGradient id="b25" x1="0" x2="1"><stop offset="0" stop-color="rgb(237,197,197)"/><stop offset=".5" stop-color="rgb(227,179,179)"/><stop offset="1" stop-color="rgb(147,116,116)"/></linearGradient>
<linearGradient id="b26" x1="0" x2="1"><stop offset="0" stop-color="rgb(197,232,197)"/><stop offset=".5" stop-color="rgb(179,221,179)"/><stop offset="1" stop-color="rgb(116,143,116)"/></linearGradient>
<linearGradient id="b27" x1="0" x2="1"><stop offset="0" stop-color="rgb(198,198,237)"/><stop offset=".5" stop-color="rgb(180,180,227)"/><stop offset="1" stop-color="rgb(116,116,147)"/></linearGradient>
<linearGradient id="b28" x1="0" x2="1"><stop offset="0" stop-color="rgb(197,232,232)"/><stop offset=".5" stop-color="rgb(179,221,221)"/><stop offset="1" stop-color="rgb(116,143,143)"/></linearGradient>
<linearGradient id="b29" x1="0" x2="1"><stop offset="0" stop-color="rgb(236,197,236)"/><stop offset=".5" stop-color="rgb(225,179,225)"/><stop offset="1" stop-color="rgb(146,116,146)"/></linearGradient>
<linearGradient id="b30" x1="0" x2="1"><stop offset="0" stop-color="rgb(233,233,198)"/><stop offset=".5" stop-color="rgb(222,222,180)"/><stop offset="1" stop-color="rgb(144,144,116)"/></linearGradient>
<linearGradient id="bw" x1="0" x2="1"><stop offset="0" stop-color="#fff"/><stop offset=".5" stop-color="#f4f4f4"/><stop offset="1" stop-color="#9a9a9a"/></linearGradient>
<linearGradient id="rb0" x1="0" x2="0" y1="0" y2="1"><stop offset="0" stop-color="#ea5252"/><stop offset="1" stop-color="#e03c3c"/></linearGradient>
<linearGradient id="rb1" x1="0" x2="0" y1="0" y2="1"><stop offset="0" stop-color="#52a056"/><stop offset="1" stop-color="#388c3c"/></linearGradient>
<linearGradient id="rb2" x1="0" x2="0" y1="0" y2="1"><stop offset="0" stop-color="#5252ea"/><stop offset="1" stop-color="#3636de"/></linearGradient>
<linearGradient id="th" x1="0" x2="0" y1="0" y2="1"><stop offset="0" stop-color="#303030"/><stop offset=".45" stop-color="#2a2a2a"/><stop offset=".5" stop-color="#1c1c1c"/><stop offset="1" stop-color="#161616"/></linearGradient>
</defs>
<text x="6" y="97" font-size="43" fill="#ececec" textLength="354" lengthAdjust="spacingAndGlyphs" stroke="#ececec" stroke-width="0.45">Saturation Sweeps</text>
<text x="593.4" y="89.5" font-size="21.5" fill="#e6e6e6" textLength="64.5" lengthAdjust="spacingAndGlyphs" stroke="#e6e6e6" stroke-width="0.45">Levels:</text>
<text x="130" y="153.5" font-size="21.5" fill="#e6e6e6" textLength="114.5" lengthAdjust="spacingAndGlyphs" stroke="#e6e6e6" stroke-width="0.45">dE Formula:</text>
<rect x="666" y="67.5" width="359.7" height="25.7" fill="url(#dd)"/>
<text x="671" y="89.3" font-size="17.6" fill="#f0f0f0" textLength="95" lengthAdjust="spacingAndGlyphs" stroke="#f0f0f0" stroke-width="0.3">20% Sweeps</text>
<path d="M1010.2 78.6h9.6l-4.8 5.2z" fill="#0a0a0a"/>
<rect x="254" y="132.4" width="141.8" height="26.3" fill="url(#dd)"/>
<text x="258.2" y="154.3" font-size="17.6" fill="#f0f0f0" textLength="37.5" lengthAdjust="spacingAndGlyphs" stroke="#f0f0f0" stroke-width="0.3">2000</text>
<path d="M380.2 143.8h9l-4.5 5z" fill="#0a0a0a"/>
<rect x="45" y="194.2" width="331.5" height="409.3" fill="#252525"/>
<line x1="45" y1="603.5" x2="45" y2="609.5" stroke="#b4b4b4" stroke-width="1.3"/>
<text x="45" y="628.5" font-size="15" fill="#cfcfcf" text-anchor="middle" stroke="#cfcfcf" stroke-width="0.3">0</text>
<line x1="89.2" y1="194.2" x2="89.2" y2="603.5" stroke="#8f8f8f" stroke-width="1.3"/>
<line x1="89.2" y1="603.5" x2="89.2" y2="609.5" stroke="#b4b4b4" stroke-width="1.3"/>
<text x="89.2" y="628.5" font-size="15" fill="#cfcfcf" text-anchor="middle" stroke="#cfcfcf" stroke-width="0.3">2</text>
<line x1="133.4" y1="194.2" x2="133.4" y2="603.5" stroke="#8f8f8f" stroke-width="1.3"/>
<line x1="133.4" y1="603.5" x2="133.4" y2="609.5" stroke="#b4b4b4" stroke-width="1.3"/>
<text x="133.4" y="628.5" font-size="15" fill="#cfcfcf" text-anchor="middle" stroke="#cfcfcf" stroke-width="0.3">4</text>
<line x1="177.6" y1="194.2" x2="177.6" y2="603.5" stroke="#8f8f8f" stroke-width="1.3"/>
<line x1="177.6" y1="603.5" x2="177.6" y2="609.5" stroke="#b4b4b4" stroke-width="1.3"/>
<text x="177.6" y="628.5" font-size="15" fill="#cfcfcf" text-anchor="middle" stroke="#cfcfcf" stroke-width="0.3">6</text>
<line x1="221.8" y1="194.2" x2="221.8" y2="603.5" stroke="#8f8f8f" stroke-width="1.3"/>
<line x1="221.8" y1="603.5" x2="221.8" y2="609.5" stroke="#b4b4b4" stroke-width="1.3"/>
<text x="221.8" y="628.5" font-size="15" fill="#cfcfcf" text-anchor="middle" stroke="#cfcfcf" stroke-width="0.3">8</text>
<line x1="266" y1="194.2" x2="266" y2="603.5" stroke="#8f8f8f" stroke-width="1.3"/>
<line x1="266" y1="603.5" x2="266" y2="609.5" stroke="#b4b4b4" stroke-width="1.3"/>
<text x="266" y="628.5" font-size="15" fill="#cfcfcf" text-anchor="middle" stroke="#cfcfcf" stroke-width="0.3">10</text>
<line x1="310.2" y1="194.2" x2="310.2" y2="603.5" stroke="#8f8f8f" stroke-width="1.3"/>
<line x1="310.2" y1="603.5" x2="310.2" y2="609.5" stroke="#b4b4b4" stroke-width="1.3"/>
<text x="310.2" y="628.5" font-size="15" fill="#cfcfcf" text-anchor="middle" stroke="#cfcfcf" stroke-width="0.3">12</text>
<line x1="354.4" y1="194.2" x2="354.4" y2="603.5" stroke="#8f8f8f" stroke-width="1.3"/>
<line x1="354.4" y1="603.5" x2="354.4" y2="609.5" stroke="#b4b4b4" stroke-width="1.3"/>
<text x="354.4" y="628.5" font-size="15" fill="#cfcfcf" text-anchor="middle" stroke="#cfcfcf" stroke-width="0.3">14</text>
<line x1="45" y1="194.2" x2="376.5" y2="194.2" stroke="#a8a8a8" stroke-width="1.3"/>
<line x1="376.5" y1="194.2" x2="376.5" y2="603.5" stroke="#a8a8a8" stroke-width="1.3"/>
<line x1="45" y1="603.5" x2="376.5" y2="603.5" stroke="#a8a8a8" stroke-width="1.3"/>
<line x1="45" y1="194.2" x2="45" y2="609.5" stroke="#b4b4b4" stroke-width="1.6"/>
<line x1="39" y1="194.2" x2="45" y2="194.2" stroke="#b4b4b4" stroke-width="1.3"/>
<line x1="39" y1="252.671" x2="45" y2="252.671" stroke="#b4b4b4" stroke-width="1.3"/>
<line x1="39" y1="311.143" x2="45" y2="311.143" stroke="#b4b4b4" stroke-width="1.3"/>
<line x1="39" y1="369.614" x2="45" y2="369.614" stroke="#b4b4b4" stroke-width="1.3"/>
<line x1="39" y1="428.086" x2="45" y2="428.086" stroke="#b4b4b4" stroke-width="1.3"/>
<line x1="39" y1="486.557" x2="45" y2="486.557" stroke="#b4b4b4" stroke-width="1.3"/>
<line x1="39" y1="545.029" x2="45" y2="545.029" stroke="#b4b4b4" stroke-width="1.3"/>
<line x1="39" y1="603.5" x2="45" y2="603.5" stroke="#b4b4b4" stroke-width="1.3"/>
<text x="43.5" y="229.306" font-size="15" fill="#cfcfcf" text-anchor="end" stroke="#cfcfcf" stroke-width="0.3">100%</text>
<text x="43.5" y="287.777" font-size="15" fill="#cfcfcf" text-anchor="end" stroke="#cfcfcf" stroke-width="0.3">80%</text>
<text x="43.5" y="346.249" font-size="15" fill="#cfcfcf" text-anchor="end" stroke="#cfcfcf" stroke-width="0.3">60%</text>
<text x="43.5" y="404.72" font-size="15" fill="#cfcfcf" text-anchor="end" stroke="#cfcfcf" stroke-width="0.3">40%</text>
<text x="43.5" y="463.191" font-size="15" fill="#cfcfcf" text-anchor="end" stroke="#cfcfcf" stroke-width="0.3">20%</text>
<text x="43.5" y="521.663" font-size="15" fill="#cfcfcf" text-anchor="end" stroke="#cfcfcf" stroke-width="0.3">100</text>
<text x="43.5" y="580.134" font-size="15" fill="#cfcfcf" text-anchor="end" stroke="#cfcfcf" stroke-width="0.3">0</text>
<text x="190.6" y="188" font-size="15" fill="#cfcfcf" text-anchor="middle" textLength="85" lengthAdjust="spacingAndGlyphs" stroke="#cfcfcf" stroke-width="0.3">DeltaE 2000</text>
<rect x="45.5" y="200.08" width="20.6" height="5.2" fill="url(#b1)" stroke="#0c0c0c" stroke-width="1.3"/>
<rect x="45.5" y="207.298" width="20.6" height="5.2" fill="url(#b2)" stroke="#0c0c0c" stroke-width="1.3"/>
<rect x="45.5" y="214.517" width="2.4" height="5.2" fill="url(#b3)" stroke="#0c0c0c" stroke-width="1.3"/>
<rect x="45.5" y="221.736" width="21.3" height="5.2" fill="url(#b4)" stroke="#0c0c0c" stroke-width="1.3"/>
<rect x="45.5" y="228.954" width="21.3" height="5.2" fill="url(#b5)" stroke="#0c0c0c" stroke-width="1.3"/>
<rect x="45.5" y="236.173" width="20.8" height="5.2" fill="url(#b6)" stroke="#0c0c0c" stroke-width="1.3"/>
<rect x="45.5" y="258.551" width="14.3" height="5.2" fill="url(#b7)" stroke="#0c0c0c" stroke-width="1.3"/>
<rect x="45.5" y="265.77" width="13.8" height="5.2" fill="url(#b8)" stroke="#0c0c0c" stroke-width="1.3"/>
<rect x="45.5" y="272.988" width="2.4" height="5.2" fill="url(#b9)" stroke="#0c0c0c" stroke-width="1.3"/>
<rect x="45.5" y="280.207" width="25.4" height="5.2" fill="url(#b10)" stroke="#0c0c0c" stroke-width="1.3"/>
<rect x="45.5" y="287.426" width="14.5" height="5.2" fill="url(#b11)" stroke="#0c0c0c" stroke-width="1.3"/>
<rect x="45.5" y="294.645" width="13.3" height="5.2" fill="url(#b12)" stroke="#0c0c0c" stroke-width="1.3"/>
<rect x="45.5" y="317.022" width="13.3" height="5.2" fill="url(#b13)" stroke="#0c0c0c" stroke-width="1.3"/>
<rect x="45.5" y="324.241" width="17.5" height="5.2" fill="url(#b14)" stroke="#0c0c0c" stroke-width="1.3"/>
<rect x="45.5" y="331.46" width="6.7" height="5.2" fill="url(#b15)" stroke="#0c0c0c" stroke-width="1.3"/>
<rect x="45.5" y="338.679" width="25.4" height="5.2" fill="url(#b16)" stroke="#0c0c0c" stroke-width="1.3"/>
<rect x="45.5" y="345.897" width="6.7" height="5.2" fill="url(#b17)" stroke="#0c0c0c" stroke-width="1.3"/>
<rect x="45.5" y="353.116" width="16.3" height="5.2" fill="url(#b18)" stroke="#0c0c0c" stroke-width="1.3"/>
<rect x="45.5" y="375.494" width="10.5" height="5.2" fill="url(#b19)" stroke="#0c0c0c" stroke-width="1.3"/>
<rect x="45.5" y="382.713" width="17.5" height="5.2" fill="url(#b20)" stroke="#0c0c0c" stroke-width="1.3"/>
<rect x="45.5" y="389.931" width="11.2" height="5.2" fill="url(#b21)" stroke="#0c0c0c" stroke-width="1.3"/>
<rect x="45.5" y="397.15" width="34.7" height="5.2" fill="url(#b22)" stroke="#0c0c0c" stroke-width="1.3"/>
<rect x="45.5" y="404.369" width="11.2" height="5.2" fill="url(#b23)" stroke="#0c0c0c" stroke-width="1.3"/>
<rect x="45.5" y="411.587" width="20.5" height="5.2" fill="url(#b24)" stroke="#0c0c0c" stroke-width="1.3"/>
<rect x="45.5" y="433.965" width="12" height="5.2" fill="url(#b25)" stroke="#0c0c0c" stroke-width="1.3"/>
<rect x="45.5" y="441.184" width="30.7" height="5.2" fill="url(#b26)" stroke="#0c0c0c" stroke-width="1.3"/>
<rect x="45.5" y="448.403" width="29.2" height="5.2" fill="url(#b27)" stroke="#0c0c0c" stroke-width="1.3"/>
<rect x="45.5" y="455.621" width="68.5" height="5.2" fill="url(#b28)" stroke="#0c0c0c" stroke-width="1.3"/>
<rect x="45.5" y="462.84" width="17.5" height="5.2" fill="url(#b29)" stroke="#0c0c0c" stroke-width="1.3"/>
<rect x="45.5" y="470.059" width="46.8" height="5.2" fill="url(#b30)" stroke="#0c0c0c" stroke-width="1.3"/>
<rect x="45.5" y="536.9" width="58.4" height="5.2" fill="url(#bw)" stroke="#0c0c0c" stroke-width="1.3"/>
<rect x="432" y="137" width="153.5" height="299.5" fill="#252525"/>
<line x1="427" y1="137" x2="585.5" y2="137" stroke="#a8a8a8" stroke-width="1.3"/>
<text x="426.5" y="142.67" font-size="15" fill="#cfcfcf" text-anchor="end" stroke="#cfcfcf" stroke-width="0.3">15</text>
<line x1="427" y1="186.917" x2="585.5" y2="186.917" stroke="#8f8f8f" stroke-width="1.3"/>
<text x="426.5" y="192.587" font-size="15" fill="#cfcfcf" text-anchor="end" stroke="#cfcfcf" stroke-width="0.3">10</text>
<line x1="427" y1="236.833" x2="585.5" y2="236.833" stroke="#8f8f8f" stroke-width="1.3"/>
<text x="426.5" y="242.503" font-size="15" fill="#cfcfcf" text-anchor="end" stroke="#cfcfcf" stroke-width="0.3">5</text>
<line x1="427" y1="286.75" x2="585.5" y2="286.75" stroke="#8f8f8f" stroke-width="1.3"/>
<text x="426.5" y="292.42" font-size="15" fill="#cfcfcf" text-anchor="end" stroke="#cfcfcf" stroke-width="0.3">0</text>
<line x1="427" y1="336.667" x2="585.5" y2="336.667" stroke="#8f8f8f" stroke-width="1.3"/>
<text x="426.5" y="342.337" font-size="15" fill="#cfcfcf" text-anchor="end" stroke="#cfcfcf" stroke-width="0.3">-5</text>
<line x1="427" y1="386.583" x2="585.5" y2="386.583" stroke="#8f8f8f" stroke-width="1.3"/>
<text x="426.5" y="392.253" font-size="15" fill="#cfcfcf" text-anchor="end" stroke="#cfcfcf" stroke-width="0.3">-10</text>
<line x1="427" y1="436.5" x2="585.5" y2="436.5" stroke="#a8a8a8" stroke-width="1.3"/>
<text x="426.5" y="442.17" font-size="15" fill="#cfcfcf" text-anchor="end" stroke="#cfcfcf" stroke-width="0.3">-15</text>
<line x1="432" y1="137" x2="432" y2="442.5" stroke="#b4b4b4" stroke-width="1.5"/>
<line x1="585.5" y1="137" x2="585.5" y2="442.5" stroke="#a8a8a8" stroke-width="1.3"/>
<text x="509.75" y="454" font-size="15" fill="#cfcfcf" text-anchor="middle" stroke="#cfcfcf" stroke-width="0.3">0</text>
<text x="495" y="129.6" font-size="15" fill="#cfcfcf" text-anchor="middle" textLength="49.5" lengthAdjust="spacingAndGlyphs" stroke="#cfcfcf" stroke-width="0.3">Delta L</text>
<line x1="432" y1="137" x2="585.5" y2="137" stroke="#a4a4a4" stroke-width="2"/>
<rect x="642.7" y="137" width="153.6" height="299.5" fill="#252525"/>
<line x1="637.7" y1="137" x2="796.3" y2="137" stroke="#a8a8a8" stroke-width="1.3"/>
<text x="637.2" y="142.67" font-size="15" fill="#cfcfcf" text-anchor="end" stroke="#cfcfcf" stroke-width="0.3">15</text>
<line x1="637.7" y1="186.917" x2="796.3" y2="186.917" stroke="#8f8f8f" stroke-width="1.3"/>
<text x="637.2" y="192.587" font-size="15" fill="#cfcfcf" text-anchor="end" stroke="#cfcfcf" stroke-width="0.3">10</text>
<line x1="637.7" y1="236.833" x2="796.3" y2="236.833" stroke="#8f8f8f" stroke-width="1.3"/>
<text x="637.2" y="242.503" font-size="15" fill="#cfcfcf" text-anchor="end" stroke="#cfcfcf" stroke-width="0.3">5</text>
<line x1="637.7" y1="286.75" x2="796.3" y2="286.75" stroke="#8f8f8f" stroke-width="1.3"/>
<text x="637.2" y="292.42" font-size="15" fill="#cfcfcf" text-anchor="end" stroke="#cfcfcf" stroke-width="0.3">0</text>
<line x1="637.7" y1="336.667" x2="796.3" y2="336.667" stroke="#8f8f8f" stroke-width="1.3"/>
<text x="637.2" y="342.337" font-size="15" fill="#cfcfcf" text-anchor="end" stroke="#cfcfcf" stroke-width="0.3">-5</text>
<line x1="637.7" y1="386.583" x2="796.3" y2="386.583" stroke="#8f8f8f" stroke-width="1.3"/>
<text x="637.2" y="392.253" font-size="15" fill="#cfcfcf" text-anchor="end" stroke="#cfcfcf" stroke-width="0.3">-10</text>
<line x1="637.7" y1="436.5" x2="796.3" y2="436.5" stroke="#a8a8a8" stroke-width="1.3"/>
<text x="637.2" y="442.17" font-size="15" fill="#cfcfcf" text-anchor="end" stroke="#cfcfcf" stroke-width="0.3">-15</text>
<line x1="642.7" y1="137" x2="642.7" y2="442.5" stroke="#b4b4b4" stroke-width="1.5"/>
<line x1="796.3" y1="137" x2="796.3" y2="442.5" stroke="#a8a8a8" stroke-width="1.3"/>
<text x="720.5" y="454" font-size="15" fill="#cfcfcf" text-anchor="middle" stroke="#cfcfcf" stroke-width="0.3">0</text>
<text x="705" y="129.6" font-size="15" fill="#cfcfcf" text-anchor="middle" textLength="49.5" lengthAdjust="spacingAndGlyphs" stroke="#cfcfcf" stroke-width="0.3">Delta C</text>
<line x1="642.7" y1="137" x2="796.3" y2="137" stroke="#a4a4a4" stroke-width="2"/>
<rect x="852.6" y="137" width="153" height="299.5" fill="#252525"/>
<line x1="847.6" y1="137" x2="1005.6" y2="137" stroke="#a8a8a8" stroke-width="1.3"/>
<text x="847.1" y="142.67" font-size="15" fill="#cfcfcf" text-anchor="end" stroke="#cfcfcf" stroke-width="0.3">15</text>
<line x1="847.6" y1="186.917" x2="1005.6" y2="186.917" stroke="#8f8f8f" stroke-width="1.3"/>
<text x="847.1" y="192.587" font-size="15" fill="#cfcfcf" text-anchor="end" stroke="#cfcfcf" stroke-width="0.3">10</text>
<line x1="847.6" y1="236.833" x2="1005.6" y2="236.833" stroke="#8f8f8f" stroke-width="1.3"/>
<text x="847.1" y="242.503" font-size="15" fill="#cfcfcf" text-anchor="end" stroke="#cfcfcf" stroke-width="0.3">5</text>
<line x1="847.6" y1="286.75" x2="1005.6" y2="286.75" stroke="#8f8f8f" stroke-width="1.3"/>
<text x="847.1" y="292.42" font-size="15" fill="#cfcfcf" text-anchor="end" stroke="#cfcfcf" stroke-width="0.3">0</text>
<line x1="847.6" y1="336.667" x2="1005.6" y2="336.667" stroke="#8f8f8f" stroke-width="1.3"/>
<text x="847.1" y="342.337" font-size="15" fill="#cfcfcf" text-anchor="end" stroke="#cfcfcf" stroke-width="0.3">-5</text>
<line x1="847.6" y1="386.583" x2="1005.6" y2="386.583" stroke="#8f8f8f" stroke-width="1.3"/>
<text x="847.1" y="392.253" font-size="15" fill="#cfcfcf" text-anchor="end" stroke="#cfcfcf" stroke-width="0.3">-10</text>
<line x1="847.6" y1="436.5" x2="1005.6" y2="436.5" stroke="#a8a8a8" stroke-width="1.3"/>
<text x="847.1" y="442.17" font-size="15" fill="#cfcfcf" text-anchor="end" stroke="#cfcfcf" stroke-width="0.3">-15</text>
<line x1="852.6" y1="137" x2="852.6" y2="442.5" stroke="#b4b4b4" stroke-width="1.5"/>
<line x1="1005.6" y1="137" x2="1005.6" y2="442.5" stroke="#a8a8a8" stroke-width="1.3"/>
<text x="930.1" y="454" font-size="15" fill="#cfcfcf" text-anchor="middle" stroke="#cfcfcf" stroke-width="0.3">0</text>
<text x="914.5" y="129.6" font-size="15" fill="#cfcfcf" text-anchor="middle" textLength="49.5" lengthAdjust="spacingAndGlyphs" stroke="#cfcfcf" stroke-width="0.3">Delta H</text>
<line x1="852.6" y1="137" x2="1005.6" y2="137" stroke="#a4a4a4" stroke-width="2"/>
<rect x="397.5" y="464" width="629.2" height="173.7" fill="#000"/>
<rect x="426.4" y="471.7" width="185.6" height="140.3" fill="#000" stroke="#f4f4f4" stroke-width="1.5"/>
<rect x="642.9" y="471" width="187.7" height="71" fill="#fff8f8"/>
<rect x="642.9" y="542" width="187.7" height="70.7" fill="#fcfcfc"/>
<text x="518.8" y="629" font-size="11.5" fill="#f2f2f2" text-anchor="middle" font-weight="bold" font-family='"DejaVu Sans", "Liberation Sans", sans-serif'>0</text>
<text x="736" y="629" font-size="11.5" fill="#f2f2f2" text-anchor="middle" font-weight="bold" font-family='"DejaVu Sans", "Liberation Sans", sans-serif'>100</text>
<text x="0" y="0" font-size="11.5" fill="#f2f2f2" text-anchor="middle" font-weight="bold" font-family='"DejaVu Sans", "Liberation Sans", sans-serif' transform="translate(411.5 502.6) rotate(-90)">Actual</text>
<text x="0" y="0" font-size="11.5" fill="#f2f2f2" text-anchor="middle" font-weight="bold" font-family='"DejaVu Sans", "Liberation Sans", sans-serif' transform="translate(411.5 581.8) rotate(-90)">Target</text>
<text x="1403" y="85.7" font-size="15" fill="#cfcfcf" text-anchor="middle" textLength="90" lengthAdjust="spacingAndGlyphs" stroke="#cfcfcf" stroke-width="0.3">CIE 1976 u'v'</text>
<line x1="1080.8" y1="614.5" x2="1080.8" y2="620.5" stroke="#b4b4b4" stroke-width="1.5"/>
<text x="1080.8" y="638.3" font-size="15" fill="#cfcfcf" text-anchor="middle" stroke="#cfcfcf" stroke-width="0.3">0</text>
<line x1="1075" y1="615.3" x2="1081" y2="615.3" stroke="#b4b4b4" stroke-width="1.5"/>
<text x="1074" y="620.97" font-size="15" fill="#cfcfcf" text-anchor="end" stroke="#cfcfcf" stroke-width="0.3">0</text>
<line x1="1137.45" y1="614.5" x2="1137.45" y2="620.5" stroke="#b4b4b4" stroke-width="1.5"/>
<text x="1137.45" y="638.3" font-size="15" fill="#cfcfcf" text-anchor="middle" stroke="#cfcfcf" stroke-width="0.3">0.05</text>
<line x1="1075" y1="571.7" x2="1081" y2="571.7" stroke="#b4b4b4" stroke-width="1.5"/>
<text x="1074" y="577.37" font-size="15" fill="#cfcfcf" text-anchor="end" stroke="#cfcfcf" stroke-width="0.3">0.05</text>
<line x1="1194.1" y1="614.5" x2="1194.1" y2="620.5" stroke="#b4b4b4" stroke-width="1.5"/>
<text x="1194.1" y="638.3" font-size="15" fill="#cfcfcf" text-anchor="middle" stroke="#cfcfcf" stroke-width="0.3">0.1</text>
<line x1="1075" y1="528.1" x2="1081" y2="528.1" stroke="#b4b4b4" stroke-width="1.5"/>
<text x="1074" y="533.77" font-size="15" fill="#cfcfcf" text-anchor="end" stroke="#cfcfcf" stroke-width="0.3">0.1</text>
<line x1="1250.75" y1="614.5" x2="1250.75" y2="620.5" stroke="#b4b4b4" stroke-width="1.5"/>
<text x="1250.75" y="638.3" font-size="15" fill="#cfcfcf" text-anchor="middle" stroke="#cfcfcf" stroke-width="0.3">0.15</text>
<line x1="1075" y1="484.5" x2="1081" y2="484.5" stroke="#b4b4b4" stroke-width="1.5"/>
<text x="1074" y="490.17" font-size="15" fill="#cfcfcf" text-anchor="end" stroke="#cfcfcf" stroke-width="0.3">0.15</text>
<line x1="1307.4" y1="614.5" x2="1307.4" y2="620.5" stroke="#b4b4b4" stroke-width="1.5"/>
<text x="1307.4" y="638.3" font-size="15" fill="#cfcfcf" text-anchor="middle" stroke="#cfcfcf" stroke-width="0.3">0.2</text>
<line x1="1075" y1="440.9" x2="1081" y2="440.9" stroke="#b4b4b4" stroke-width="1.5"/>
<text x="1074" y="446.57" font-size="15" fill="#cfcfcf" text-anchor="end" stroke="#cfcfcf" stroke-width="0.3">0.2</text>
<line x1="1364.05" y1="614.5" x2="1364.05" y2="620.5" stroke="#b4b4b4" stroke-width="1.5"/>
<text x="1364.05" y="638.3" font-size="15" fill="#cfcfcf" text-anchor="middle" stroke="#cfcfcf" stroke-width="0.3">0.25</text>
<line x1="1075" y1="397.3" x2="1081" y2="397.3" stroke="#b4b4b4" stroke-width="1.5"/>
<text x="1074" y="402.97" font-size="15" fill="#cfcfcf" text-anchor="end" stroke="#cfcfcf" stroke-width="0.3">0.25</text>
<line x1="1420.7" y1="614.5" x2="1420.7" y2="620.5" stroke="#b4b4b4" stroke-width="1.5"/>
<text x="1420.7" y="638.3" font-size="15" fill="#cfcfcf" text-anchor="middle" stroke="#cfcfcf" stroke-width="0.3">0.3</text>
<line x1="1075" y1="353.7" x2="1081" y2="353.7" stroke="#b4b4b4" stroke-width="1.5"/>
<text x="1074" y="359.37" font-size="15" fill="#cfcfcf" text-anchor="end" stroke="#cfcfcf" stroke-width="0.3">0.3</text>
<line x1="1477.35" y1="614.5" x2="1477.35" y2="620.5" stroke="#b4b4b4" stroke-width="1.5"/>
<text x="1477.35" y="638.3" font-size="15" fill="#cfcfcf" text-anchor="middle" stroke="#cfcfcf" stroke-width="0.3">0.35</text>
<line x1="1075" y1="310.1" x2="1081" y2="310.1" stroke="#b4b4b4" stroke-width="1.5"/>
<text x="1074" y="315.77" font-size="15" fill="#cfcfcf" text-anchor="end" stroke="#cfcfcf" stroke-width="0.3">0.35</text>
<line x1="1534" y1="614.5" x2="1534" y2="620.5" stroke="#b4b4b4" stroke-width="1.5"/>
<text x="1534" y="638.3" font-size="15" fill="#cfcfcf" text-anchor="middle" stroke="#cfcfcf" stroke-width="0.3">0.4</text>
<line x1="1075" y1="266.5" x2="1081" y2="266.5" stroke="#b4b4b4" stroke-width="1.5"/>
<text x="1074" y="272.17" font-size="15" fill="#cfcfcf" text-anchor="end" stroke="#cfcfcf" stroke-width="0.3">0.4</text>
<line x1="1590.65" y1="614.5" x2="1590.65" y2="620.5" stroke="#b4b4b4" stroke-width="1.5"/>
<text x="1590.65" y="638.3" font-size="15" fill="#cfcfcf" text-anchor="middle" stroke="#cfcfcf" stroke-width="0.3">0.45</text>
<line x1="1075" y1="222.9" x2="1081" y2="222.9" stroke="#b4b4b4" stroke-width="1.5"/>
<text x="1074" y="228.57" font-size="15" fill="#cfcfcf" text-anchor="end" stroke="#cfcfcf" stroke-width="0.3">0.45</text>
<line x1="1647.3" y1="614.5" x2="1647.3" y2="620.5" stroke="#b4b4b4" stroke-width="1.5"/>
<text x="1647.3" y="638.3" font-size="15" fill="#cfcfcf" text-anchor="middle" stroke="#cfcfcf" stroke-width="0.3">0.5</text>
<line x1="1075" y1="179.3" x2="1081" y2="179.3" stroke="#b4b4b4" stroke-width="1.5"/>
<text x="1074" y="184.97" font-size="15" fill="#cfcfcf" text-anchor="end" stroke="#cfcfcf" stroke-width="0.3">0.5</text>
<line x1="1703.95" y1="614.5" x2="1703.95" y2="620.5" stroke="#b4b4b4" stroke-width="1.5"/>
<text x="1703.95" y="638.3" font-size="15" fill="#cfcfcf" text-anchor="middle" stroke="#cfcfcf" stroke-width="0.3">0.55</text>
<line x1="1075" y1="135.7" x2="1081" y2="135.7" stroke="#b4b4b4" stroke-width="1.5"/>
<text x="1074" y="141.37" font-size="15" fill="#cfcfcf" text-anchor="end" stroke="#cfcfcf" stroke-width="0.3">0.55</text>
<rect x="1081" y="91" width="680.5" height="523.5" fill="none" stroke="#a6a6a6" stroke-width="1.4"/>
<rect x="1355.4" y="188.1" width="13.8" height="13.8" fill="none" stroke="#fff" stroke-width="1.6" stroke-opacity=".72"/>
<rect x="1418.9" y="178.2" width="13.8" height="13.8" fill="none" stroke="#fff" stroke-width="1.6" stroke-opacity=".72"/>
<rect x="1475.5" y="167.6" width="13.8" height="13.8" fill="none" stroke="#fff" stroke-width="1.6" stroke-opacity=".72"/>
<rect x="1535" y="159.1" width="13.8" height="13.8" fill="none" stroke="#fff" stroke-width="1.6" stroke-opacity=".72"/>
<rect x="1583.8" y="150.6" width="13.8" height="13.8" fill="none" stroke="#fff" stroke-width="1.6" stroke-opacity=".72"/>
<rect x="1273.2" y="173.2" width="13.8" height="13.8" fill="none" stroke="#fff" stroke-width="1.6" stroke-opacity=".72"/>
<rect x="1254.6" y="154.6" width="13.8" height="13.8" fill="none" stroke="#fff" stroke-width="1.6" stroke-opacity=".72"/>
<rect x="1238.4" y="139" width="13.8" height="13.8" fill="none" stroke="#fff" stroke-width="1.6" stroke-opacity=".72"/>
<rect x="1226.2" y="125.7" width="13.8" height="13.8" fill="none" stroke="#fff" stroke-width="1.6" stroke-opacity=".72"/>
<rect x="1215.2" y="115.9" width="13.8" height="13.8" fill="none" stroke="#fff" stroke-width="1.6" stroke-opacity=".72"/>
<rect x="1294.6" y="234.7" width="13.8" height="13.8" fill="none" stroke="#fff" stroke-width="1.6" stroke-opacity=".72"/>
<rect x="1290.5" y="276.5" width="13.8" height="13.8" fill="none" stroke="#fff" stroke-width="1.6" stroke-opacity=".72"/>
<rect x="1285.9" y="329.6" width="13.8" height="13.8" fill="none" stroke="#fff" stroke-width="1.6" stroke-opacity=".72"/>
<rect x="1280.4" y="396.5" width="13.8" height="13.8" fill="none" stroke="#fff" stroke-width="1.6" stroke-opacity=".72"/>
<rect x="1273.1" y="469.2" width="13.8" height="13.8" fill="none" stroke="#fff" stroke-width="1.6" stroke-opacity=".72"/>
<rect x="1285.9" y="201.4" width="13.8" height="13.8" fill="none" stroke="#fff" stroke-width="1.6" stroke-opacity=".72"/>
<rect x="1271.2" y="202.9" width="13.8" height="13.8" fill="none" stroke="#fff" stroke-width="1.6" stroke-opacity=".72"/>
<rect x="1257.2" y="205.8" width="13.8" height="13.8" fill="none" stroke="#fff" stroke-width="1.6" stroke-opacity=".72"/>
<rect x="1242.5" y="207.7" width="13.8" height="13.8" fill="none" stroke="#fff" stroke-width="1.6" stroke-opacity=".72"/>
<rect x="1230.9" y="209.6" width="13.8" height="13.8" fill="none" stroke="#fff" stroke-width="1.6" stroke-opacity=".72"/>
<rect x="1318.1" y="217.4" width="13.8" height="13.8" fill="none" stroke="#fff" stroke-width="1.6" stroke-opacity=".72"/>
<rect x="1339.7" y="240.5" width="13.8" height="13.8" fill="none" stroke="#fff" stroke-width="1.6" stroke-opacity=".72"/>
<rect x="1362.8" y="262.2" width="13.8" height="13.8" fill="none" stroke="#fff" stroke-width="1.6" stroke-opacity=".72"/>
<rect x="1390.2" y="289.7" width="13.8" height="13.8" fill="none" stroke="#fff" stroke-width="1.6" stroke-opacity=".72"/>
<rect x="1418.8" y="318.5" width="13.8" height="13.8" fill="none" stroke="#fff" stroke-width="1.6" stroke-opacity=".72"/>
<rect x="1302.6" y="179.1" width="13.8" height="13.8" fill="none" stroke="#fff" stroke-width="1.6" stroke-opacity=".72"/>
<rect x="1303.1" y="159.6" width="13.8" height="13.8" fill="none" stroke="#fff" stroke-width="1.6" stroke-opacity=".72"/>
<rect x="1304.1" y="146.6" width="13.8" height="13.8" fill="none" stroke="#fff" stroke-width="1.6" stroke-opacity=".72"/>
<rect x="1304.1" y="134.6" width="13.8" height="13.8" fill="none" stroke="#fff" stroke-width="1.6" stroke-opacity=".72"/>
<rect x="1305.1" y="124.3" width="13.8" height="13.8" fill="none" stroke="#fff" stroke-width="1.6" stroke-opacity=".72"/>
<circle cx="1364" cy="194.9" r="4.2" fill="rgb(169,163,163)" fill-opacity=".85" stroke="#2c2f2c" stroke-width="1.4"/>
<circle cx="1427.2" cy="185.1" r="4.2" fill="rgb(172,148,148)" fill-opacity=".85" stroke="#2c2f2c" stroke-width="1.4"/>
<circle cx="1483.8" cy="175.9" r="4.2" fill="rgb(178,123,123)" fill-opacity=".85" stroke="#2c2f2c" stroke-width="1.4"/>
<circle cx="1544.1" cy="166" r="4.2" fill="rgb(186,88,88)" fill-opacity=".85" stroke="#2c2f2c" stroke-width="1.4"/>
<circle cx="1596.6" cy="157.5" r="4.2" fill="rgb(196,43,43)" fill-opacity=".85" stroke="#2c2f2c" stroke-width="1.4"/>
<circle cx="1284.4" cy="180.4" r="4.2" fill="rgb(163,167,163)" fill-opacity=".85" stroke="#2c2f2c" stroke-width="1.4"/>
<circle cx="1263.7" cy="160" r="4.2" fill="rgb(149,166,149)" fill-opacity=".85" stroke="#2c2f2c" stroke-width="1.4"/>
<circle cx="1247.9" cy="143.8" r="4.2" fill="rgb(126,165,126)" fill-opacity=".85" stroke="#2c2f2c" stroke-width="1.4"/>
<circle cx="1234.9" cy="132.6" r="4.2" fill="rgb(94,163,94)" fill-opacity=".85" stroke="#2c2f2c" stroke-width="1.4"/>
<circle cx="1226" cy="122.5" r="4.2" fill="rgb(52,160,52)" fill-opacity=".85" stroke="#2c2f2c" stroke-width="1.4"/>
<circle cx="1304.4" cy="241.2" r="4.2" fill="rgb(163,163,169)" fill-opacity=".85" stroke="#2c2f2c" stroke-width="1.4"/>
<circle cx="1300" cy="284.9" r="4.2" fill="rgb(149,149,172)" fill-opacity=".85" stroke="#2c2f2c" stroke-width="1.4"/>
<circle cx="1293" cy="335.5" r="4.2" fill="rgb(126,126,178)" fill-opacity=".85" stroke="#2c2f2c" stroke-width="1.4"/>
<circle cx="1287.3" cy="400.7" r="4.2" fill="rgb(94,94,186)" fill-opacity=".85" stroke="#2c2f2c" stroke-width="1.4"/>
<circle cx="1278.4" cy="475.7" r="4.2" fill="rgb(52,52,196)" fill-opacity=".85" stroke="#2c2f2c" stroke-width="1.4"/>
<circle cx="1295.4" cy="207.6" r="4.2" fill="rgb(163,167,167)" fill-opacity=".85" stroke="#2c2f2c" stroke-width="1.4"/>
<circle cx="1279.9" cy="209.4" r="4.2" fill="rgb(149,165,166)" fill-opacity=".85" stroke="#2c2f2c" stroke-width="1.4"/>
<circle cx="1265.2" cy="212.7" r="4.2" fill="rgb(126,162,165)" fill-opacity=".85" stroke="#2c2f2c" stroke-width="1.4"/>
<circle cx="1252.2" cy="213.5" r="4.2" fill="rgb(94,157,163)" fill-opacity=".85" stroke="#2c2f2c" stroke-width="1.4"/>
<circle cx="1240.6" cy="216.5" r="4.2" fill="rgb(52,151,160)" fill-opacity=".85" stroke="#2c2f2c" stroke-width="1.4"/>
<circle cx="1326" cy="223.8" r="4.2" fill="rgb(168,163,168)" fill-opacity=".85" stroke="#2c2f2c" stroke-width="1.4"/>
<circle cx="1347.8" cy="248.5" r="4.2" fill="rgb(168,149,168)" fill-opacity=".85" stroke="#2c2f2c" stroke-width="1.4"/>
<circle cx="1370" cy="270.1" r="4.2" fill="rgb(168,126,168)" fill-opacity=".85" stroke="#2c2f2c" stroke-width="1.4"/>
<circle cx="1395.6" cy="299.3" r="4.2" fill="rgb(169,94,169)" fill-opacity=".85" stroke="#2c2f2c" stroke-width="1.4"/>
<circle cx="1424.6" cy="329.4" r="4.2" fill="rgb(169,52,169)" fill-opacity=".85" stroke="#2c2f2c" stroke-width="1.4"/>
<circle cx="1310.3" cy="186" r="4.2" fill="rgb(168,167,163)" fill-opacity=".85" stroke="#2c2f2c" stroke-width="1.4"/>
<circle cx="1310.3" cy="166.2" r="4.2" fill="rgb(168,166,151)" fill-opacity=".85" stroke="#2c2f2c" stroke-width="1.4"/>
<circle cx="1311.8" cy="152.9" r="4.2" fill="rgb(168,165,129)" fill-opacity=".85" stroke="#2c2f2c" stroke-width="1.4"/>
<circle cx="1310.3" cy="141.2" r="4.2" fill="rgb(169,163,100)" fill-opacity=".85" stroke="#2c2f2c" stroke-width="1.4"/>
<circle cx="1312.9" cy="130.9" r="4.2" fill="rgb(169,160,61)" fill-opacity=".85" stroke="#2c2f2c" stroke-width="1.4"/>
<rect x="1297.6" y="197.8" width="14" height="14" fill="#fff" stroke="#2a2a2a" stroke-width="1.5" fill-opacity=".75"/>
<circle cx="1307.2" cy="205.4" r="4" fill="#fff" stroke="#2b2b2b" stroke-width="1.4"/>
<circle cx="1319.2" cy="200.7" r="4.6" fill="#000"/>
<rect x="1551.8" y="521.9" width="14" height="14" fill="none" stroke="#fff" stroke-width="1.7" stroke-opacity=".7"/>
<circle cx="1580.5" cy="535.5" r="4.6" fill="#a9b2ad" stroke="#3a3a3a" stroke-width="1.4"/>
<rect x="1634.6" y="521.9" width="14" height="14" fill="#fff" stroke="#222" stroke-width="1.5" fill-opacity=".8"/>
<circle cx="1655.8" cy="529.8" r="4.6" fill="#fff" stroke="#333" stroke-width="1.3"/>
<circle cx="1730.8" cy="515.3" r="5.2" fill="#000"/>
<text x="52.4" y="685.9" font-size="29.7" fill="#e6e6e6" textLength="247.4" lengthAdjust="spacingAndGlyphs" stroke="#e6e6e6" stroke-width="0.45">Avg dE2000: 1.05</text>
<text x="57.3" y="729.1" font-size="29.7" fill="#e6e6e6" textLength="239.2" lengthAdjust="spacingAndGlyphs" stroke="#e6e6e6" stroke-width="0.45">Max dE2000: 3.2</text>
<text x="14.7" y="779.2" font-size="28.8" fill="#e6e6e6" textLength="231.7" lengthAdjust="spacingAndGlyphs" stroke="#e6e6e6" stroke-width="0.45">Current Reading</text>
<text x="14.7" y="817.9" font-size="25" fill="#e6e6e6" textLength="108.2" lengthAdjust="spacingAndGlyphs" stroke="#e6e6e6" stroke-width="0.45">x: 0.3333</text>
<text x="181.2" y="817.9" font-size="25" fill="#e6e6e6" textLength="108.7" lengthAdjust="spacingAndGlyphs" stroke="#e6e6e6" stroke-width="0.45">y: 0.3333</text>
<text x="14.7" y="861.8" font-size="25" fill="#e6e6e6" textLength="49.8" lengthAdjust="spacingAndGlyphs" stroke="#e6e6e6" stroke-width="0.45">fL: 0</text>
<text x="14.7" y="896.5" font-size="25" fill="#e6e6e6" textLength="101.6" lengthAdjust="spacingAndGlyphs" stroke="#e6e6e6" stroke-width="0.45">cd/m²: 0</text>
<rect x="377.8" y="694" width="266.6" height="191.6" fill="#252525"/>
<line x1="372.8" y1="713.16" x2="644.4" y2="713.16" stroke="#8f8f8f" stroke-width="1.3"/>
<text x="371.8" y="718.83" font-size="15" fill="#cfcfcf" text-anchor="end" stroke="#cfcfcf" stroke-width="0.3">104</text>
<line x1="372.8" y1="751.48" x2="644.4" y2="751.48" stroke="#8f8f8f" stroke-width="1.3"/>
<text x="371.8" y="757.15" font-size="15" fill="#cfcfcf" text-anchor="end" stroke="#cfcfcf" stroke-width="0.3">102</text>
<line x1="372.8" y1="789.8" x2="644.4" y2="789.8" stroke="#8f8f8f" stroke-width="1.3"/>
<text x="371.8" y="795.47" font-size="15" fill="#cfcfcf" text-anchor="end" stroke="#cfcfcf" stroke-width="0.3">100</text>
<line x1="372.8" y1="828.12" x2="644.4" y2="828.12" stroke="#8f8f8f" stroke-width="1.3"/>
<text x="371.8" y="833.79" font-size="15" fill="#cfcfcf" text-anchor="end" stroke="#cfcfcf" stroke-width="0.3">98</text>
<line x1="372.8" y1="866.44" x2="644.4" y2="866.44" stroke="#8f8f8f" stroke-width="1.3"/>
<text x="371.8" y="872.11" font-size="15" fill="#cfcfcf" text-anchor="end" stroke="#cfcfcf" stroke-width="0.3">96</text>
<line x1="377.8" y1="694" x2="644.4" y2="694" stroke="#a8a8a8" stroke-width="1.3"/>
<line x1="644.4" y1="694" x2="644.4" y2="891.6" stroke="#a8a8a8" stroke-width="1.3"/>
<line x1="377.8" y1="694" x2="377.8" y2="891.6" stroke="#b4b4b4" stroke-width="1.5"/>
<line x1="377.8" y1="885.6" x2="644.4" y2="885.6" stroke="#a8a8a8" stroke-width="1.3"/>
<rect x="404.3" y="789.8" width="68.6" height="95.2" fill="url(#rb0)" stroke="#0a0a0a" stroke-width="1.2"/>
<rect x="475.4" y="789.8" width="68.9" height="95.2" fill="url(#rb1)" stroke="#0a0a0a" stroke-width="1.2"/>
<rect x="546.3" y="789.8" width="69.3" height="95.2" fill="url(#rb2)" stroke="#0a0a0a" stroke-width="1.2"/>
<text x="495.1" y="688" font-size="15.5" fill="#cfcfcf" text-anchor="middle" textLength="88.5" lengthAdjust="spacingAndGlyphs" stroke="#cfcfcf" stroke-width="0.3">RGB Balance</text>
<text x="510.5" y="902.4" font-size="15" fill="#cfcfcf" text-anchor="middle" stroke="#cfcfcf" stroke-width="0.3">0</text>
<rect x="665.6" y="660" width="408.9" height="250.3" fill="#0c0c0c"/>
<rect x="667.6" y="662" width="404.9" height="28.5" fill="url(#th)"/>
<text x="916.5" y="681.5" font-size="14.5" fill="#f0f0f0" text-anchor="middle" textLength="12.5" lengthAdjust="spacingAndGlyphs" font-family='"DejaVu Sans", "Liberation Sans", sans-serif' stroke="#f0f0f0" stroke-width="0.3">0</text>
<text x="1016.6" y="681.5" font-size="14.5" fill="#f0f0f0" text-anchor="middle" textLength="37" lengthAdjust="spacingAndGlyphs" font-family='"DejaVu Sans", "Liberation Sans", sans-serif' stroke="#f0f0f0" stroke-width="0.3">100</text>
<rect x="667.6" y="690.5" width="404.9" height="27.775" fill="#3b3b3b"/>
<text x="686.3" y="710.137" font-size="16" fill="#f4f4f4" textLength="91" lengthAdjust="spacingAndGlyphs" font-weight="bold" font-family='"DejaVu Sans", "Liberation Sans", sans-serif'>x: CIE31</text>
<text x="880.2" y="710.137" font-size="16" fill="#f4f4f4" textLength="72.3" lengthAdjust="spacingAndGlyphs" font-family='"DejaVu Sans", "Liberation Sans", sans-serif' stroke="#f4f4f4" stroke-width="0.3">0.3333</text>
<text x="966.7" y="710.137" font-size="16" fill="#f4f4f4" textLength="72.3" lengthAdjust="spacingAndGlyphs" font-family='"DejaVu Sans", "Liberation Sans", sans-serif' stroke="#f4f4f4" stroke-width="0.3">0.3160</text>
<rect x="667.6" y="717.975" width="404.9" height="27.775" fill="#7b7b7b"/>
<text x="686.3" y="737.612" font-size="16" fill="#e4e4e4" textLength="91" lengthAdjust="spacingAndGlyphs" font-weight="bold" font-family='"DejaVu Sans", "Liberation Sans", sans-serif'>y: CIE31</text>
<text x="880.2" y="737.612" font-size="16" fill="#e4e4e4" textLength="72.3" lengthAdjust="spacingAndGlyphs" font-family='"DejaVu Sans", "Liberation Sans", sans-serif' stroke="#e4e4e4" stroke-width="0.3">0.3333</text>
<text x="966.7" y="737.612" font-size="16" fill="#e4e4e4" textLength="72.3" lengthAdjust="spacingAndGlyphs" font-family='"DejaVu Sans", "Liberation Sans", sans-serif' stroke="#e4e4e4" stroke-width="0.3">0.3287</text>
<rect x="667.6" y="745.45" width="404.9" height="27.775" fill="#3b3b3b"/>
<text x="686.3" y="765.087" font-size="16" fill="#f4f4f4" textLength="14.5" lengthAdjust="spacingAndGlyphs" font-weight="bold" font-family='"DejaVu Sans", "Liberation Sans", sans-serif'>Y</text>
<text x="880.2" y="765.087" font-size="16" fill="#f4f4f4" textLength="72.3" lengthAdjust="spacingAndGlyphs" font-family='"DejaVu Sans", "Liberation Sans", sans-serif' stroke="#f4f4f4" stroke-width="0.3">0.0000</text>
<text x="966.7" y="765.087" font-size="16" fill="#f4f4f4" textLength="98.7" lengthAdjust="spacingAndGlyphs" font-family='"DejaVu Sans", "Liberation Sans", sans-serif' stroke="#f4f4f4" stroke-width="0.3">284.0472</text>
<rect x="667.6" y="772.925" width="404.9" height="27.775" fill="#7b7b7b"/>
<text x="686.3" y="792.562" font-size="16" fill="#e4e4e4" textLength="166" lengthAdjust="spacingAndGlyphs" font-weight="bold" font-family='"DejaVu Sans", "Liberation Sans", sans-serif'>Target x:CIE31</text>
<text x="880.2" y="792.562" font-size="16" fill="#e4e4e4" textLength="72.3" lengthAdjust="spacingAndGlyphs" font-family='"DejaVu Sans", "Liberation Sans", sans-serif' stroke="#e4e4e4" stroke-width="0.3">0.3127</text>
<text x="966.7" y="792.562" font-size="16" fill="#e4e4e4" textLength="72.3" lengthAdjust="spacingAndGlyphs" font-family='"DejaVu Sans", "Liberation Sans", sans-serif' stroke="#e4e4e4" stroke-width="0.3">0.3127</text>
<rect x="667.6" y="800.4" width="404.9" height="27.775" fill="#3b3b3b"/>
<text x="686.3" y="820.037" font-size="16" fill="#f4f4f4" textLength="166" lengthAdjust="spacingAndGlyphs" font-weight="bold" font-family='"DejaVu Sans", "Liberation Sans", sans-serif'>Target y:CIE31</text>
<text x="880.2" y="820.037" font-size="16" fill="#f4f4f4" textLength="72.3" lengthAdjust="spacingAndGlyphs" font-family='"DejaVu Sans", "Liberation Sans", sans-serif' stroke="#f4f4f4" stroke-width="0.3">0.3290</text>
<text x="966.7" y="820.037" font-size="16" fill="#f4f4f4" textLength="72.3" lengthAdjust="spacingAndGlyphs" font-family='"DejaVu Sans", "Liberation Sans", sans-serif' stroke="#f4f4f4" stroke-width="0.3">0.3290</text>
<rect x="667.6" y="827.875" width="404.9" height="27.775" fill="#7b7b7b"/>
<text x="686.3" y="847.512" font-size="16" fill="#e4e4e4" textLength="96" lengthAdjust="spacingAndGlyphs" font-weight="bold" font-family='"DejaVu Sans", "Liberation Sans", sans-serif'>Target Y</text>
<text x="880.2" y="847.512" font-size="16" fill="#e4e4e4" textLength="72.3" lengthAdjust="spacingAndGlyphs" font-family='"DejaVu Sans", "Liberation Sans", sans-serif' stroke="#e4e4e4" stroke-width="0.3">0.0000</text>
<text x="966.7" y="847.512" font-size="16" fill="#e4e4e4" textLength="98.7" lengthAdjust="spacingAndGlyphs" font-family='"DejaVu Sans", "Liberation Sans", sans-serif' stroke="#e4e4e4" stroke-width="0.3">284.0472</text>
<rect x="667.6" y="855.35" width="404.9" height="27.775" fill="#3b3b3b"/>
<text x="686.3" y="874.987" font-size="16" fill="#f4f4f4" textLength="95" lengthAdjust="spacingAndGlyphs" font-weight="bold" font-family='"DejaVu Sans", "Liberation Sans", sans-serif'>ΔE 2000</text>
<text x="880.2" y="874.987" font-size="16" fill="#f4f4f4" textLength="72.3" lengthAdjust="spacingAndGlyphs" font-family='"DejaVu Sans", "Liberation Sans", sans-serif' stroke="#f4f4f4" stroke-width="0.3">0.0000</text>
<text x="966.7" y="874.987" font-size="16" fill="#f4f4f4" textLength="72.3" lengthAdjust="spacingAndGlyphs" font-family='"DejaVu Sans", "Liberation Sans", sans-serif' stroke="#f4f4f4" stroke-width="0.3">2.7352</text>
<rect x="667.6" y="882.825" width="404.9" height="27.775" fill="#7b7b7b"/>
<text x="686.3" y="902.462" font-size="16" fill="#e4e4e4" textLength="75" lengthAdjust="spacingAndGlyphs" font-weight="bold" font-family='"DejaVu Sans", "Liberation Sans", sans-serif'>ΔE ITP</text>
<text x="880.2" y="902.462" font-size="16" fill="#e4e4e4" textLength="72.3" lengthAdjust="spacingAndGlyphs" font-family='"DejaVu Sans", "Liberation Sans", sans-serif' stroke="#e4e4e4" stroke-width="0.3">0.0050</text>
<text x="966.7" y="902.462" font-size="16" fill="#e4e4e4" textLength="72.3" lengthAdjust="spacingAndGlyphs" font-family='"DejaVu Sans", "Liberation Sans", sans-serif' stroke="#e4e4e4" stroke-width="0.3">2.3678</text>
</svg>
</div>
</body></html>
